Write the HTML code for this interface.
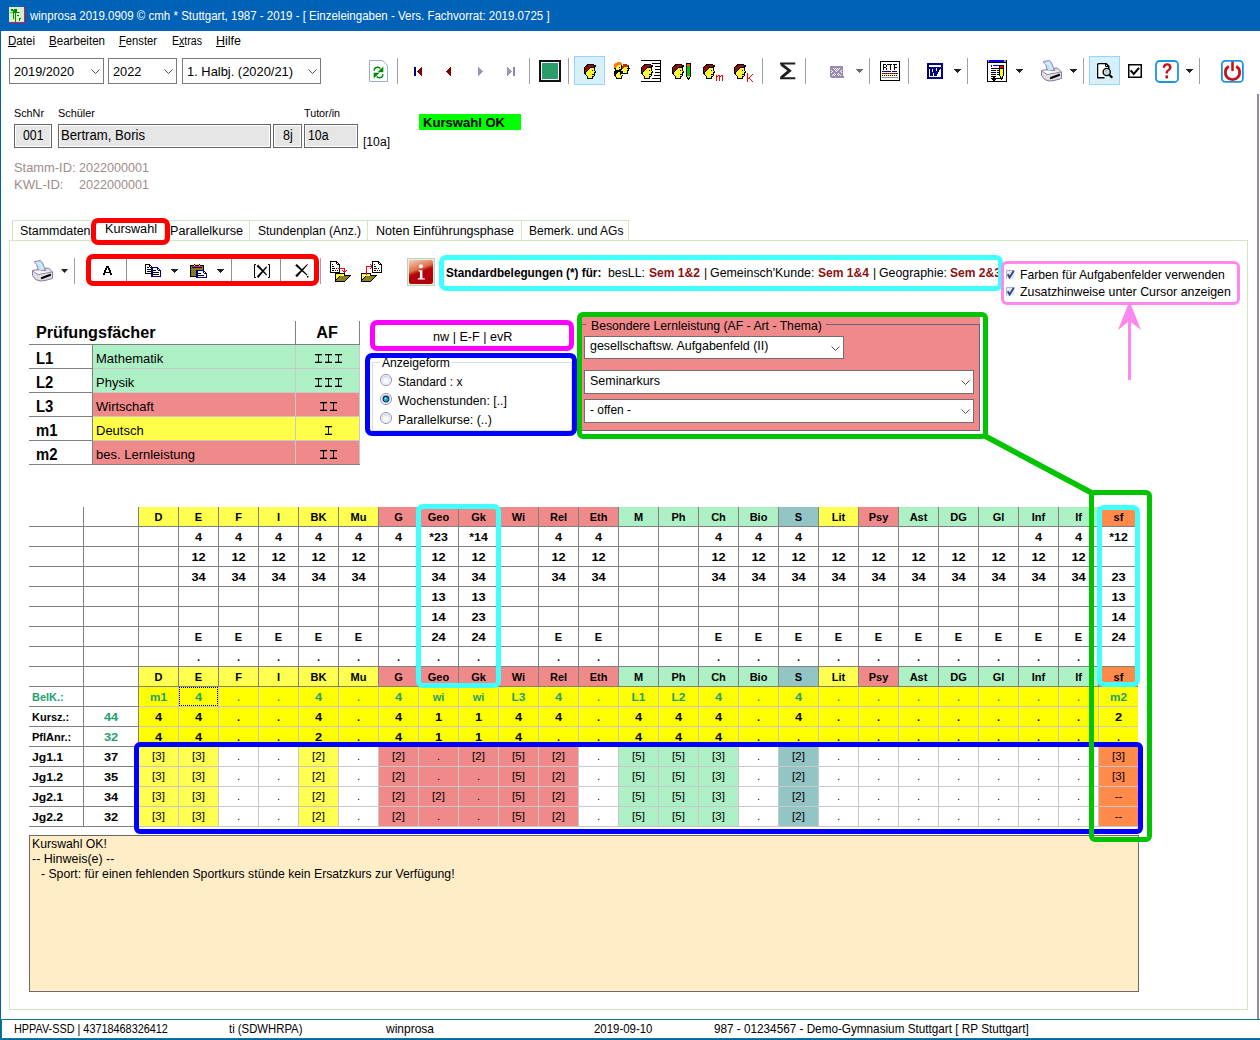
<!DOCTYPE html>
<html><head><meta charset="utf-8"><title>winprosa</title>
<style>
html,body{margin:0;padding:0;}
body{width:1260px;height:1040px;position:relative;overflow:hidden;background:#fff;font-family:"Liberation Sans",sans-serif;}
.a{position:absolute;box-sizing:border-box;}
.t{position:absolute;white-space:nowrap;line-height:1;}
svg.a{overflow:visible;}
</style></head><body>

<div class="a" style="left:0px;top:0px;width:1260px;height:31px;background:#0062b7;"></div>
<svg class="a" style="left:9px;top:7px;" width="16" height="16" viewBox="0 0 16 16" shape-rendering="crispEdges"><rect x="0" y="0" width="15" height="1" fill="#d6efc6"/><rect x="15" y="0" width="1" height="1" fill="#f01050"/><rect x="0" y="1" width="15" height="1" fill="#d6efc6"/><rect x="15" y="1" width="1" height="1" fill="#f01050"/><rect x="0" y="2" width="2" height="1" fill="#d6efc6"/><rect x="2" y="2" width="2" height="1" fill="#008a00"/><rect x="4" y="2" width="1" height="1" fill="#d6efc6"/><rect x="5" y="2" width="3" height="1" fill="#008a00"/><rect x="8" y="2" width="7" height="1" fill="#d6efc6"/><rect x="15" y="2" width="1" height="1" fill="#f01050"/><rect x="0" y="3" width="2" height="1" fill="#d6efc6"/><rect x="2" y="3" width="6" height="1" fill="#008a00"/><rect x="8" y="3" width="7" height="1" fill="#d6efc6"/><rect x="15" y="3" width="1" height="1" fill="#f01050"/><rect x="0" y="4" width="4" height="1" fill="#d6efc6"/><rect x="4" y="4" width="4" height="1" fill="#008a00"/><rect x="8" y="4" width="7" height="1" fill="#d6efc6"/><rect x="15" y="4" width="1" height="1" fill="#f01050"/><rect x="0" y="5" width="1" height="1" fill="#d6efc6"/><rect x="1" y="5" width="3" height="1" fill="#60b860"/><rect x="4" y="5" width="6" height="1" fill="#008a00"/><rect x="10" y="5" width="1" height="1" fill="#60b860"/><rect x="11" y="5" width="4" height="1" fill="#d6efc6"/><rect x="15" y="5" width="1" height="1" fill="#f01050"/><rect x="0" y="6" width="4" height="1" fill="#d6efc6"/><rect x="4" y="6" width="1" height="1" fill="#008a00"/><rect x="5" y="6" width="1" height="1" fill="#d6efc6"/><rect x="6" y="6" width="1" height="1" fill="#008a00"/><rect x="7" y="6" width="8" height="1" fill="#d6efc6"/><rect x="15" y="6" width="1" height="1" fill="#f01050"/><rect x="0" y="7" width="4" height="1" fill="#d6efc6"/><rect x="4" y="7" width="1" height="1" fill="#008a00"/><rect x="5" y="7" width="1" height="1" fill="#d6efc6"/><rect x="6" y="7" width="1" height="1" fill="#008a00"/><rect x="7" y="7" width="8" height="1" fill="#d6efc6"/><rect x="15" y="7" width="1" height="1" fill="#f01050"/><rect x="0" y="8" width="4" height="1" fill="#d6efc6"/><rect x="4" y="8" width="1" height="1" fill="#008a00"/><rect x="5" y="8" width="1" height="1" fill="#d6efc6"/><rect x="6" y="8" width="1" height="1" fill="#008a00"/><rect x="7" y="8" width="1" height="1" fill="#d6efc6"/><rect x="8" y="8" width="2" height="1" fill="#008a00"/><rect x="10" y="8" width="5" height="1" fill="#d6efc6"/><rect x="15" y="8" width="1" height="1" fill="#f01050"/><rect x="0" y="9" width="4" height="1" fill="#d6efc6"/><rect x="4" y="9" width="1" height="1" fill="#008a00"/><rect x="5" y="9" width="1" height="1" fill="#d6efc6"/><rect x="6" y="9" width="1" height="1" fill="#008a00"/><rect x="7" y="9" width="8" height="1" fill="#d6efc6"/><rect x="15" y="9" width="1" height="1" fill="#f01050"/><rect x="0" y="10" width="4" height="1" fill="#d6efc6"/><rect x="4" y="10" width="1" height="1" fill="#008a00"/><rect x="5" y="10" width="1" height="1" fill="#d6efc6"/><rect x="6" y="10" width="1" height="1" fill="#008a00"/><rect x="7" y="10" width="8" height="1" fill="#d6efc6"/><rect x="15" y="10" width="1" height="1" fill="#f01050"/><rect x="0" y="11" width="4" height="1" fill="#d6efc6"/><rect x="4" y="11" width="1" height="1" fill="#008a00"/><rect x="5" y="11" width="1" height="1" fill="#d6efc6"/><rect x="6" y="11" width="1" height="1" fill="#008a00"/><rect x="7" y="11" width="3" height="1" fill="#d6efc6"/><rect x="10" y="11" width="2" height="1" fill="#008a00"/><rect x="12" y="11" width="3" height="1" fill="#d6efc6"/><rect x="15" y="11" width="1" height="1" fill="#f01050"/><rect x="0" y="12" width="6" height="1" fill="#d6efc6"/><rect x="6" y="12" width="1" height="1" fill="#008a00"/><rect x="7" y="12" width="3" height="1" fill="#d6efc6"/><rect x="10" y="12" width="1" height="1" fill="#008a00"/><rect x="11" y="12" width="4" height="1" fill="#d6efc6"/><rect x="15" y="12" width="1" height="1" fill="#f01050"/><rect x="0" y="13" width="6" height="1" fill="#d6efc6"/><rect x="6" y="13" width="1" height="1" fill="#008a00"/><rect x="7" y="13" width="3" height="1" fill="#d6efc6"/><rect x="10" y="13" width="1" height="1" fill="#008a00"/><rect x="11" y="13" width="4" height="1" fill="#d6efc6"/><rect x="15" y="13" width="1" height="1" fill="#f01050"/><rect x="0" y="14" width="6" height="1" fill="#d6efc6"/><rect x="6" y="14" width="1" height="1" fill="#008a00"/><rect x="7" y="14" width="8" height="1" fill="#d6efc6"/><rect x="15" y="14" width="1" height="1" fill="#f01050"/><rect x="0" y="15" width="16" height="1" fill="#f01050"/></svg>
<div class="t " style="left:30px;top:9.50px;font-size:12.4px;font-weight:normal;color:#fff;transform:scaleX(0.9287);transform-origin:0 0;">winprosa 2019.0909 © cmh * Stuttgart, 1987 - 2019 - [ Einzeleingaben - Vers. Fachvorrat: 2019.0725 ]</div>
<div class="a" style="left:0px;top:31px;width:1px;height:1009px;background:#0062b7;"></div>
<div class="a" style="left:0px;top:1039px;width:1260px;height:1px;background:#0062b7;"></div>
<div class="t " style="left:8px;top:34.84px;font-size:12px;font-weight:normal;color:#000;transform:scaleX(0.9638);transform-origin:0 0;text-decoration-thickness:1px;text-underline-offset:1px;"><u>D</u>atei</div>
<div class="t " style="left:49px;top:34.84px;font-size:12px;font-weight:normal;color:#000;transform:scaleX(0.9648);transform-origin:0 0;text-decoration-thickness:1px;text-underline-offset:1px;"><u>B</u>earbeiten</div>
<div class="t " style="left:119px;top:34.84px;font-size:12px;font-weight:normal;color:#000;transform:scaleX(0.9341);transform-origin:0 0;text-decoration-thickness:1px;text-underline-offset:1px;"><u>F</u>enster</div>
<div class="t " style="left:172px;top:34.84px;font-size:12px;font-weight:normal;color:#000;transform:scaleX(0.8821);transform-origin:0 0;text-decoration-thickness:1px;text-underline-offset:1px;">E<u>x</u>tras</div>
<div class="t " style="left:216px;top:34.84px;font-size:12px;font-weight:normal;color:#000;transform:scaleX(1.0414);transform-origin:0 0;text-decoration-thickness:1px;text-underline-offset:1px;"><u>H</u>ilfe</div>
<div class="a" style="left:9px;top:58px;width:95px;height:26px;background:#fff;border:1px solid #7a7a7a;"></div>
<div class="t " style="left:14px;top:65.00px;font-size:13px;font-weight:normal;color:#000;transform:scaleX(0.9763);transform-origin:0 0;">2019/2020</div>
<svg class="a" style="left:91px;top:69px;" width="9" height="6" viewBox="0 0 9 6"><path d="M0.5 0.5 L4.5 4.5 L8.5 0.5" fill="none" stroke="#505050" stroke-width="1"/></svg>
<div class="a" style="left:108px;top:58px;width:69px;height:26px;background:#fff;border:1px solid #7a7a7a;"></div>
<div class="t " style="left:113px;top:65.00px;font-size:13px;font-weight:normal;color:#000;transform:scaleX(0.9854);transform-origin:0 0;">2022</div>
<svg class="a" style="left:164px;top:69px;" width="9" height="6" viewBox="0 0 9 6"><path d="M0.5 0.5 L4.5 4.5 L8.5 0.5" fill="none" stroke="#505050" stroke-width="1"/></svg>
<div class="a" style="left:182px;top:58px;width:139px;height:26px;background:#fff;border:1px solid #7a7a7a;"></div>
<div class="t " style="left:187px;top:65.00px;font-size:13px;font-weight:normal;color:#000;transform:scaleX(0.9911);transform-origin:0 0;">1. Halbj. (2020/21)</div>
<svg class="a" style="left:308px;top:69px;" width="9" height="6" viewBox="0 0 9 6"><path d="M0.5 0.5 L4.5 4.5 L8.5 0.5" fill="none" stroke="#505050" stroke-width="1"/></svg>
<svg class="a" style="left:369px;top:60px;" width="20" height="22" viewBox="0 0 20 22"><path d="M0.5 0.5H13.5L18.5 5.5V21.5H0.5Z" fill="#fff" stroke="#9ab0c8"/><path d="M5.2 10.8C5.2 8.5 6.8 7.2 8.8 7.2C10 7.2 10.8 7.8 11.4 8.6" fill="none" stroke="#008a00" stroke-width="1.5"/><path d="M8.5 12.3H14.3V6.5Z" fill="#008a00"/><path d="M13.8 14.2C13.8 16.5 12.2 17.8 10.2 17.8C9 17.8 8.2 17.2 7.6 16.4" fill="none" stroke="#008a00" stroke-width="1.5"/><path d="M10.5 12.7H4.7V18.5Z" fill="#008a00"/></svg>
<div class="a" style="left:397px;top:58px;width:1px;height:26px;background:#a0a0a0;"></div>
<svg class="a" style="left:414px;top:67px;" width="8" height="9" viewBox="0 0 8 9" shape-rendering="crispEdges"><rect x="0" y="0" width="2" height="1" fill="#000080"/><rect x="7" y="0" width="1" height="1" fill="#800000"/><rect x="0" y="1" width="2" height="1" fill="#000080"/><rect x="6" y="1" width="2" height="1" fill="#800000"/><rect x="0" y="2" width="2" height="1" fill="#000080"/><rect x="5" y="2" width="3" height="1" fill="#800000"/><rect x="0" y="3" width="2" height="1" fill="#000080"/><rect x="4" y="3" width="4" height="1" fill="#800000"/><rect x="0" y="4" width="2" height="1" fill="#000080"/><rect x="3" y="4" width="5" height="1" fill="#800000"/><rect x="0" y="5" width="2" height="1" fill="#000080"/><rect x="4" y="5" width="4" height="1" fill="#800000"/><rect x="0" y="6" width="2" height="1" fill="#000080"/><rect x="5" y="6" width="3" height="1" fill="#800000"/><rect x="0" y="7" width="2" height="1" fill="#000080"/><rect x="6" y="7" width="2" height="1" fill="#800000"/><rect x="0" y="8" width="2" height="1" fill="#000080"/><rect x="7" y="8" width="1" height="1" fill="#800000"/></svg>
<svg class="a" style="left:446px;top:67px;" width="5" height="9" viewBox="0 0 5 9" shape-rendering="crispEdges"><rect x="4" y="0" width="1" height="1" fill="#800000"/><rect x="3" y="1" width="2" height="1" fill="#800000"/><rect x="2" y="2" width="3" height="1" fill="#800000"/><rect x="1" y="3" width="4" height="1" fill="#800000"/><rect x="0" y="4" width="5" height="1" fill="#800000"/><rect x="1" y="5" width="4" height="1" fill="#800000"/><rect x="2" y="6" width="3" height="1" fill="#800000"/><rect x="3" y="7" width="2" height="1" fill="#800000"/><rect x="4" y="8" width="1" height="1" fill="#800000"/></svg>
<svg class="a" style="left:478px;top:67px;" width="5" height="9" viewBox="0 0 5 9" shape-rendering="crispEdges"><rect x="0" y="0" width="1" height="1" fill="#a292b4"/><rect x="0" y="1" width="2" height="1" fill="#a292b4"/><rect x="0" y="2" width="3" height="1" fill="#a292b4"/><rect x="0" y="3" width="4" height="1" fill="#a292b4"/><rect x="0" y="4" width="5" height="1" fill="#a292b4"/><rect x="0" y="5" width="4" height="1" fill="#a292b4"/><rect x="0" y="6" width="3" height="1" fill="#a292b4"/><rect x="0" y="7" width="2" height="1" fill="#a292b4"/><rect x="0" y="8" width="1" height="1" fill="#a292b4"/></svg>
<svg class="a" style="left:507px;top:67px;" width="8" height="9" viewBox="0 0 8 9" shape-rendering="crispEdges"><rect x="0" y="0" width="1" height="1" fill="#a292b4"/><rect x="6" y="0" width="2" height="1" fill="#9484a8"/><rect x="0" y="1" width="2" height="1" fill="#a292b4"/><rect x="6" y="1" width="2" height="1" fill="#9484a8"/><rect x="0" y="2" width="3" height="1" fill="#a292b4"/><rect x="6" y="2" width="2" height="1" fill="#9484a8"/><rect x="0" y="3" width="4" height="1" fill="#a292b4"/><rect x="6" y="3" width="2" height="1" fill="#9484a8"/><rect x="0" y="4" width="5" height="1" fill="#a292b4"/><rect x="6" y="4" width="2" height="1" fill="#9484a8"/><rect x="0" y="5" width="4" height="1" fill="#a292b4"/><rect x="6" y="5" width="2" height="1" fill="#9484a8"/><rect x="0" y="6" width="3" height="1" fill="#a292b4"/><rect x="6" y="6" width="2" height="1" fill="#9484a8"/><rect x="0" y="7" width="2" height="1" fill="#a292b4"/><rect x="6" y="7" width="2" height="1" fill="#9484a8"/><rect x="0" y="8" width="1" height="1" fill="#a292b4"/><rect x="6" y="8" width="2" height="1" fill="#9484a8"/></svg>
<div class="a" style="left:529px;top:58px;width:1px;height:26px;background:#a0a0a0;"></div>
<div class="a" style="left:539px;top:60px;width:22px;height:22px;border:2px solid #111;background:#fff;"></div>
<div class="a" style="left:542px;top:63px;width:16px;height:16px;background:#2a9d6a;"></div>
<div class="a" style="left:568px;top:58px;width:1px;height:26px;background:#a0a0a0;"></div>
<div class="a" style="left:574px;top:56px;width:31px;height:29px;background:#d5f1fd;border:1px solid #99d1ff;"></div>
<svg class="a" style="left:584px;top:64px;" width="12" height="15" viewBox="0 0 12 15" shape-rendering="crispEdges"><rect x="3" y="0" width="7" height="1" fill="#000"/><rect x="2" y="1" width="2" height="1" fill="#000"/><rect x="4" y="1" width="6" height="1" fill="#8e0c0c"/><rect x="10" y="1" width="2" height="1" fill="#000"/><rect x="1" y="2" width="1" height="1" fill="#000"/><rect x="2" y="2" width="8" height="1" fill="#8e0c0c"/><rect x="10" y="2" width="2" height="1" fill="#000"/><rect x="0" y="3" width="1" height="1" fill="#000"/><rect x="1" y="3" width="5" height="1" fill="#8e0c0c"/><rect x="6" y="3" width="5" height="1" fill="#000"/><rect x="0" y="4" width="1" height="1" fill="#000"/><rect x="1" y="4" width="4" height="1" fill="#8e0c0c"/><rect x="5" y="4" width="1" height="1" fill="#000"/><rect x="6" y="4" width="1" height="1" fill="#ffff00"/><rect x="7" y="4" width="1" height="1" fill="#e6ecd8"/><rect x="8" y="4" width="1" height="1" fill="#ffff00"/><rect x="9" y="4" width="1" height="1" fill="#e6ecd8"/><rect x="10" y="4" width="1" height="1" fill="#000"/><rect x="0" y="5" width="1" height="1" fill="#000"/><rect x="1" y="5" width="3" height="1" fill="#8e0c0c"/><rect x="4" y="5" width="1" height="1" fill="#000"/><rect x="5" y="5" width="1" height="1" fill="#ffff00"/><rect x="6" y="5" width="1" height="1" fill="#ffff00"/><rect x="7" y="5" width="1" height="1" fill="#ffff00"/><rect x="8" y="5" width="1" height="1" fill="#ffff00"/><rect x="9" y="5" width="1" height="1" fill="#ffff00"/><rect x="10" y="5" width="1" height="1" fill="#000"/><rect x="0" y="6" width="1" height="1" fill="#000"/><rect x="1" y="6" width="2" height="1" fill="#8e0c0c"/><rect x="3" y="6" width="1" height="1" fill="#000"/><rect x="4" y="6" width="1" height="1" fill="#ffff00"/><rect x="5" y="6" width="1" height="1" fill="#e6ecd8"/><rect x="6" y="6" width="1" height="1" fill="#ffff00"/><rect x="7" y="6" width="1" height="1" fill="#e6ecd8"/><rect x="8" y="6" width="1" height="1" fill="#000"/><rect x="9" y="6" width="1" height="1" fill="#e6ecd8"/><rect x="10" y="6" width="1" height="1" fill="#000"/><rect x="0" y="7" width="1" height="1" fill="#000"/><rect x="1" y="7" width="1" height="1" fill="#8e0c0c"/><rect x="2" y="7" width="1" height="1" fill="#000"/><rect x="3" y="7" width="1" height="1" fill="#ffff00"/><rect x="4" y="7" width="1" height="1" fill="#ffff00"/><rect x="5" y="7" width="1" height="1" fill="#ffff00"/><rect x="6" y="7" width="1" height="1" fill="#ffff00"/><rect x="7" y="7" width="1" height="1" fill="#ffff00"/><rect x="8" y="7" width="1" height="1" fill="#ffff00"/><rect x="9" y="7" width="1" height="1" fill="#ffff00"/><rect x="10" y="7" width="1" height="1" fill="#ffff00"/><rect x="11" y="7" width="1" height="1" fill="#000"/><rect x="0" y="8" width="2" height="1" fill="#000"/><rect x="2" y="8" width="1" height="1" fill="#ffff00"/><rect x="3" y="8" width="1" height="1" fill="#e6ecd8"/><rect x="4" y="8" width="1" height="1" fill="#ffff00"/><rect x="5" y="8" width="1" height="1" fill="#e6ecd8"/><rect x="6" y="8" width="1" height="1" fill="#ffff00"/><rect x="7" y="8" width="1" height="1" fill="#e6ecd8"/><rect x="8" y="8" width="1" height="1" fill="#ffff00"/><rect x="9" y="8" width="1" height="1" fill="#e6ecd8"/><rect x="10" y="8" width="2" height="1" fill="#000"/><rect x="0" y="9" width="2" height="1" fill="#000"/><rect x="2" y="9" width="1" height="1" fill="#ffff00"/><rect x="3" y="9" width="1" height="1" fill="#ffff00"/><rect x="4" y="9" width="1" height="1" fill="#ffff00"/><rect x="5" y="9" width="1" height="1" fill="#ffff00"/><rect x="6" y="9" width="1" height="1" fill="#ffff00"/><rect x="7" y="9" width="1" height="1" fill="#ffff00"/><rect x="8" y="9" width="1" height="1" fill="#ffff00"/><rect x="9" y="9" width="1" height="1" fill="#ffff00"/><rect x="10" y="9" width="1" height="1" fill="#000"/><rect x="1" y="10" width="1" height="1" fill="#000"/><rect x="2" y="10" width="1" height="1" fill="#ffff00"/><rect x="3" y="10" width="1" height="1" fill="#e6ecd8"/><rect x="4" y="10" width="1" height="1" fill="#ffff00"/><rect x="5" y="10" width="1" height="1" fill="#e6ecd8"/><rect x="6" y="10" width="1" height="1" fill="#ffff00"/><rect x="7" y="10" width="1" height="1" fill="#e6ecd8"/><rect x="8" y="10" width="3" height="1" fill="#000"/><rect x="2" y="11" width="1" height="1" fill="#000"/><rect x="3" y="11" width="1" height="1" fill="#ffff00"/><rect x="4" y="11" width="1" height="1" fill="#ffff00"/><rect x="5" y="11" width="1" height="1" fill="#ffff00"/><rect x="6" y="11" width="1" height="1" fill="#ffff00"/><rect x="7" y="11" width="1" height="1" fill="#ffff00"/><rect x="8" y="11" width="1" height="1" fill="#ffff00"/><rect x="9" y="11" width="1" height="1" fill="#ffff00"/><rect x="10" y="11" width="1" height="1" fill="#000"/><rect x="3" y="12" width="1" height="1" fill="#000"/><rect x="4" y="12" width="1" height="1" fill="#ffff00"/><rect x="5" y="12" width="1" height="1" fill="#e6ecd8"/><rect x="6" y="12" width="1" height="1" fill="#ffff00"/><rect x="7" y="12" width="1" height="1" fill="#e6ecd8"/><rect x="8" y="12" width="2" height="1" fill="#000"/><rect x="3" y="13" width="1" height="1" fill="#000"/><rect x="4" y="13" width="1" height="1" fill="#ffff00"/><rect x="5" y="13" width="1" height="1" fill="#ffff00"/><rect x="6" y="13" width="1" height="1" fill="#ffff00"/><rect x="7" y="13" width="1" height="1" fill="#ffff00"/><rect x="8" y="13" width="1" height="1" fill="#000"/><rect x="3" y="14" width="6" height="1" fill="#000"/></svg>
<svg class="a" style="left:614px;top:62px;" width="16" height="17" viewBox="0 0 16 17" shape-rendering="crispEdges"><rect x="3" y="0" width="4" height="1" fill="#ff7a10"/><rect x="1" y="1" width="7" height="1" fill="#ff7a10"/><rect x="0" y="2" width="8" height="1" fill="#ff7a10"/><rect x="9" y="2" width="4" height="1" fill="#b83000"/><rect x="0" y="3" width="4" height="1" fill="#ff7a10"/><rect x="4" y="3" width="1" height="1" fill="#ffff00"/><rect x="5" y="3" width="1" height="1" fill="#ffff00"/><rect x="6" y="3" width="1" height="1" fill="#ffff00"/><rect x="7" y="3" width="1" height="1" fill="#000"/><rect x="9" y="3" width="6" height="1" fill="#b83000"/><rect x="0" y="4" width="3" height="1" fill="#ff7a10"/><rect x="3" y="4" width="1" height="1" fill="#e6ecd8"/><rect x="4" y="4" width="1" height="1" fill="#ffff00"/><rect x="5" y="4" width="1" height="1" fill="#e6ecd8"/><rect x="6" y="4" width="1" height="1" fill="#ffff00"/><rect x="7" y="4" width="1" height="1" fill="#000"/><rect x="8" y="4" width="6" height="1" fill="#b83000"/><rect x="14" y="4" width="1" height="1" fill="#000"/><rect x="0" y="5" width="2" height="1" fill="#ff7a10"/><rect x="2" y="5" width="1" height="1" fill="#ffff00"/><rect x="3" y="5" width="1" height="1" fill="#ffff00"/><rect x="4" y="5" width="1" height="1" fill="#ffff00"/><rect x="5" y="5" width="1" height="1" fill="#000"/><rect x="6" y="5" width="1" height="1" fill="#ffff00"/><rect x="7" y="5" width="1" height="1" fill="#000"/><rect x="8" y="5" width="2" height="1" fill="#b83000"/><rect x="10" y="5" width="1" height="1" fill="#ffff00"/><rect x="11" y="5" width="1" height="1" fill="#ffff00"/><rect x="12" y="5" width="1" height="1" fill="#ffff00"/><rect x="13" y="5" width="1" height="1" fill="#ffff00"/><rect x="14" y="5" width="1" height="1" fill="#000"/><rect x="0" y="6" width="2" height="1" fill="#000"/><rect x="2" y="6" width="1" height="1" fill="#ffff00"/><rect x="3" y="6" width="1" height="1" fill="#e6ecd8"/><rect x="4" y="6" width="1" height="1" fill="#ffff00"/><rect x="5" y="6" width="1" height="1" fill="#e6ecd8"/><rect x="6" y="6" width="1" height="1" fill="#ffff00"/><rect x="7" y="6" width="1" height="1" fill="#000"/><rect x="8" y="6" width="1" height="1" fill="#b83000"/><rect x="9" y="6" width="1" height="1" fill="#e6ecd8"/><rect x="10" y="6" width="1" height="1" fill="#ffff00"/><rect x="11" y="6" width="1" height="1" fill="#e6ecd8"/><rect x="12" y="6" width="1" height="1" fill="#ffff00"/><rect x="13" y="6" width="3" height="1" fill="#000"/><rect x="1" y="7" width="1" height="1" fill="#000"/><rect x="2" y="7" width="1" height="1" fill="#ffff00"/><rect x="3" y="7" width="1" height="1" fill="#ffff00"/><rect x="4" y="7" width="1" height="1" fill="#ffff00"/><rect x="5" y="7" width="3" height="1" fill="#000"/><rect x="8" y="7" width="1" height="1" fill="#ffff00"/><rect x="9" y="7" width="1" height="1" fill="#ffff00"/><rect x="10" y="7" width="1" height="1" fill="#ffff00"/><rect x="11" y="7" width="1" height="1" fill="#ffff00"/><rect x="12" y="7" width="1" height="1" fill="#ffff00"/><rect x="13" y="7" width="1" height="1" fill="#ffff00"/><rect x="14" y="7" width="1" height="1" fill="#000"/><rect x="1" y="8" width="6" height="1" fill="#000"/><rect x="7" y="8" width="1" height="1" fill="#e6ecd8"/><rect x="8" y="8" width="1" height="1" fill="#ffff00"/><rect x="9" y="8" width="1" height="1" fill="#e6ecd8"/><rect x="10" y="8" width="1" height="1" fill="#ffff00"/><rect x="11" y="8" width="1" height="1" fill="#e6ecd8"/><rect x="12" y="8" width="1" height="1" fill="#ffff00"/><rect x="13" y="8" width="2" height="1" fill="#000"/><rect x="0" y="9" width="9" height="1" fill="#000"/><rect x="9" y="9" width="1" height="1" fill="#ffff00"/><rect x="10" y="9" width="1" height="1" fill="#ffff00"/><rect x="11" y="9" width="1" height="1" fill="#ffff00"/><rect x="12" y="9" width="1" height="1" fill="#ffff00"/><rect x="13" y="9" width="1" height="1" fill="#000"/><rect x="0" y="10" width="4" height="1" fill="#000"/><rect x="4" y="10" width="1" height="1" fill="#ffff00"/><rect x="5" y="10" width="1" height="1" fill="#e6ecd8"/><rect x="6" y="10" width="3" height="1" fill="#000"/><rect x="9" y="10" width="1" height="1" fill="#e6ecd8"/><rect x="10" y="10" width="1" height="1" fill="#ffff00"/><rect x="11" y="10" width="1" height="1" fill="#e6ecd8"/><rect x="12" y="10" width="1" height="1" fill="#ffff00"/><rect x="13" y="10" width="1" height="1" fill="#000"/><rect x="0" y="11" width="3" height="1" fill="#000"/><rect x="3" y="11" width="1" height="1" fill="#ffff00"/><rect x="4" y="11" width="1" height="1" fill="#ffff00"/><rect x="5" y="11" width="1" height="1" fill="#ffff00"/><rect x="6" y="11" width="8" height="1" fill="#000"/><rect x="0" y="12" width="2" height="1" fill="#000"/><rect x="2" y="12" width="1" height="1" fill="#ffff00"/><rect x="3" y="12" width="1" height="1" fill="#e6ecd8"/><rect x="4" y="12" width="1" height="1" fill="#ffff00"/><rect x="5" y="12" width="1" height="1" fill="#e6ecd8"/><rect x="6" y="12" width="1" height="1" fill="#000"/><rect x="7" y="12" width="1" height="1" fill="#e6ecd8"/><rect x="0" y="13" width="2" height="1" fill="#000"/><rect x="2" y="13" width="1" height="1" fill="#ffff00"/><rect x="3" y="13" width="1" height="1" fill="#ffff00"/><rect x="4" y="13" width="1" height="1" fill="#ffff00"/><rect x="5" y="13" width="1" height="1" fill="#ffff00"/><rect x="6" y="13" width="1" height="1" fill="#ffff00"/><rect x="7" y="13" width="1" height="1" fill="#ffff00"/><rect x="8" y="13" width="1" height="1" fill="#000"/><rect x="1" y="14" width="1" height="1" fill="#000"/><rect x="2" y="14" width="1" height="1" fill="#ffff00"/><rect x="3" y="14" width="1" height="1" fill="#e6ecd8"/><rect x="4" y="14" width="1" height="1" fill="#ffff00"/><rect x="5" y="14" width="1" height="1" fill="#e6ecd8"/><rect x="6" y="14" width="1" height="1" fill="#ffff00"/><rect x="7" y="14" width="1" height="1" fill="#000"/><rect x="2" y="15" width="1" height="1" fill="#000"/><rect x="3" y="15" width="1" height="1" fill="#ffff00"/><rect x="4" y="15" width="1" height="1" fill="#ffff00"/><rect x="5" y="15" width="1" height="1" fill="#ffff00"/><rect x="6" y="15" width="1" height="1" fill="#ffff00"/><rect x="7" y="15" width="1" height="1" fill="#000"/><rect x="2" y="16" width="6" height="1" fill="#000"/></svg>
<div class="a" style="left:641px;top:60px;width:20px;height:1px;background:#000;"></div>
<div class="a" style="left:641px;top:81px;width:20px;height:1px;background:#000;"></div>
<div class="a" style="left:660px;top:60px;width:1px;height:22px;background:#000;"></div>
<div class="a" style="left:652px;top:63px;width:8px;height:1px;background:#000;"></div>
<div class="a" style="left:655px;top:66px;width:5px;height:1px;background:#000;"></div>
<div class="a" style="left:655px;top:69px;width:5px;height:1px;background:#000;"></div>
<div class="a" style="left:655px;top:72px;width:5px;height:1px;background:#000;"></div>
<div class="a" style="left:654px;top:75px;width:6px;height:1px;background:#000;"></div>
<div class="a" style="left:652px;top:78px;width:8px;height:1px;background:#000;"></div>
<svg class="a" style="left:641px;top:64px;" width="12" height="15" viewBox="0 0 12 15" shape-rendering="crispEdges"><rect x="3" y="0" width="7" height="1" fill="#000"/><rect x="2" y="1" width="2" height="1" fill="#000"/><rect x="4" y="1" width="6" height="1" fill="#8e0c0c"/><rect x="10" y="1" width="2" height="1" fill="#000"/><rect x="1" y="2" width="1" height="1" fill="#000"/><rect x="2" y="2" width="8" height="1" fill="#8e0c0c"/><rect x="10" y="2" width="2" height="1" fill="#000"/><rect x="0" y="3" width="1" height="1" fill="#000"/><rect x="1" y="3" width="5" height="1" fill="#8e0c0c"/><rect x="6" y="3" width="5" height="1" fill="#000"/><rect x="0" y="4" width="1" height="1" fill="#000"/><rect x="1" y="4" width="4" height="1" fill="#8e0c0c"/><rect x="5" y="4" width="1" height="1" fill="#000"/><rect x="6" y="4" width="1" height="1" fill="#ffff00"/><rect x="7" y="4" width="1" height="1" fill="#e6ecd8"/><rect x="8" y="4" width="1" height="1" fill="#ffff00"/><rect x="9" y="4" width="1" height="1" fill="#e6ecd8"/><rect x="10" y="4" width="1" height="1" fill="#000"/><rect x="0" y="5" width="1" height="1" fill="#000"/><rect x="1" y="5" width="3" height="1" fill="#8e0c0c"/><rect x="4" y="5" width="1" height="1" fill="#000"/><rect x="5" y="5" width="1" height="1" fill="#ffff00"/><rect x="6" y="5" width="1" height="1" fill="#ffff00"/><rect x="7" y="5" width="1" height="1" fill="#ffff00"/><rect x="8" y="5" width="1" height="1" fill="#ffff00"/><rect x="9" y="5" width="1" height="1" fill="#ffff00"/><rect x="10" y="5" width="1" height="1" fill="#000"/><rect x="0" y="6" width="1" height="1" fill="#000"/><rect x="1" y="6" width="2" height="1" fill="#8e0c0c"/><rect x="3" y="6" width="1" height="1" fill="#000"/><rect x="4" y="6" width="1" height="1" fill="#ffff00"/><rect x="5" y="6" width="1" height="1" fill="#e6ecd8"/><rect x="6" y="6" width="1" height="1" fill="#ffff00"/><rect x="7" y="6" width="1" height="1" fill="#e6ecd8"/><rect x="8" y="6" width="1" height="1" fill="#000"/><rect x="9" y="6" width="1" height="1" fill="#e6ecd8"/><rect x="10" y="6" width="1" height="1" fill="#000"/><rect x="0" y="7" width="1" height="1" fill="#000"/><rect x="1" y="7" width="1" height="1" fill="#8e0c0c"/><rect x="2" y="7" width="1" height="1" fill="#000"/><rect x="3" y="7" width="1" height="1" fill="#ffff00"/><rect x="4" y="7" width="1" height="1" fill="#ffff00"/><rect x="5" y="7" width="1" height="1" fill="#ffff00"/><rect x="6" y="7" width="1" height="1" fill="#ffff00"/><rect x="7" y="7" width="1" height="1" fill="#ffff00"/><rect x="8" y="7" width="1" height="1" fill="#ffff00"/><rect x="9" y="7" width="1" height="1" fill="#ffff00"/><rect x="10" y="7" width="1" height="1" fill="#ffff00"/><rect x="11" y="7" width="1" height="1" fill="#000"/><rect x="0" y="8" width="2" height="1" fill="#000"/><rect x="2" y="8" width="1" height="1" fill="#ffff00"/><rect x="3" y="8" width="1" height="1" fill="#e6ecd8"/><rect x="4" y="8" width="1" height="1" fill="#ffff00"/><rect x="5" y="8" width="1" height="1" fill="#e6ecd8"/><rect x="6" y="8" width="1" height="1" fill="#ffff00"/><rect x="7" y="8" width="1" height="1" fill="#e6ecd8"/><rect x="8" y="8" width="1" height="1" fill="#ffff00"/><rect x="9" y="8" width="1" height="1" fill="#e6ecd8"/><rect x="10" y="8" width="2" height="1" fill="#000"/><rect x="0" y="9" width="2" height="1" fill="#000"/><rect x="2" y="9" width="1" height="1" fill="#ffff00"/><rect x="3" y="9" width="1" height="1" fill="#ffff00"/><rect x="4" y="9" width="1" height="1" fill="#ffff00"/><rect x="5" y="9" width="1" height="1" fill="#ffff00"/><rect x="6" y="9" width="1" height="1" fill="#ffff00"/><rect x="7" y="9" width="1" height="1" fill="#ffff00"/><rect x="8" y="9" width="1" height="1" fill="#ffff00"/><rect x="9" y="9" width="1" height="1" fill="#ffff00"/><rect x="10" y="9" width="1" height="1" fill="#000"/><rect x="1" y="10" width="1" height="1" fill="#000"/><rect x="2" y="10" width="1" height="1" fill="#ffff00"/><rect x="3" y="10" width="1" height="1" fill="#e6ecd8"/><rect x="4" y="10" width="1" height="1" fill="#ffff00"/><rect x="5" y="10" width="1" height="1" fill="#e6ecd8"/><rect x="6" y="10" width="1" height="1" fill="#ffff00"/><rect x="7" y="10" width="1" height="1" fill="#e6ecd8"/><rect x="8" y="10" width="3" height="1" fill="#000"/><rect x="2" y="11" width="1" height="1" fill="#000"/><rect x="3" y="11" width="1" height="1" fill="#ffff00"/><rect x="4" y="11" width="1" height="1" fill="#ffff00"/><rect x="5" y="11" width="1" height="1" fill="#ffff00"/><rect x="6" y="11" width="1" height="1" fill="#ffff00"/><rect x="7" y="11" width="1" height="1" fill="#ffff00"/><rect x="8" y="11" width="1" height="1" fill="#ffff00"/><rect x="9" y="11" width="1" height="1" fill="#ffff00"/><rect x="10" y="11" width="1" height="1" fill="#000"/><rect x="3" y="12" width="1" height="1" fill="#000"/><rect x="4" y="12" width="1" height="1" fill="#ffff00"/><rect x="5" y="12" width="1" height="1" fill="#e6ecd8"/><rect x="6" y="12" width="1" height="1" fill="#ffff00"/><rect x="7" y="12" width="1" height="1" fill="#e6ecd8"/><rect x="8" y="12" width="2" height="1" fill="#000"/><rect x="3" y="13" width="1" height="1" fill="#000"/><rect x="4" y="13" width="1" height="1" fill="#ffff00"/><rect x="5" y="13" width="1" height="1" fill="#ffff00"/><rect x="6" y="13" width="1" height="1" fill="#ffff00"/><rect x="7" y="13" width="1" height="1" fill="#ffff00"/><rect x="8" y="13" width="1" height="1" fill="#000"/><rect x="3" y="14" width="6" height="1" fill="#000"/></svg>
<svg class="a" style="left:672px;top:64px;" width="12" height="15" viewBox="0 0 12 15" shape-rendering="crispEdges"><rect x="3" y="0" width="7" height="1" fill="#000"/><rect x="2" y="1" width="2" height="1" fill="#000"/><rect x="4" y="1" width="6" height="1" fill="#8e0c0c"/><rect x="10" y="1" width="2" height="1" fill="#000"/><rect x="1" y="2" width="1" height="1" fill="#000"/><rect x="2" y="2" width="8" height="1" fill="#8e0c0c"/><rect x="10" y="2" width="2" height="1" fill="#000"/><rect x="0" y="3" width="1" height="1" fill="#000"/><rect x="1" y="3" width="5" height="1" fill="#8e0c0c"/><rect x="6" y="3" width="5" height="1" fill="#000"/><rect x="0" y="4" width="1" height="1" fill="#000"/><rect x="1" y="4" width="4" height="1" fill="#8e0c0c"/><rect x="5" y="4" width="1" height="1" fill="#000"/><rect x="6" y="4" width="1" height="1" fill="#ffff00"/><rect x="7" y="4" width="1" height="1" fill="#e6ecd8"/><rect x="8" y="4" width="1" height="1" fill="#ffff00"/><rect x="9" y="4" width="1" height="1" fill="#e6ecd8"/><rect x="10" y="4" width="1" height="1" fill="#000"/><rect x="0" y="5" width="1" height="1" fill="#000"/><rect x="1" y="5" width="3" height="1" fill="#8e0c0c"/><rect x="4" y="5" width="1" height="1" fill="#000"/><rect x="5" y="5" width="1" height="1" fill="#ffff00"/><rect x="6" y="5" width="1" height="1" fill="#ffff00"/><rect x="7" y="5" width="1" height="1" fill="#ffff00"/><rect x="8" y="5" width="1" height="1" fill="#ffff00"/><rect x="9" y="5" width="1" height="1" fill="#ffff00"/><rect x="10" y="5" width="1" height="1" fill="#000"/><rect x="0" y="6" width="1" height="1" fill="#000"/><rect x="1" y="6" width="2" height="1" fill="#8e0c0c"/><rect x="3" y="6" width="1" height="1" fill="#000"/><rect x="4" y="6" width="1" height="1" fill="#ffff00"/><rect x="5" y="6" width="1" height="1" fill="#e6ecd8"/><rect x="6" y="6" width="1" height="1" fill="#ffff00"/><rect x="7" y="6" width="1" height="1" fill="#e6ecd8"/><rect x="8" y="6" width="1" height="1" fill="#000"/><rect x="9" y="6" width="1" height="1" fill="#e6ecd8"/><rect x="10" y="6" width="1" height="1" fill="#000"/><rect x="0" y="7" width="1" height="1" fill="#000"/><rect x="1" y="7" width="1" height="1" fill="#8e0c0c"/><rect x="2" y="7" width="1" height="1" fill="#000"/><rect x="3" y="7" width="1" height="1" fill="#ffff00"/><rect x="4" y="7" width="1" height="1" fill="#ffff00"/><rect x="5" y="7" width="1" height="1" fill="#ffff00"/><rect x="6" y="7" width="1" height="1" fill="#ffff00"/><rect x="7" y="7" width="1" height="1" fill="#ffff00"/><rect x="8" y="7" width="1" height="1" fill="#ffff00"/><rect x="9" y="7" width="1" height="1" fill="#ffff00"/><rect x="10" y="7" width="1" height="1" fill="#ffff00"/><rect x="11" y="7" width="1" height="1" fill="#000"/><rect x="0" y="8" width="2" height="1" fill="#000"/><rect x="2" y="8" width="1" height="1" fill="#ffff00"/><rect x="3" y="8" width="1" height="1" fill="#e6ecd8"/><rect x="4" y="8" width="1" height="1" fill="#ffff00"/><rect x="5" y="8" width="1" height="1" fill="#e6ecd8"/><rect x="6" y="8" width="1" height="1" fill="#ffff00"/><rect x="7" y="8" width="1" height="1" fill="#e6ecd8"/><rect x="8" y="8" width="1" height="1" fill="#ffff00"/><rect x="9" y="8" width="1" height="1" fill="#e6ecd8"/><rect x="10" y="8" width="2" height="1" fill="#000"/><rect x="0" y="9" width="2" height="1" fill="#000"/><rect x="2" y="9" width="1" height="1" fill="#ffff00"/><rect x="3" y="9" width="1" height="1" fill="#ffff00"/><rect x="4" y="9" width="1" height="1" fill="#ffff00"/><rect x="5" y="9" width="1" height="1" fill="#ffff00"/><rect x="6" y="9" width="1" height="1" fill="#ffff00"/><rect x="7" y="9" width="1" height="1" fill="#ffff00"/><rect x="8" y="9" width="1" height="1" fill="#ffff00"/><rect x="9" y="9" width="1" height="1" fill="#ffff00"/><rect x="10" y="9" width="1" height="1" fill="#000"/><rect x="1" y="10" width="1" height="1" fill="#000"/><rect x="2" y="10" width="1" height="1" fill="#ffff00"/><rect x="3" y="10" width="1" height="1" fill="#e6ecd8"/><rect x="4" y="10" width="1" height="1" fill="#ffff00"/><rect x="5" y="10" width="1" height="1" fill="#e6ecd8"/><rect x="6" y="10" width="1" height="1" fill="#ffff00"/><rect x="7" y="10" width="1" height="1" fill="#e6ecd8"/><rect x="8" y="10" width="3" height="1" fill="#000"/><rect x="2" y="11" width="1" height="1" fill="#000"/><rect x="3" y="11" width="1" height="1" fill="#ffff00"/><rect x="4" y="11" width="1" height="1" fill="#ffff00"/><rect x="5" y="11" width="1" height="1" fill="#ffff00"/><rect x="6" y="11" width="1" height="1" fill="#ffff00"/><rect x="7" y="11" width="1" height="1" fill="#ffff00"/><rect x="8" y="11" width="1" height="1" fill="#ffff00"/><rect x="9" y="11" width="1" height="1" fill="#ffff00"/><rect x="10" y="11" width="1" height="1" fill="#000"/><rect x="3" y="12" width="1" height="1" fill="#000"/><rect x="4" y="12" width="1" height="1" fill="#ffff00"/><rect x="5" y="12" width="1" height="1" fill="#e6ecd8"/><rect x="6" y="12" width="1" height="1" fill="#ffff00"/><rect x="7" y="12" width="1" height="1" fill="#e6ecd8"/><rect x="8" y="12" width="2" height="1" fill="#000"/><rect x="3" y="13" width="1" height="1" fill="#000"/><rect x="4" y="13" width="1" height="1" fill="#ffff00"/><rect x="5" y="13" width="1" height="1" fill="#ffff00"/><rect x="6" y="13" width="1" height="1" fill="#ffff00"/><rect x="7" y="13" width="1" height="1" fill="#ffff00"/><rect x="8" y="13" width="1" height="1" fill="#000"/><rect x="3" y="14" width="6" height="1" fill="#000"/></svg>
<svg class="a" style="left:686px;top:63px;" width="5" height="17" viewBox="0 0 5 17" shape-rendering="crispEdges"><rect x="0" y="0" width="5" height="1" fill="#000"/><rect x="0" y="1" width="1" height="1" fill="#000"/><rect x="1" y="1" width="3" height="1" fill="#ff5a00"/><rect x="4" y="1" width="1" height="1" fill="#000"/><rect x="0" y="2" width="1" height="1" fill="#000"/><rect x="1" y="2" width="3" height="1" fill="#ff5a00"/><rect x="4" y="2" width="1" height="1" fill="#000"/><rect x="0" y="3" width="1" height="1" fill="#000"/><rect x="1" y="3" width="3" height="1" fill="#00c800"/><rect x="4" y="3" width="1" height="1" fill="#000"/><rect x="0" y="4" width="1" height="1" fill="#000"/><rect x="1" y="4" width="3" height="1" fill="#00c800"/><rect x="4" y="4" width="1" height="1" fill="#000"/><rect x="0" y="5" width="1" height="1" fill="#000"/><rect x="1" y="5" width="3" height="1" fill="#00c800"/><rect x="4" y="5" width="1" height="1" fill="#000"/><rect x="0" y="6" width="1" height="1" fill="#000"/><rect x="1" y="6" width="3" height="1" fill="#00c800"/><rect x="4" y="6" width="1" height="1" fill="#000"/><rect x="0" y="7" width="1" height="1" fill="#000"/><rect x="1" y="7" width="3" height="1" fill="#00c800"/><rect x="4" y="7" width="1" height="1" fill="#000"/><rect x="0" y="8" width="1" height="1" fill="#000"/><rect x="1" y="8" width="3" height="1" fill="#00c800"/><rect x="4" y="8" width="1" height="1" fill="#000"/><rect x="0" y="9" width="1" height="1" fill="#000"/><rect x="1" y="9" width="3" height="1" fill="#00c800"/><rect x="4" y="9" width="1" height="1" fill="#000"/><rect x="0" y="10" width="1" height="1" fill="#000"/><rect x="1" y="10" width="3" height="1" fill="#00c800"/><rect x="4" y="10" width="1" height="1" fill="#000"/><rect x="0" y="11" width="1" height="1" fill="#000"/><rect x="1" y="11" width="3" height="1" fill="#00c800"/><rect x="4" y="11" width="1" height="1" fill="#000"/><rect x="0" y="12" width="1" height="1" fill="#000"/><rect x="1" y="12" width="3" height="1" fill="#00c800"/><rect x="4" y="12" width="1" height="1" fill="#000"/><rect x="0" y="13" width="1" height="1" fill="#000"/><rect x="1" y="13" width="3" height="1" fill="#f0e000"/><rect x="4" y="13" width="1" height="1" fill="#000"/><rect x="1" y="14" width="1" height="1" fill="#000"/><rect x="2" y="14" width="1" height="1" fill="#f0e000"/><rect x="3" y="14" width="1" height="1" fill="#000"/><rect x="1" y="15" width="3" height="1" fill="#000"/><rect x="2" y="16" width="1" height="1" fill="#000"/></svg>
<svg class="a" style="left:703px;top:64px;" width="12" height="15" viewBox="0 0 12 15" shape-rendering="crispEdges"><rect x="3" y="0" width="7" height="1" fill="#000"/><rect x="2" y="1" width="2" height="1" fill="#000"/><rect x="4" y="1" width="6" height="1" fill="#8e0c0c"/><rect x="10" y="1" width="2" height="1" fill="#000"/><rect x="1" y="2" width="1" height="1" fill="#000"/><rect x="2" y="2" width="8" height="1" fill="#8e0c0c"/><rect x="10" y="2" width="2" height="1" fill="#000"/><rect x="0" y="3" width="1" height="1" fill="#000"/><rect x="1" y="3" width="5" height="1" fill="#8e0c0c"/><rect x="6" y="3" width="5" height="1" fill="#000"/><rect x="0" y="4" width="1" height="1" fill="#000"/><rect x="1" y="4" width="4" height="1" fill="#8e0c0c"/><rect x="5" y="4" width="1" height="1" fill="#000"/><rect x="6" y="4" width="1" height="1" fill="#ffff00"/><rect x="7" y="4" width="1" height="1" fill="#e6ecd8"/><rect x="8" y="4" width="1" height="1" fill="#ffff00"/><rect x="9" y="4" width="1" height="1" fill="#e6ecd8"/><rect x="10" y="4" width="1" height="1" fill="#000"/><rect x="0" y="5" width="1" height="1" fill="#000"/><rect x="1" y="5" width="3" height="1" fill="#8e0c0c"/><rect x="4" y="5" width="1" height="1" fill="#000"/><rect x="5" y="5" width="1" height="1" fill="#ffff00"/><rect x="6" y="5" width="1" height="1" fill="#ffff00"/><rect x="7" y="5" width="1" height="1" fill="#ffff00"/><rect x="8" y="5" width="1" height="1" fill="#ffff00"/><rect x="9" y="5" width="1" height="1" fill="#ffff00"/><rect x="10" y="5" width="1" height="1" fill="#000"/><rect x="0" y="6" width="1" height="1" fill="#000"/><rect x="1" y="6" width="2" height="1" fill="#8e0c0c"/><rect x="3" y="6" width="1" height="1" fill="#000"/><rect x="4" y="6" width="1" height="1" fill="#ffff00"/><rect x="5" y="6" width="1" height="1" fill="#e6ecd8"/><rect x="6" y="6" width="1" height="1" fill="#ffff00"/><rect x="7" y="6" width="1" height="1" fill="#e6ecd8"/><rect x="8" y="6" width="1" height="1" fill="#000"/><rect x="9" y="6" width="1" height="1" fill="#e6ecd8"/><rect x="10" y="6" width="1" height="1" fill="#000"/><rect x="0" y="7" width="1" height="1" fill="#000"/><rect x="1" y="7" width="1" height="1" fill="#8e0c0c"/><rect x="2" y="7" width="1" height="1" fill="#000"/><rect x="3" y="7" width="1" height="1" fill="#ffff00"/><rect x="4" y="7" width="1" height="1" fill="#ffff00"/><rect x="5" y="7" width="1" height="1" fill="#ffff00"/><rect x="6" y="7" width="1" height="1" fill="#ffff00"/><rect x="7" y="7" width="1" height="1" fill="#ffff00"/><rect x="8" y="7" width="1" height="1" fill="#ffff00"/><rect x="9" y="7" width="1" height="1" fill="#ffff00"/><rect x="10" y="7" width="1" height="1" fill="#ffff00"/><rect x="11" y="7" width="1" height="1" fill="#000"/><rect x="0" y="8" width="2" height="1" fill="#000"/><rect x="2" y="8" width="1" height="1" fill="#ffff00"/><rect x="3" y="8" width="1" height="1" fill="#e6ecd8"/><rect x="4" y="8" width="1" height="1" fill="#ffff00"/><rect x="5" y="8" width="1" height="1" fill="#e6ecd8"/><rect x="6" y="8" width="1" height="1" fill="#ffff00"/><rect x="7" y="8" width="1" height="1" fill="#e6ecd8"/><rect x="8" y="8" width="1" height="1" fill="#ffff00"/><rect x="9" y="8" width="1" height="1" fill="#e6ecd8"/><rect x="10" y="8" width="2" height="1" fill="#000"/><rect x="0" y="9" width="2" height="1" fill="#000"/><rect x="2" y="9" width="1" height="1" fill="#ffff00"/><rect x="3" y="9" width="1" height="1" fill="#ffff00"/><rect x="4" y="9" width="1" height="1" fill="#ffff00"/><rect x="5" y="9" width="1" height="1" fill="#ffff00"/><rect x="6" y="9" width="1" height="1" fill="#ffff00"/><rect x="7" y="9" width="1" height="1" fill="#ffff00"/><rect x="8" y="9" width="1" height="1" fill="#ffff00"/><rect x="9" y="9" width="1" height="1" fill="#ffff00"/><rect x="10" y="9" width="1" height="1" fill="#000"/><rect x="1" y="10" width="1" height="1" fill="#000"/><rect x="2" y="10" width="1" height="1" fill="#ffff00"/><rect x="3" y="10" width="1" height="1" fill="#e6ecd8"/><rect x="4" y="10" width="1" height="1" fill="#ffff00"/><rect x="5" y="10" width="1" height="1" fill="#e6ecd8"/><rect x="6" y="10" width="1" height="1" fill="#ffff00"/><rect x="7" y="10" width="1" height="1" fill="#e6ecd8"/><rect x="8" y="10" width="3" height="1" fill="#000"/><rect x="2" y="11" width="1" height="1" fill="#000"/><rect x="3" y="11" width="1" height="1" fill="#ffff00"/><rect x="4" y="11" width="1" height="1" fill="#ffff00"/><rect x="5" y="11" width="1" height="1" fill="#ffff00"/><rect x="6" y="11" width="1" height="1" fill="#ffff00"/><rect x="7" y="11" width="1" height="1" fill="#ffff00"/><rect x="8" y="11" width="1" height="1" fill="#ffff00"/><rect x="9" y="11" width="1" height="1" fill="#ffff00"/><rect x="10" y="11" width="1" height="1" fill="#000"/><rect x="3" y="12" width="1" height="1" fill="#000"/><rect x="4" y="12" width="1" height="1" fill="#ffff00"/><rect x="5" y="12" width="1" height="1" fill="#e6ecd8"/><rect x="6" y="12" width="1" height="1" fill="#ffff00"/><rect x="7" y="12" width="1" height="1" fill="#e6ecd8"/><rect x="8" y="12" width="2" height="1" fill="#000"/><rect x="3" y="13" width="1" height="1" fill="#000"/><rect x="4" y="13" width="1" height="1" fill="#ffff00"/><rect x="5" y="13" width="1" height="1" fill="#ffff00"/><rect x="6" y="13" width="1" height="1" fill="#ffff00"/><rect x="7" y="13" width="1" height="1" fill="#ffff00"/><rect x="8" y="13" width="1" height="1" fill="#000"/><rect x="3" y="14" width="6" height="1" fill="#000"/></svg>
<svg class="a" style="left:716px;top:75px;" width="8" height="6" viewBox="0 0 8 6" shape-rendering="crispEdges"><rect x="0" y="0" width="1" height="1" fill="#ff0000"/><rect x="2" y="0" width="2" height="1" fill="#ff0000"/><rect x="5" y="0" width="2" height="1" fill="#ff0000"/><rect x="0" y="1" width="2" height="1" fill="#ff0000"/><rect x="3" y="1" width="2" height="1" fill="#ff0000"/><rect x="6" y="1" width="1" height="1" fill="#ff0000"/><rect x="0" y="2" width="1" height="1" fill="#ff0000"/><rect x="3" y="2" width="1" height="1" fill="#ff0000"/><rect x="6" y="2" width="1" height="1" fill="#ff0000"/><rect x="0" y="3" width="1" height="1" fill="#ff0000"/><rect x="3" y="3" width="1" height="1" fill="#ff0000"/><rect x="6" y="3" width="1" height="1" fill="#ff0000"/><rect x="0" y="4" width="1" height="1" fill="#ff0000"/><rect x="3" y="4" width="1" height="1" fill="#ff0000"/><rect x="6" y="4" width="1" height="1" fill="#ff0000"/><rect x="0" y="5" width="1" height="1" fill="#ff0000"/><rect x="3" y="5" width="1" height="1" fill="#ff0000"/><rect x="6" y="5" width="1" height="1" fill="#ff0000"/></svg>
<svg class="a" style="left:734px;top:64px;" width="12" height="15" viewBox="0 0 12 15" shape-rendering="crispEdges"><rect x="3" y="0" width="7" height="1" fill="#000"/><rect x="2" y="1" width="2" height="1" fill="#000"/><rect x="4" y="1" width="6" height="1" fill="#8e0c0c"/><rect x="10" y="1" width="2" height="1" fill="#000"/><rect x="1" y="2" width="1" height="1" fill="#000"/><rect x="2" y="2" width="8" height="1" fill="#8e0c0c"/><rect x="10" y="2" width="2" height="1" fill="#000"/><rect x="0" y="3" width="1" height="1" fill="#000"/><rect x="1" y="3" width="5" height="1" fill="#8e0c0c"/><rect x="6" y="3" width="5" height="1" fill="#000"/><rect x="0" y="4" width="1" height="1" fill="#000"/><rect x="1" y="4" width="4" height="1" fill="#8e0c0c"/><rect x="5" y="4" width="1" height="1" fill="#000"/><rect x="6" y="4" width="1" height="1" fill="#ffff00"/><rect x="7" y="4" width="1" height="1" fill="#e6ecd8"/><rect x="8" y="4" width="1" height="1" fill="#ffff00"/><rect x="9" y="4" width="1" height="1" fill="#e6ecd8"/><rect x="10" y="4" width="1" height="1" fill="#000"/><rect x="0" y="5" width="1" height="1" fill="#000"/><rect x="1" y="5" width="3" height="1" fill="#8e0c0c"/><rect x="4" y="5" width="1" height="1" fill="#000"/><rect x="5" y="5" width="1" height="1" fill="#ffff00"/><rect x="6" y="5" width="1" height="1" fill="#ffff00"/><rect x="7" y="5" width="1" height="1" fill="#ffff00"/><rect x="8" y="5" width="1" height="1" fill="#ffff00"/><rect x="9" y="5" width="1" height="1" fill="#ffff00"/><rect x="10" y="5" width="1" height="1" fill="#000"/><rect x="0" y="6" width="1" height="1" fill="#000"/><rect x="1" y="6" width="2" height="1" fill="#8e0c0c"/><rect x="3" y="6" width="1" height="1" fill="#000"/><rect x="4" y="6" width="1" height="1" fill="#ffff00"/><rect x="5" y="6" width="1" height="1" fill="#e6ecd8"/><rect x="6" y="6" width="1" height="1" fill="#ffff00"/><rect x="7" y="6" width="1" height="1" fill="#e6ecd8"/><rect x="8" y="6" width="1" height="1" fill="#000"/><rect x="9" y="6" width="1" height="1" fill="#e6ecd8"/><rect x="10" y="6" width="1" height="1" fill="#000"/><rect x="0" y="7" width="1" height="1" fill="#000"/><rect x="1" y="7" width="1" height="1" fill="#8e0c0c"/><rect x="2" y="7" width="1" height="1" fill="#000"/><rect x="3" y="7" width="1" height="1" fill="#ffff00"/><rect x="4" y="7" width="1" height="1" fill="#ffff00"/><rect x="5" y="7" width="1" height="1" fill="#ffff00"/><rect x="6" y="7" width="1" height="1" fill="#ffff00"/><rect x="7" y="7" width="1" height="1" fill="#ffff00"/><rect x="8" y="7" width="1" height="1" fill="#ffff00"/><rect x="9" y="7" width="1" height="1" fill="#ffff00"/><rect x="10" y="7" width="1" height="1" fill="#ffff00"/><rect x="11" y="7" width="1" height="1" fill="#000"/><rect x="0" y="8" width="2" height="1" fill="#000"/><rect x="2" y="8" width="1" height="1" fill="#ffff00"/><rect x="3" y="8" width="1" height="1" fill="#e6ecd8"/><rect x="4" y="8" width="1" height="1" fill="#ffff00"/><rect x="5" y="8" width="1" height="1" fill="#e6ecd8"/><rect x="6" y="8" width="1" height="1" fill="#ffff00"/><rect x="7" y="8" width="1" height="1" fill="#e6ecd8"/><rect x="8" y="8" width="1" height="1" fill="#ffff00"/><rect x="9" y="8" width="1" height="1" fill="#e6ecd8"/><rect x="10" y="8" width="2" height="1" fill="#000"/><rect x="0" y="9" width="2" height="1" fill="#000"/><rect x="2" y="9" width="1" height="1" fill="#ffff00"/><rect x="3" y="9" width="1" height="1" fill="#ffff00"/><rect x="4" y="9" width="1" height="1" fill="#ffff00"/><rect x="5" y="9" width="1" height="1" fill="#ffff00"/><rect x="6" y="9" width="1" height="1" fill="#ffff00"/><rect x="7" y="9" width="1" height="1" fill="#ffff00"/><rect x="8" y="9" width="1" height="1" fill="#ffff00"/><rect x="9" y="9" width="1" height="1" fill="#ffff00"/><rect x="10" y="9" width="1" height="1" fill="#000"/><rect x="1" y="10" width="1" height="1" fill="#000"/><rect x="2" y="10" width="1" height="1" fill="#ffff00"/><rect x="3" y="10" width="1" height="1" fill="#e6ecd8"/><rect x="4" y="10" width="1" height="1" fill="#ffff00"/><rect x="5" y="10" width="1" height="1" fill="#e6ecd8"/><rect x="6" y="10" width="1" height="1" fill="#ffff00"/><rect x="7" y="10" width="1" height="1" fill="#e6ecd8"/><rect x="8" y="10" width="3" height="1" fill="#000"/><rect x="2" y="11" width="1" height="1" fill="#000"/><rect x="3" y="11" width="1" height="1" fill="#ffff00"/><rect x="4" y="11" width="1" height="1" fill="#ffff00"/><rect x="5" y="11" width="1" height="1" fill="#ffff00"/><rect x="6" y="11" width="1" height="1" fill="#ffff00"/><rect x="7" y="11" width="1" height="1" fill="#ffff00"/><rect x="8" y="11" width="1" height="1" fill="#ffff00"/><rect x="9" y="11" width="1" height="1" fill="#ffff00"/><rect x="10" y="11" width="1" height="1" fill="#000"/><rect x="3" y="12" width="1" height="1" fill="#000"/><rect x="4" y="12" width="1" height="1" fill="#ffff00"/><rect x="5" y="12" width="1" height="1" fill="#e6ecd8"/><rect x="6" y="12" width="1" height="1" fill="#ffff00"/><rect x="7" y="12" width="1" height="1" fill="#e6ecd8"/><rect x="8" y="12" width="2" height="1" fill="#000"/><rect x="3" y="13" width="1" height="1" fill="#000"/><rect x="4" y="13" width="1" height="1" fill="#ffff00"/><rect x="5" y="13" width="1" height="1" fill="#ffff00"/><rect x="6" y="13" width="1" height="1" fill="#ffff00"/><rect x="7" y="13" width="1" height="1" fill="#ffff00"/><rect x="8" y="13" width="1" height="1" fill="#000"/><rect x="3" y="14" width="6" height="1" fill="#000"/></svg>
<svg class="a" style="left:747px;top:73px;" width="6" height="9" viewBox="0 0 6 9" shape-rendering="crispEdges"><rect x="0" y="0" width="1" height="1" fill="#ff0000"/><rect x="0" y="1" width="1" height="1" fill="#ff0000"/><rect x="5" y="1" width="1" height="1" fill="#ff0000"/><rect x="0" y="2" width="1" height="1" fill="#ff0000"/><rect x="4" y="2" width="1" height="1" fill="#ff0000"/><rect x="0" y="3" width="1" height="1" fill="#ff0000"/><rect x="3" y="3" width="1" height="1" fill="#ff0000"/><rect x="0" y="4" width="1" height="1" fill="#ff0000"/><rect x="2" y="4" width="1" height="1" fill="#ff0000"/><rect x="0" y="5" width="3" height="1" fill="#ff0000"/><rect x="0" y="6" width="1" height="1" fill="#ff0000"/><rect x="3" y="6" width="1" height="1" fill="#ff0000"/><rect x="0" y="7" width="1" height="1" fill="#ff0000"/><rect x="4" y="7" width="1" height="1" fill="#ff0000"/><rect x="0" y="8" width="1" height="1" fill="#ff0000"/><rect x="5" y="8" width="1" height="1" fill="#ff0000"/></svg>
<div class="a" style="left:762px;top:58px;width:1px;height:26px;background:#a0a0a0;"></div>
<svg class="a" style="left:778px;top:61px;" width="20" height="20" viewBox="0 0 20 20"><path d="M2 2.6H17.3M2 17.2H17.3" fill="none" stroke="#1e1e1e" stroke-width="2"/><path d="M3.2 3.2L11.6 9.7L3.2 16.6" fill="none" stroke="#1e1e1e" stroke-width="2.8" stroke-linejoin="miter"/></svg>
<div class="a" style="left:805px;top:58px;width:1px;height:26px;background:#a0a0a0;"></div>
<svg class="a" style="left:830px;top:66px;" width="14" height="12" viewBox="0 0 14 12" shape-rendering="crispEdges"><rect x="0" y="0" width="13" height="1" fill="#9c8ab2"/><rect x="0" y="1" width="13" height="1" fill="#9c8ab2"/><rect x="0" y="2" width="3" height="1" fill="#9c8ab2"/><rect x="3" y="2" width="1" height="1" fill="#ffffff"/><rect x="4" y="2" width="1" height="1" fill="#9c8ab2"/><rect x="5" y="2" width="1" height="1" fill="#ffffff"/><rect x="6" y="2" width="1" height="1" fill="#9c8ab2"/><rect x="7" y="2" width="1" height="1" fill="#ffffff"/><rect x="8" y="2" width="1" height="1" fill="#9c8ab2"/><rect x="9" y="2" width="1" height="1" fill="#ffffff"/><rect x="10" y="2" width="3" height="1" fill="#9c8ab2"/><rect x="0" y="3" width="4" height="1" fill="#9c8ab2"/><rect x="4" y="3" width="1" height="1" fill="#ffffff"/><rect x="5" y="3" width="1" height="1" fill="#9c8ab2"/><rect x="6" y="3" width="1" height="1" fill="#ffffff"/><rect x="7" y="3" width="1" height="1" fill="#9c8ab2"/><rect x="8" y="3" width="1" height="1" fill="#ffffff"/><rect x="9" y="3" width="4" height="1" fill="#9c8ab2"/><rect x="0" y="4" width="1" height="1" fill="#9c8ab2"/><rect x="1" y="4" width="1" height="1" fill="#ffffff"/><rect x="2" y="4" width="3" height="1" fill="#9c8ab2"/><rect x="5" y="4" width="1" height="1" fill="#ffffff"/><rect x="6" y="4" width="1" height="1" fill="#9c8ab2"/><rect x="7" y="4" width="1" height="1" fill="#ffffff"/><rect x="8" y="4" width="3" height="1" fill="#9c8ab2"/><rect x="11" y="4" width="1" height="1" fill="#ffffff"/><rect x="12" y="4" width="1" height="1" fill="#9c8ab2"/><rect x="0" y="5" width="2" height="1" fill="#9c8ab2"/><rect x="2" y="5" width="1" height="1" fill="#ffffff"/><rect x="3" y="5" width="3" height="1" fill="#9c8ab2"/><rect x="6" y="5" width="1" height="1" fill="#ffffff"/><rect x="7" y="5" width="3" height="1" fill="#9c8ab2"/><rect x="10" y="5" width="1" height="1" fill="#ffffff"/><rect x="11" y="5" width="2" height="1" fill="#9c8ab2"/><rect x="0" y="6" width="1" height="1" fill="#9c8ab2"/><rect x="1" y="6" width="1" height="1" fill="#ffffff"/><rect x="2" y="6" width="9" height="1" fill="#9c8ab2"/><rect x="11" y="6" width="1" height="1" fill="#ffffff"/><rect x="12" y="6" width="1" height="1" fill="#9c8ab2"/><rect x="0" y="7" width="4" height="1" fill="#9c8ab2"/><rect x="4" y="7" width="1" height="1" fill="#ffffff"/><rect x="5" y="7" width="3" height="1" fill="#9c8ab2"/><rect x="8" y="7" width="1" height="1" fill="#ffffff"/><rect x="9" y="7" width="4" height="1" fill="#9c8ab2"/><rect x="0" y="8" width="3" height="1" fill="#9c8ab2"/><rect x="3" y="8" width="1" height="1" fill="#ffffff"/><rect x="4" y="8" width="1" height="1" fill="#9c8ab2"/><rect x="5" y="8" width="1" height="1" fill="#ffffff"/><rect x="6" y="8" width="1" height="1" fill="#9c8ab2"/><rect x="7" y="8" width="1" height="1" fill="#ffffff"/><rect x="8" y="8" width="1" height="1" fill="#9c8ab2"/><rect x="9" y="8" width="1" height="1" fill="#ffffff"/><rect x="10" y="8" width="3" height="1" fill="#9c8ab2"/><rect x="0" y="9" width="2" height="1" fill="#9c8ab2"/><rect x="2" y="9" width="1" height="1" fill="#ffffff"/><rect x="3" y="9" width="1" height="1" fill="#9c8ab2"/><rect x="4" y="9" width="1" height="1" fill="#ffffff"/><rect x="5" y="9" width="3" height="1" fill="#9c8ab2"/><rect x="8" y="9" width="1" height="1" fill="#ffffff"/><rect x="9" y="9" width="1" height="1" fill="#9c8ab2"/><rect x="10" y="9" width="1" height="1" fill="#ffffff"/><rect x="11" y="9" width="2" height="1" fill="#9c8ab2"/><rect x="0" y="10" width="14" height="1" fill="#9c8ab2"/><rect x="1" y="11" width="13" height="1" fill="#9c8ab2"/></svg>
<svg class="a" style="left:856px;top:69px;" width="7" height="4" viewBox="0 0 7 4" shape-rendering="crispEdges"><rect x="0" y="0" width="7" height="1" fill="#6a6a6a"/><rect x="1" y="1" width="5" height="1" fill="#6a6a6a"/><rect x="2" y="2" width="3" height="1" fill="#6a6a6a"/><rect x="3" y="3" width="1" height="1" fill="#6a6a6a"/></svg>
<div class="a" style="left:869px;top:58px;width:1px;height:26px;background:#a0a0a0;"></div>
<svg class="a" style="left:880px;top:61px;" width="20" height="20" viewBox="0 0 20 20" shape-rendering="crispEdges"><rect x="0" y="0" width="20" height="1" fill="#000"/><rect x="0" y="1" width="1" height="1" fill="#000"/><rect x="1" y="1" width="18" height="1" fill="#fff"/><rect x="19" y="1" width="1" height="1" fill="#000"/><rect x="0" y="2" width="1" height="1" fill="#000"/><rect x="1" y="2" width="18" height="1" fill="#fff"/><rect x="19" y="2" width="1" height="1" fill="#000"/><rect x="0" y="3" width="1" height="1" fill="#000"/><rect x="1" y="3" width="2" height="1" fill="#fff"/><rect x="3" y="3" width="3" height="1" fill="#000"/><rect x="6" y="3" width="1" height="1" fill="#fff"/><rect x="7" y="3" width="5" height="1" fill="#000"/><rect x="12" y="3" width="1" height="1" fill="#fff"/><rect x="13" y="3" width="4" height="1" fill="#000"/><rect x="17" y="3" width="2" height="1" fill="#fff"/><rect x="19" y="3" width="1" height="1" fill="#000"/><rect x="0" y="4" width="1" height="1" fill="#000"/><rect x="1" y="4" width="2" height="1" fill="#fff"/><rect x="3" y="4" width="1" height="1" fill="#000"/><rect x="4" y="4" width="2" height="1" fill="#fff"/><rect x="6" y="4" width="1" height="1" fill="#000"/><rect x="7" y="4" width="3" height="1" fill="#fff"/><rect x="10" y="4" width="1" height="1" fill="#000"/><rect x="11" y="4" width="3" height="1" fill="#fff"/><rect x="14" y="4" width="1" height="1" fill="#000"/><rect x="15" y="4" width="4" height="1" fill="#fff"/><rect x="19" y="4" width="1" height="1" fill="#000"/><rect x="0" y="5" width="1" height="1" fill="#000"/><rect x="1" y="5" width="2" height="1" fill="#fff"/><rect x="3" y="5" width="1" height="1" fill="#000"/><rect x="4" y="5" width="2" height="1" fill="#fff"/><rect x="6" y="5" width="1" height="1" fill="#000"/><rect x="7" y="5" width="3" height="1" fill="#fff"/><rect x="10" y="5" width="1" height="1" fill="#000"/><rect x="11" y="5" width="3" height="1" fill="#fff"/><rect x="14" y="5" width="1" height="1" fill="#000"/><rect x="15" y="5" width="4" height="1" fill="#fff"/><rect x="19" y="5" width="1" height="1" fill="#000"/><rect x="0" y="6" width="1" height="1" fill="#000"/><rect x="1" y="6" width="2" height="1" fill="#fff"/><rect x="3" y="6" width="3" height="1" fill="#000"/><rect x="6" y="6" width="4" height="1" fill="#fff"/><rect x="10" y="6" width="1" height="1" fill="#000"/><rect x="11" y="6" width="3" height="1" fill="#fff"/><rect x="14" y="6" width="3" height="1" fill="#000"/><rect x="17" y="6" width="2" height="1" fill="#fff"/><rect x="19" y="6" width="1" height="1" fill="#000"/><rect x="0" y="7" width="1" height="1" fill="#000"/><rect x="1" y="7" width="2" height="1" fill="#fff"/><rect x="3" y="7" width="1" height="1" fill="#000"/><rect x="4" y="7" width="2" height="1" fill="#fff"/><rect x="6" y="7" width="1" height="1" fill="#000"/><rect x="7" y="7" width="3" height="1" fill="#fff"/><rect x="10" y="7" width="1" height="1" fill="#000"/><rect x="11" y="7" width="3" height="1" fill="#fff"/><rect x="14" y="7" width="1" height="1" fill="#000"/><rect x="15" y="7" width="4" height="1" fill="#fff"/><rect x="19" y="7" width="1" height="1" fill="#000"/><rect x="0" y="8" width="1" height="1" fill="#000"/><rect x="1" y="8" width="2" height="1" fill="#fff"/><rect x="3" y="8" width="1" height="1" fill="#000"/><rect x="4" y="8" width="2" height="1" fill="#fff"/><rect x="6" y="8" width="1" height="1" fill="#000"/><rect x="7" y="8" width="3" height="1" fill="#fff"/><rect x="10" y="8" width="1" height="1" fill="#000"/><rect x="11" y="8" width="3" height="1" fill="#fff"/><rect x="14" y="8" width="1" height="1" fill="#000"/><rect x="15" y="8" width="4" height="1" fill="#fff"/><rect x="19" y="8" width="1" height="1" fill="#000"/><rect x="0" y="9" width="1" height="1" fill="#000"/><rect x="1" y="9" width="18" height="1" fill="#fff"/><rect x="19" y="9" width="1" height="1" fill="#000"/><rect x="0" y="10" width="1" height="1" fill="#000"/><rect x="1" y="10" width="1" height="1" fill="#fff"/><rect x="2" y="10" width="1" height="1" fill="#000"/><rect x="3" y="10" width="1" height="1" fill="#0000ff"/><rect x="4" y="10" width="1" height="1" fill="#000"/><rect x="5" y="10" width="1" height="1" fill="#0000ff"/><rect x="6" y="10" width="1" height="1" fill="#000"/><rect x="7" y="10" width="1" height="1" fill="#0000ff"/><rect x="8" y="10" width="1" height="1" fill="#000"/><rect x="9" y="10" width="1" height="1" fill="#0000ff"/><rect x="10" y="10" width="1" height="1" fill="#000"/><rect x="11" y="10" width="1" height="1" fill="#fff"/><rect x="12" y="10" width="1" height="1" fill="#000"/><rect x="13" y="10" width="1" height="1" fill="#0000ff"/><rect x="14" y="10" width="1" height="1" fill="#000"/><rect x="15" y="10" width="1" height="1" fill="#0000ff"/><rect x="16" y="10" width="1" height="1" fill="#000"/><rect x="17" y="10" width="2" height="1" fill="#fff"/><rect x="19" y="10" width="1" height="1" fill="#000"/><rect x="0" y="11" width="1" height="1" fill="#000"/><rect x="1" y="11" width="18" height="1" fill="#fff"/><rect x="19" y="11" width="1" height="1" fill="#000"/><rect x="0" y="12" width="1" height="1" fill="#000"/><rect x="1" y="12" width="1" height="1" fill="#fff"/><rect x="2" y="12" width="1" height="1" fill="#000"/><rect x="3" y="12" width="1" height="1" fill="#ff0000"/><rect x="4" y="12" width="1" height="1" fill="#000"/><rect x="5" y="12" width="1" height="1" fill="#ff0000"/><rect x="6" y="12" width="1" height="1" fill="#000"/><rect x="7" y="12" width="1" height="1" fill="#ff0000"/><rect x="8" y="12" width="1" height="1" fill="#000"/><rect x="9" y="12" width="1" height="1" fill="#ff0000"/><rect x="10" y="12" width="1" height="1" fill="#000"/><rect x="11" y="12" width="1" height="1" fill="#ff0000"/><rect x="12" y="12" width="1" height="1" fill="#000"/><rect x="13" y="12" width="1" height="1" fill="#ff0000"/><rect x="14" y="12" width="1" height="1" fill="#000"/><rect x="15" y="12" width="1" height="1" fill="#ff0000"/><rect x="16" y="12" width="1" height="1" fill="#000"/><rect x="17" y="12" width="1" height="1" fill="#ff0000"/><rect x="18" y="12" width="1" height="1" fill="#fff"/><rect x="19" y="12" width="1" height="1" fill="#000"/><rect x="0" y="13" width="1" height="1" fill="#000"/><rect x="1" y="13" width="18" height="1" fill="#fff"/><rect x="19" y="13" width="1" height="1" fill="#000"/><rect x="0" y="14" width="1" height="1" fill="#000"/><rect x="1" y="14" width="1" height="1" fill="#fff"/><rect x="2" y="14" width="1" height="1" fill="#000"/><rect x="3" y="14" width="1" height="1" fill="#ffff00"/><rect x="4" y="14" width="1" height="1" fill="#000"/><rect x="5" y="14" width="1" height="1" fill="#ffff00"/><rect x="6" y="14" width="1" height="1" fill="#000"/><rect x="7" y="14" width="1" height="1" fill="#ffff00"/><rect x="8" y="14" width="1" height="1" fill="#000"/><rect x="9" y="14" width="1" height="1" fill="#ffff00"/><rect x="10" y="14" width="1" height="1" fill="#000"/><rect x="11" y="14" width="1" height="1" fill="#ffff00"/><rect x="12" y="14" width="1" height="1" fill="#000"/><rect x="13" y="14" width="1" height="1" fill="#ffff00"/><rect x="14" y="14" width="1" height="1" fill="#000"/><rect x="15" y="14" width="1" height="1" fill="#ffff00"/><rect x="16" y="14" width="1" height="1" fill="#000"/><rect x="17" y="14" width="2" height="1" fill="#fff"/><rect x="19" y="14" width="1" height="1" fill="#000"/><rect x="0" y="15" width="1" height="1" fill="#000"/><rect x="1" y="15" width="18" height="1" fill="#fff"/><rect x="19" y="15" width="1" height="1" fill="#000"/><rect x="0" y="16" width="1" height="1" fill="#000"/><rect x="1" y="16" width="1" height="1" fill="#fff"/><rect x="2" y="16" width="16" height="1" fill="#8a8a8a"/><rect x="18" y="16" width="1" height="1" fill="#fff"/><rect x="19" y="16" width="1" height="1" fill="#000"/><rect x="0" y="17" width="1" height="1" fill="#000"/><rect x="1" y="17" width="18" height="1" fill="#fff"/><rect x="19" y="17" width="1" height="1" fill="#000"/><rect x="0" y="18" width="1" height="1" fill="#000"/><rect x="1" y="18" width="18" height="1" fill="#fff"/><rect x="19" y="18" width="1" height="1" fill="#000"/><rect x="0" y="19" width="20" height="1" fill="#000"/></svg>
<div class="a" style="left:908px;top:58px;width:1px;height:26px;background:#a0a0a0;"></div>
<svg class="a" style="left:927px;top:63px;" width="16" height="16" viewBox="0 0 16 16" shape-rendering="crispEdges"><rect x="0" y="0" width="1" height="1" fill="#0000ff"/><rect x="1" y="0" width="1" height="1" fill="#000000"/><rect x="2" y="0" width="1" height="1" fill="#0000ff"/><rect x="3" y="0" width="1" height="1" fill="#000000"/><rect x="4" y="0" width="1" height="1" fill="#0000ff"/><rect x="5" y="0" width="1" height="1" fill="#000000"/><rect x="6" y="0" width="1" height="1" fill="#0000ff"/><rect x="7" y="0" width="1" height="1" fill="#000000"/><rect x="8" y="0" width="1" height="1" fill="#0000ff"/><rect x="9" y="0" width="1" height="1" fill="#000000"/><rect x="10" y="0" width="1" height="1" fill="#0000ff"/><rect x="11" y="0" width="1" height="1" fill="#000000"/><rect x="12" y="0" width="1" height="1" fill="#0000ff"/><rect x="13" y="0" width="1" height="1" fill="#000000"/><rect x="14" y="0" width="1" height="1" fill="#0000ff"/><rect x="15" y="0" width="1" height="1" fill="#000000"/><rect x="0" y="1" width="1" height="1" fill="#000000"/><rect x="1" y="1" width="1" height="1" fill="#0000ff"/><rect x="2" y="1" width="1" height="1" fill="#000000"/><rect x="3" y="1" width="1" height="1" fill="#0000ff"/><rect x="4" y="1" width="1" height="1" fill="#000000"/><rect x="5" y="1" width="1" height="1" fill="#0000ff"/><rect x="6" y="1" width="1" height="1" fill="#000000"/><rect x="7" y="1" width="1" height="1" fill="#0000ff"/><rect x="8" y="1" width="1" height="1" fill="#000000"/><rect x="9" y="1" width="1" height="1" fill="#0000ff"/><rect x="10" y="1" width="1" height="1" fill="#000000"/><rect x="11" y="1" width="1" height="1" fill="#0000ff"/><rect x="12" y="1" width="1" height="1" fill="#000000"/><rect x="13" y="1" width="1" height="1" fill="#0000ff"/><rect x="14" y="1" width="1" height="1" fill="#000000"/><rect x="15" y="1" width="1" height="1" fill="#0000ff"/><rect x="0" y="2" width="1" height="1" fill="#0000ff"/><rect x="1" y="2" width="1" height="1" fill="#000000"/><rect x="2" y="2" width="12" height="1" fill="#ffffff"/><rect x="14" y="2" width="1" height="1" fill="#0000ff"/><rect x="15" y="2" width="1" height="1" fill="#000000"/><rect x="0" y="3" width="1" height="1" fill="#000000"/><rect x="1" y="3" width="1" height="1" fill="#0000ff"/><rect x="2" y="3" width="12" height="1" fill="#ffffff"/><rect x="14" y="3" width="1" height="1" fill="#000000"/><rect x="15" y="3" width="1" height="1" fill="#0000ff"/><rect x="0" y="4" width="1" height="1" fill="#0000ff"/><rect x="1" y="4" width="1" height="1" fill="#000000"/><rect x="2" y="4" width="1" height="1" fill="#0000ff"/><rect x="3" y="4" width="1" height="1" fill="#000000"/><rect x="4" y="4" width="1" height="1" fill="#0000ff"/><rect x="5" y="4" width="1" height="1" fill="#000000"/><rect x="6" y="4" width="1" height="1" fill="#0000ff"/><rect x="7" y="4" width="1" height="1" fill="#000000"/><rect x="8" y="4" width="1" height="1" fill="#0000ff"/><rect x="9" y="4" width="1" height="1" fill="#000000"/><rect x="10" y="4" width="1" height="1" fill="#0000ff"/><rect x="11" y="4" width="1" height="1" fill="#000000"/><rect x="12" y="4" width="1" height="1" fill="#0000ff"/><rect x="13" y="4" width="1" height="1" fill="#000000"/><rect x="14" y="4" width="1" height="1" fill="#0000ff"/><rect x="15" y="4" width="1" height="1" fill="#000000"/><rect x="0" y="5" width="1" height="1" fill="#000000"/><rect x="1" y="5" width="1" height="1" fill="#0000ff"/><rect x="2" y="5" width="1" height="1" fill="#000000"/><rect x="3" y="5" width="1" height="1" fill="#0000ff"/><rect x="4" y="5" width="1" height="1" fill="#000000"/><rect x="5" y="5" width="1" height="1" fill="#0000ff"/><rect x="6" y="5" width="1" height="1" fill="#000000"/><rect x="7" y="5" width="1" height="1" fill="#0000ff"/><rect x="8" y="5" width="1" height="1" fill="#000000"/><rect x="9" y="5" width="1" height="1" fill="#ffffff"/><rect x="10" y="5" width="1" height="1" fill="#000000"/><rect x="11" y="5" width="1" height="1" fill="#0000ff"/><rect x="12" y="5" width="1" height="1" fill="#000000"/><rect x="13" y="5" width="1" height="1" fill="#0000ff"/><rect x="14" y="5" width="1" height="1" fill="#000000"/><rect x="15" y="5" width="1" height="1" fill="#0000ff"/><rect x="0" y="6" width="1" height="1" fill="#0000ff"/><rect x="1" y="6" width="1" height="1" fill="#000000"/><rect x="2" y="6" width="1" height="1" fill="#ffffff"/><rect x="3" y="6" width="1" height="1" fill="#000000"/><rect x="4" y="6" width="1" height="1" fill="#0000ff"/><rect x="5" y="6" width="1" height="1" fill="#ffffff"/><rect x="6" y="6" width="1" height="1" fill="#0000ff"/><rect x="7" y="6" width="1" height="1" fill="#000000"/><rect x="8" y="6" width="1" height="1" fill="#0000ff"/><rect x="9" y="6" width="1" height="1" fill="#ffffff"/><rect x="10" y="6" width="1" height="1" fill="#0000ff"/><rect x="11" y="6" width="1" height="1" fill="#000000"/><rect x="12" y="6" width="1" height="1" fill="#0000ff"/><rect x="13" y="6" width="1" height="1" fill="#ffffff"/><rect x="14" y="6" width="1" height="1" fill="#0000ff"/><rect x="15" y="6" width="1" height="1" fill="#000000"/><rect x="0" y="7" width="1" height="1" fill="#000000"/><rect x="1" y="7" width="1" height="1" fill="#0000ff"/><rect x="2" y="7" width="1" height="1" fill="#ffffff"/><rect x="3" y="7" width="1" height="1" fill="#0000ff"/><rect x="4" y="7" width="1" height="1" fill="#000000"/><rect x="5" y="7" width="1" height="1" fill="#ffffff"/><rect x="6" y="7" width="1" height="1" fill="#000000"/><rect x="7" y="7" width="1" height="1" fill="#0000ff"/><rect x="8" y="7" width="1" height="1" fill="#000000"/><rect x="9" y="7" width="1" height="1" fill="#ffffff"/><rect x="10" y="7" width="1" height="1" fill="#000000"/><rect x="11" y="7" width="1" height="1" fill="#0000ff"/><rect x="12" y="7" width="2" height="1" fill="#ffffff"/><rect x="14" y="7" width="1" height="1" fill="#000000"/><rect x="15" y="7" width="1" height="1" fill="#0000ff"/><rect x="0" y="8" width="1" height="1" fill="#0000ff"/><rect x="1" y="8" width="1" height="1" fill="#000000"/><rect x="2" y="8" width="1" height="1" fill="#ffffff"/><rect x="3" y="8" width="1" height="1" fill="#000000"/><rect x="4" y="8" width="1" height="1" fill="#0000ff"/><rect x="5" y="8" width="1" height="1" fill="#ffffff"/><rect x="6" y="8" width="1" height="1" fill="#0000ff"/><rect x="7" y="8" width="1" height="1" fill="#000000"/><rect x="8" y="8" width="1" height="1" fill="#0000ff"/><rect x="9" y="8" width="1" height="1" fill="#000000"/><rect x="10" y="8" width="1" height="1" fill="#0000ff"/><rect x="11" y="8" width="1" height="1" fill="#000000"/><rect x="12" y="8" width="2" height="1" fill="#ffffff"/><rect x="14" y="8" width="1" height="1" fill="#0000ff"/><rect x="15" y="8" width="1" height="1" fill="#000000"/><rect x="0" y="9" width="1" height="1" fill="#000000"/><rect x="1" y="9" width="1" height="1" fill="#0000ff"/><rect x="2" y="9" width="1" height="1" fill="#ffffff"/><rect x="3" y="9" width="1" height="1" fill="#0000ff"/><rect x="4" y="9" width="1" height="1" fill="#000000"/><rect x="5" y="9" width="1" height="1" fill="#0000ff"/><rect x="6" y="9" width="1" height="1" fill="#000000"/><rect x="7" y="9" width="1" height="1" fill="#0000ff"/><rect x="8" y="9" width="1" height="1" fill="#000000"/><rect x="9" y="9" width="1" height="1" fill="#0000ff"/><rect x="10" y="9" width="1" height="1" fill="#000000"/><rect x="11" y="9" width="3" height="1" fill="#ffffff"/><rect x="14" y="9" width="1" height="1" fill="#000000"/><rect x="15" y="9" width="1" height="1" fill="#0000ff"/><rect x="0" y="10" width="1" height="1" fill="#0000ff"/><rect x="1" y="10" width="1" height="1" fill="#000000"/><rect x="2" y="10" width="1" height="1" fill="#ffffff"/><rect x="3" y="10" width="1" height="1" fill="#000000"/><rect x="4" y="10" width="1" height="1" fill="#0000ff"/><rect x="5" y="10" width="1" height="1" fill="#000000"/><rect x="6" y="10" width="1" height="1" fill="#ffffff"/><rect x="7" y="10" width="1" height="1" fill="#000000"/><rect x="8" y="10" width="1" height="1" fill="#0000ff"/><rect x="9" y="10" width="1" height="1" fill="#000000"/><rect x="10" y="10" width="1" height="1" fill="#0000ff"/><rect x="11" y="10" width="3" height="1" fill="#ffffff"/><rect x="14" y="10" width="1" height="1" fill="#0000ff"/><rect x="15" y="10" width="1" height="1" fill="#000000"/><rect x="0" y="11" width="1" height="1" fill="#000000"/><rect x="1" y="11" width="1" height="1" fill="#0000ff"/><rect x="2" y="11" width="1" height="1" fill="#ffffff"/><rect x="3" y="11" width="1" height="1" fill="#0000ff"/><rect x="4" y="11" width="1" height="1" fill="#000000"/><rect x="5" y="11" width="1" height="1" fill="#0000ff"/><rect x="6" y="11" width="1" height="1" fill="#ffffff"/><rect x="7" y="11" width="1" height="1" fill="#0000ff"/><rect x="8" y="11" width="1" height="1" fill="#000000"/><rect x="9" y="11" width="1" height="1" fill="#0000ff"/><rect x="10" y="11" width="4" height="1" fill="#ffffff"/><rect x="14" y="11" width="1" height="1" fill="#000000"/><rect x="15" y="11" width="1" height="1" fill="#0000ff"/><rect x="0" y="12" width="1" height="1" fill="#0000ff"/><rect x="1" y="12" width="1" height="1" fill="#000000"/><rect x="2" y="12" width="1" height="1" fill="#ffffff"/><rect x="3" y="12" width="1" height="1" fill="#000000"/><rect x="4" y="12" width="1" height="1" fill="#0000ff"/><rect x="5" y="12" width="1" height="1" fill="#000000"/><rect x="6" y="12" width="1" height="1" fill="#ffffff"/><rect x="7" y="12" width="1" height="1" fill="#000000"/><rect x="8" y="12" width="1" height="1" fill="#0000ff"/><rect x="9" y="12" width="1" height="1" fill="#000000"/><rect x="10" y="12" width="4" height="1" fill="#ffffff"/><rect x="14" y="12" width="1" height="1" fill="#0000ff"/><rect x="15" y="12" width="1" height="1" fill="#000000"/><rect x="0" y="13" width="1" height="1" fill="#000000"/><rect x="1" y="13" width="1" height="1" fill="#0000ff"/><rect x="2" y="13" width="12" height="1" fill="#ffffff"/><rect x="14" y="13" width="1" height="1" fill="#000000"/><rect x="15" y="13" width="1" height="1" fill="#0000ff"/><rect x="0" y="14" width="1" height="1" fill="#0000ff"/><rect x="1" y="14" width="1" height="1" fill="#000000"/><rect x="2" y="14" width="1" height="1" fill="#0000ff"/><rect x="3" y="14" width="1" height="1" fill="#000000"/><rect x="4" y="14" width="1" height="1" fill="#0000ff"/><rect x="5" y="14" width="1" height="1" fill="#000000"/><rect x="6" y="14" width="1" height="1" fill="#0000ff"/><rect x="7" y="14" width="1" height="1" fill="#000000"/><rect x="8" y="14" width="1" height="1" fill="#0000ff"/><rect x="9" y="14" width="1" height="1" fill="#000000"/><rect x="10" y="14" width="1" height="1" fill="#0000ff"/><rect x="11" y="14" width="1" height="1" fill="#000000"/><rect x="12" y="14" width="1" height="1" fill="#0000ff"/><rect x="13" y="14" width="1" height="1" fill="#000000"/><rect x="14" y="14" width="1" height="1" fill="#0000ff"/><rect x="15" y="14" width="1" height="1" fill="#000000"/><rect x="0" y="15" width="1" height="1" fill="#000000"/><rect x="1" y="15" width="1" height="1" fill="#0000ff"/><rect x="2" y="15" width="1" height="1" fill="#000000"/><rect x="3" y="15" width="1" height="1" fill="#0000ff"/><rect x="4" y="15" width="1" height="1" fill="#000000"/><rect x="5" y="15" width="1" height="1" fill="#0000ff"/><rect x="6" y="15" width="1" height="1" fill="#000000"/><rect x="7" y="15" width="1" height="1" fill="#0000ff"/><rect x="8" y="15" width="1" height="1" fill="#000000"/><rect x="9" y="15" width="1" height="1" fill="#0000ff"/><rect x="10" y="15" width="1" height="1" fill="#000000"/><rect x="11" y="15" width="1" height="1" fill="#0000ff"/><rect x="12" y="15" width="1" height="1" fill="#000000"/><rect x="13" y="15" width="1" height="1" fill="#0000ff"/><rect x="14" y="15" width="1" height="1" fill="#000000"/><rect x="15" y="15" width="1" height="1" fill="#0000ff"/></svg>
<svg class="a" style="left:954px;top:69px;" width="7" height="4" viewBox="0 0 7 4" shape-rendering="crispEdges"><rect x="0" y="0" width="7" height="1" fill="#222"/><rect x="1" y="1" width="5" height="1" fill="#222"/><rect x="2" y="2" width="3" height="1" fill="#222"/><rect x="3" y="3" width="1" height="1" fill="#222"/></svg>
<div class="a" style="left:967px;top:58px;width:1px;height:26px;background:#a0a0a0;"></div>
<svg class="a" style="left:987px;top:60px;" width="20" height="22" viewBox="0 0 20 22" shape-rendering="crispEdges"><rect x="0" y="0" width="1" height="1" fill="#000"/><rect x="1" y="0" width="1" height="1" fill="#a0a090"/><rect x="2" y="0" width="15" height="1" fill="#0000ff"/><rect x="17" y="0" width="2" height="1" fill="#a0a090"/><rect x="19" y="0" width="1" height="1" fill="#000"/><rect x="0" y="1" width="1" height="1" fill="#000"/><rect x="1" y="1" width="1" height="1" fill="#a0a090"/><rect x="2" y="1" width="15" height="1" fill="#0000ff"/><rect x="17" y="1" width="2" height="1" fill="#a0a090"/><rect x="19" y="1" width="1" height="1" fill="#000"/><rect x="0" y="2" width="20" height="1" fill="#000"/><rect x="0" y="3" width="1" height="1" fill="#000"/><rect x="1" y="3" width="18" height="1" fill="#fff"/><rect x="19" y="3" width="1" height="1" fill="#000"/><rect x="0" y="4" width="1" height="1" fill="#000"/><rect x="1" y="4" width="18" height="1" fill="#fff"/><rect x="19" y="4" width="1" height="1" fill="#000"/><rect x="0" y="5" width="1" height="1" fill="#000"/><rect x="1" y="5" width="3" height="1" fill="#fff"/><rect x="4" y="5" width="1" height="1" fill="#0000ff"/><rect x="5" y="5" width="1" height="1" fill="#fff"/><rect x="6" y="5" width="6" height="1" fill="#0000ff"/><rect x="12" y="5" width="5" height="1" fill="#000"/><rect x="17" y="5" width="2" height="1" fill="#fff"/><rect x="19" y="5" width="1" height="1" fill="#000"/><rect x="0" y="6" width="1" height="1" fill="#000"/><rect x="1" y="6" width="3" height="1" fill="#fff"/><rect x="4" y="6" width="1" height="1" fill="#0000ff"/><rect x="5" y="6" width="7" height="1" fill="#fff"/><rect x="12" y="6" width="1" height="1" fill="#000"/><rect x="13" y="6" width="3" height="1" fill="#ff0000"/><rect x="16" y="6" width="1" height="1" fill="#000"/><rect x="17" y="6" width="2" height="1" fill="#fff"/><rect x="19" y="6" width="1" height="1" fill="#000"/><rect x="0" y="7" width="1" height="1" fill="#000"/><rect x="1" y="7" width="11" height="1" fill="#fff"/><rect x="12" y="7" width="1" height="1" fill="#000"/><rect x="13" y="7" width="3" height="1" fill="#ff0000"/><rect x="16" y="7" width="1" height="1" fill="#000"/><rect x="17" y="7" width="2" height="1" fill="#fff"/><rect x="19" y="7" width="1" height="1" fill="#000"/><rect x="0" y="8" width="1" height="1" fill="#000"/><rect x="1" y="8" width="3" height="1" fill="#fff"/><rect x="4" y="8" width="13" height="1" fill="#000"/><rect x="17" y="8" width="2" height="1" fill="#fff"/><rect x="19" y="8" width="1" height="1" fill="#000"/><rect x="0" y="9" width="1" height="1" fill="#000"/><rect x="1" y="9" width="11" height="1" fill="#fff"/><rect x="12" y="9" width="1" height="1" fill="#000"/><rect x="13" y="9" width="3" height="1" fill="#ffff00"/><rect x="16" y="9" width="1" height="1" fill="#000"/><rect x="17" y="9" width="2" height="1" fill="#fff"/><rect x="19" y="9" width="1" height="1" fill="#000"/><rect x="0" y="10" width="1" height="1" fill="#000"/><rect x="1" y="10" width="3" height="1" fill="#fff"/><rect x="4" y="10" width="5" height="1" fill="#000"/><rect x="9" y="10" width="1" height="1" fill="#fff"/><rect x="10" y="10" width="3" height="1" fill="#000"/><rect x="13" y="10" width="3" height="1" fill="#ffff00"/><rect x="16" y="10" width="1" height="1" fill="#000"/><rect x="17" y="10" width="2" height="1" fill="#fff"/><rect x="19" y="10" width="1" height="1" fill="#000"/><rect x="0" y="11" width="1" height="1" fill="#000"/><rect x="1" y="11" width="11" height="1" fill="#fff"/><rect x="12" y="11" width="1" height="1" fill="#000"/><rect x="13" y="11" width="3" height="1" fill="#ffff00"/><rect x="16" y="11" width="1" height="1" fill="#000"/><rect x="17" y="11" width="2" height="1" fill="#fff"/><rect x="19" y="11" width="1" height="1" fill="#000"/><rect x="0" y="12" width="1" height="1" fill="#000"/><rect x="1" y="12" width="3" height="1" fill="#fff"/><rect x="4" y="12" width="5" height="1" fill="#000"/><rect x="9" y="12" width="1" height="1" fill="#fff"/><rect x="10" y="12" width="3" height="1" fill="#000"/><rect x="13" y="12" width="3" height="1" fill="#ffff00"/><rect x="16" y="12" width="1" height="1" fill="#000"/><rect x="17" y="12" width="2" height="1" fill="#fff"/><rect x="19" y="12" width="1" height="1" fill="#000"/><rect x="0" y="13" width="1" height="1" fill="#000"/><rect x="1" y="13" width="11" height="1" fill="#fff"/><rect x="12" y="13" width="1" height="1" fill="#000"/><rect x="13" y="13" width="3" height="1" fill="#ffff00"/><rect x="16" y="13" width="1" height="1" fill="#000"/><rect x="17" y="13" width="2" height="1" fill="#fff"/><rect x="19" y="13" width="1" height="1" fill="#000"/><rect x="0" y="14" width="1" height="1" fill="#000"/><rect x="1" y="14" width="3" height="1" fill="#fff"/><rect x="4" y="14" width="5" height="1" fill="#000"/><rect x="9" y="14" width="1" height="1" fill="#fff"/><rect x="10" y="14" width="3" height="1" fill="#000"/><rect x="13" y="14" width="3" height="1" fill="#ffff00"/><rect x="16" y="14" width="1" height="1" fill="#000"/><rect x="17" y="14" width="2" height="1" fill="#fff"/><rect x="19" y="14" width="1" height="1" fill="#000"/><rect x="0" y="15" width="1" height="1" fill="#000"/><rect x="1" y="15" width="11" height="1" fill="#fff"/><rect x="12" y="15" width="1" height="1" fill="#000"/><rect x="13" y="15" width="3" height="1" fill="#ffff00"/><rect x="16" y="15" width="1" height="1" fill="#000"/><rect x="17" y="15" width="2" height="1" fill="#fff"/><rect x="19" y="15" width="1" height="1" fill="#000"/><rect x="0" y="16" width="1" height="1" fill="#000"/><rect x="1" y="16" width="3" height="1" fill="#fff"/><rect x="4" y="16" width="5" height="1" fill="#000"/><rect x="9" y="16" width="4" height="1" fill="#fff"/><rect x="13" y="16" width="1" height="1" fill="#000"/><rect x="14" y="16" width="1" height="1" fill="#ffff00"/><rect x="15" y="16" width="1" height="1" fill="#000"/><rect x="16" y="16" width="3" height="1" fill="#fff"/><rect x="19" y="16" width="1" height="1" fill="#000"/><rect x="0" y="17" width="1" height="1" fill="#000"/><rect x="1" y="17" width="5" height="1" fill="#fff"/><rect x="6" y="17" width="2" height="1" fill="#000"/><rect x="8" y="17" width="5" height="1" fill="#fff"/><rect x="13" y="17" width="1" height="1" fill="#000"/><rect x="14" y="17" width="1" height="1" fill="#a09820"/><rect x="15" y="17" width="1" height="1" fill="#000"/><rect x="16" y="17" width="3" height="1" fill="#fff"/><rect x="19" y="17" width="1" height="1" fill="#000"/><rect x="0" y="18" width="1" height="1" fill="#000"/><rect x="1" y="18" width="3" height="1" fill="#fff"/><rect x="4" y="18" width="12" height="1" fill="#000"/><rect x="16" y="18" width="3" height="1" fill="#fff"/><rect x="19" y="18" width="1" height="1" fill="#000"/><rect x="0" y="19" width="1" height="1" fill="#000"/><rect x="1" y="19" width="4" height="1" fill="#fff"/><rect x="5" y="19" width="4" height="1" fill="#000"/><rect x="9" y="19" width="5" height="1" fill="#fff"/><rect x="14" y="19" width="1" height="1" fill="#000"/><rect x="15" y="19" width="4" height="1" fill="#fff"/><rect x="19" y="19" width="1" height="1" fill="#000"/><rect x="0" y="20" width="1" height="1" fill="#000"/><rect x="1" y="20" width="5" height="1" fill="#fff"/><rect x="6" y="20" width="2" height="1" fill="#000"/><rect x="8" y="20" width="11" height="1" fill="#fff"/><rect x="19" y="20" width="1" height="1" fill="#000"/><rect x="0" y="21" width="20" height="1" fill="#000"/></svg>
<svg class="a" style="left:1016px;top:69px;" width="7" height="4" viewBox="0 0 7 4" shape-rendering="crispEdges"><rect x="0" y="0" width="7" height="1" fill="#222"/><rect x="1" y="1" width="5" height="1" fill="#222"/><rect x="2" y="2" width="3" height="1" fill="#222"/><rect x="3" y="3" width="1" height="1" fill="#222"/></svg>
<div class="a" style="left:1083px;top:58px;width:1px;height:26px;background:#a0a0a0;"></div>
<svg class="a" style="left:1041px;top:60px;" width="22" height="21" viewBox="0 0 22 21"><path d="M2.5 1.5L8.5 0.5L10.5 3L13.5 10.5L6.5 11.5L4.5 4L2.5 2.5z" fill="#bde3f8" stroke="#8a78a8" stroke-width="0.9"/><path d="M4.5 4L8 3.5L12 10" fill="none" stroke="#e8f6ff" stroke-width="1"/><path d="M0.5 10.5L6.5 9.5L7 11.5L13.5 10.5L12.5 8.5L16.5 8L20.5 12V18.5L13 20.5L8 21L3.5 19.5L0.5 15.5z" fill="#dedede" stroke="#8a78a8" stroke-width="1"/><path d="M1 11L6 14.5L20 12" fill="none" stroke="#8a78a8" stroke-width="0.9"/><path d="M1.5 11.2L6 10.5L14 11.5L19 11.5L6.5 13.8z" fill="#fafafa"/><path d="M10 18L18 15" stroke="#000" stroke-width="2.2" stroke-linecap="round"/></svg>
<svg class="a" style="left:1070px;top:69px;" width="7" height="4" viewBox="0 0 7 4" shape-rendering="crispEdges"><rect x="0" y="0" width="7" height="1" fill="#222"/><rect x="1" y="1" width="5" height="1" fill="#222"/><rect x="2" y="2" width="3" height="1" fill="#222"/><rect x="3" y="3" width="1" height="1" fill="#222"/></svg>
<div class="a" style="left:1089px;top:56px;width:31px;height:29px;background:#d5f1fd;border:1px solid #99d1ff;"></div>
<svg class="a" style="left:1097px;top:63px;" width="17" height="16" viewBox="0 0 17 16"><path d="M0.75 0.75h8.5l2.5 2.5v3M7.5 14.75h-6.75v-14" fill="#fff" stroke="#000" stroke-width="1.5"/><rect x="1.5" y="1.5" width="7" height="12.5" fill="#fff"/><path d="M8.5 0.5v3h3" fill="none" stroke="#000"/><circle cx="9.7" cy="9" r="3.6" fill="#d8d8d8" stroke="#000" stroke-width="1.4"/><rect x="8" y="7" width="1.5" height="1.5" fill="#20e0ff"/><rect x="9.5" y="10" width="1.2" height="1.2" fill="#20e0ff"/><path d="M12.5 12l2.8 2.8" stroke="#000" stroke-width="2.2"/></svg>
<svg class="a" style="left:1128px;top:64px;" width="14" height="14" viewBox="0 0 14 14"><rect x="0.75" y="0.75" width="12.5" height="12.5" fill="#fff" stroke="#000" stroke-width="1.5"/><path d="M2.6 6.3l3.2 3.6l5.2-6" fill="none" stroke="#000" stroke-width="2"/></svg>
<svg class="a" style="left:1155px;top:60px;" width="24" height="23" viewBox="0 0 24 23"><rect x="1" y="1" width="22" height="21" rx="3.5" fill="#fff" stroke="#1a96e0" stroke-width="1.8"/><path d="M7.8 7.8C7.8 4.6 10 3.2 12.2 3.2C14.8 3.2 16.6 4.8 16.6 7.2C16.6 9.2 15.2 10.2 14 11C13.1 11.6 12.9 12.2 12.9 13.6H10.5C10.5 11.6 10.9 10.6 12.3 9.7C13.4 9 14 8.5 14 7.3C14 6.2 13.2 5.6 12.2 5.6C11 5.6 10.3 6.4 10.3 7.8z" fill="#c8101a"/><rect x="10.4" y="15.4" width="2.7" height="3" fill="#c8101a"/></svg>
<svg class="a" style="left:1186px;top:69px;" width="7" height="4" viewBox="0 0 7 4" shape-rendering="crispEdges"><rect x="0" y="0" width="7" height="1" fill="#222"/><rect x="1" y="1" width="5" height="1" fill="#222"/><rect x="2" y="2" width="3" height="1" fill="#222"/><rect x="3" y="3" width="1" height="1" fill="#222"/></svg>
<div class="a" style="left:1199px;top:58px;width:1px;height:26px;background:#a0a0a0;"></div>
<svg class="a" style="left:1221px;top:60px;" width="23" height="23" viewBox="0 0 23 23"><rect x="0.9" y="0.9" width="21" height="21" rx="3.5" fill="#fff" stroke="#1a96e0" stroke-width="1.8"/><path d="M7.8 6.2A7.2 7.2 0 1 0 15.2 6.2" fill="none" stroke="#c8101a" stroke-width="2.8"/><path d="M11.5 2.5v7.5" stroke="#c8101a" stroke-width="2.6" stroke-linecap="round"/></svg>
<div class="a" style="left:1257px;top:94px;width:2px;height:925px;background:#9b88aa;"></div>
<div class="t " style="left:14px;top:107.69px;font-size:11px;font-weight:normal;color:#000;transform:scaleX(0.9816);transform-origin:0 0;">SchNr</div>
<div class="t " style="left:58px;top:107.69px;font-size:11px;font-weight:normal;color:#000;transform:scaleX(0.9920);transform-origin:0 0;">Schüler</div>
<div class="t " style="left:304px;top:107.69px;font-size:11px;font-weight:normal;color:#000;transform:scaleX(0.9760);transform-origin:0 0;">Tutor/in</div>
<div class="a" style="left:14px;top:124px;width:38px;height:24px;background:#e6e6e6;border:1px solid #646464;box-shadow:inset 1px 1px 0 #fff, inset -1px -1px 0 #fff;"></div>
<div class="t " style="left:22.5px;top:128.15px;font-size:14px;font-weight:normal;color:#000;transform:scaleX(0.8776);transform-origin:0 0;">001</div>
<div class="a" style="left:58px;top:124px;width:213px;height:24px;background:#e6e6e6;border:1px solid #646464;box-shadow:inset 1px 1px 0 #fff, inset -1px -1px 0 #fff;"></div>
<div class="t " style="left:61px;top:128.15px;font-size:14px;font-weight:normal;color:#000;transform:scaleX(0.9389);transform-origin:0 0;">Bertram, Boris</div>
<div class="a" style="left:273px;top:124px;width:29px;height:24px;background:#e6e6e6;border:1px solid #646464;box-shadow:inset 1px 1px 0 #fff, inset -1px -1px 0 #fff;"></div>
<div class="t " style="left:282.5px;top:128.15px;font-size:14px;font-weight:normal;color:#000;transform:scaleX(0.8993);transform-origin:0 0;">8j</div>
<div class="a" style="left:304px;top:124px;width:54px;height:24px;background:#e6e6e6;border:1px solid #646464;box-shadow:inset 1px 1px 0 #fff, inset -1px -1px 0 #fff;"></div>
<div class="t " style="left:307.5px;top:128.15px;font-size:14px;font-weight:normal;color:#000;transform:scaleX(0.8776);transform-origin:0 0;">10a</div>
<div class="t " style="left:363px;top:136.42px;font-size:12.5px;font-weight:normal;color:#000;transform:scaleX(0.9712);transform-origin:0 0;">[10a]</div>
<div class="a" style="left:419px;top:114px;width:102px;height:16px;background:#00ff00;"></div>
<div class="t " style="left:423px;top:115.57px;font-size:13.5px;font-weight:bold;color:#000;transform:scaleX(0.9674);transform-origin:0 0;">Kurswahl OK</div>
<div class="t " style="left:14px;top:161.00px;font-size:13px;font-weight:normal;color:#a08c88;transform:scaleX(0.9901);transform-origin:0 0;">Stamm-ID:</div>
<div class="t " style="left:79px;top:161.00px;font-size:13px;font-weight:normal;color:#a08c88;transform:scaleX(0.9682);transform-origin:0 0;">2022000001</div>
<div class="t " style="left:14px;top:178.00px;font-size:13px;font-weight:normal;color:#a08c88;transform:scaleX(1.0079);transform-origin:0 0;">KWL-ID:</div>
<div class="t " style="left:79px;top:178.00px;font-size:13px;font-weight:normal;color:#a08c88;transform:scaleX(0.9682);transform-origin:0 0;">2022000001</div>
<div class="a" style="left:9px;top:240px;width:1239px;height:770px;border:1px solid #cfe8c0;"></div>
<div class="a" style="left:12px;top:220px;width:617px;height:20px;border:1px solid #cfe8c0;border-bottom:none;background:#fff;"></div>
<div class="a" style="left:249px;top:220px;width:1px;height:20px;background:#cfe8c0;"></div>
<div class="a" style="left:367px;top:220px;width:1px;height:20px;background:#cfe8c0;"></div>
<div class="a" style="left:521px;top:220px;width:1px;height:20px;background:#cfe8c0;"></div>
<div class="a" style="left:164px;top:222px;width:1px;height:18px;background:#cfe8c0;"></div>
<div class="a" style="left:96px;top:222px;width:68px;height:1px;background:#cfe8c0;"></div>
<div class="t " style="left:20px;top:225.42px;font-size:12.5px;font-weight:normal;color:#000;transform:scaleX(0.9948);transform-origin:0 0;">Stammdaten</div>
<div class="t " style="left:105px;top:223.02px;font-size:12.5px;font-weight:normal;color:#000;transform:scaleX(1.0114);transform-origin:0 0;">Kurswahl</div>
<div class="t " style="left:170px;top:225.42px;font-size:12.5px;font-weight:normal;color:#000;transform:scaleX(1.0103);transform-origin:0 0;">Parallelkurse</div>
<div class="t " style="left:258px;top:225.42px;font-size:12.5px;font-weight:normal;color:#000;transform:scaleX(0.9625);transform-origin:0 0;">Stundenplan (Anz.)</div>
<div class="t " style="left:375.5px;top:225.42px;font-size:12.5px;font-weight:normal;color:#000;transform:scaleX(1.0029);transform-origin:0 0;">Noten Einführungsphase</div>
<div class="t " style="left:528.5px;top:225.42px;font-size:12.5px;font-weight:normal;color:#000;transform:scaleX(0.9646);transform-origin:0 0;">Bemerk. und AGs</div>
<svg class="a" style="left:32px;top:260px;" width="22" height="21" viewBox="0 0 22 21"><path d="M2.5 1.5L8.5 0.5L10.5 3L13.5 10.5L6.5 11.5L4.5 4L2.5 2.5z" fill="#bde3f8" stroke="#8a78a8" stroke-width="0.9"/><path d="M4.5 4L8 3.5L12 10" fill="none" stroke="#e8f6ff" stroke-width="1"/><path d="M0.5 10.5L6.5 9.5L7 11.5L13.5 10.5L12.5 8.5L16.5 8L20.5 12V18.5L13 20.5L8 21L3.5 19.5L0.5 15.5z" fill="#dedede" stroke="#8a78a8" stroke-width="1"/><path d="M1 11L6 14.5L20 12" fill="none" stroke="#8a78a8" stroke-width="0.9"/><path d="M1.5 11.2L6 10.5L14 11.5L19 11.5L6.5 13.8z" fill="#fafafa"/><path d="M10 18L18 15" stroke="#000" stroke-width="2.2" stroke-linecap="round"/></svg>
<svg class="a" style="left:61px;top:269px;" width="8" height="4" viewBox="0 0 8 4"><path d="M0 0h7l-3.5 4z" fill="#222"/></svg>
<div class="a" style="left:74px;top:258px;width:1px;height:26px;background:#a0a0a0;"></div>
<svg class="a" style="left:103px;top:266px;" width="9" height="9" viewBox="0 0 9 9" shape-rendering="crispEdges"><rect x="3" y="0" width="3" height="1" fill="#000"/><rect x="3" y="1" width="3" height="1" fill="#000"/><rect x="2" y="2" width="2" height="1" fill="#000"/><rect x="5" y="2" width="2" height="1" fill="#000"/><rect x="2" y="3" width="2" height="1" fill="#000"/><rect x="5" y="3" width="2" height="1" fill="#000"/><rect x="1" y="4" width="2" height="1" fill="#000"/><rect x="6" y="4" width="2" height="1" fill="#000"/><rect x="1" y="5" width="2" height="1" fill="#000"/><rect x="6" y="5" width="2" height="1" fill="#000"/><rect x="1" y="6" width="7" height="1" fill="#000"/><rect x="0" y="7" width="2" height="1" fill="#000"/><rect x="7" y="7" width="2" height="1" fill="#000"/><rect x="0" y="8" width="2" height="1" fill="#000"/><rect x="7" y="8" width="2" height="1" fill="#000"/></svg>
<div class="a" style="left:126px;top:259px;width:1px;height:22px;background:#909090;"></div>
<svg class="a" style="left:145px;top:264px;" width="16" height="13" viewBox="0 0 16 13" shape-rendering="crispEdges"><rect x="0" y="0" width="5" height="1" fill="#000"/><rect x="0" y="1" width="1" height="1" fill="#000"/><rect x="1" y="1" width="3" height="1" fill="#fff"/><rect x="4" y="1" width="2" height="1" fill="#000"/><rect x="0" y="2" width="1" height="1" fill="#000"/><rect x="1" y="2" width="3" height="1" fill="#fff"/><rect x="4" y="2" width="1" height="1" fill="#000"/><rect x="5" y="2" width="1" height="1" fill="#fff"/><rect x="6" y="2" width="1" height="1" fill="#000"/><rect x="0" y="3" width="1" height="1" fill="#000"/><rect x="1" y="3" width="1" height="1" fill="#fff"/><rect x="2" y="3" width="2" height="1" fill="#000"/><rect x="4" y="3" width="1" height="1" fill="#fff"/><rect x="5" y="3" width="1" height="1" fill="#000"/><rect x="6" y="3" width="7" height="1" fill="#000080"/><rect x="0" y="4" width="1" height="1" fill="#000"/><rect x="1" y="4" width="5" height="1" fill="#fff"/><rect x="6" y="4" width="2" height="1" fill="#000080"/><rect x="8" y="4" width="4" height="1" fill="#fff"/><rect x="12" y="4" width="2" height="1" fill="#000080"/><rect x="0" y="5" width="1" height="1" fill="#000"/><rect x="1" y="5" width="1" height="1" fill="#fff"/><rect x="2" y="5" width="4" height="1" fill="#000"/><rect x="6" y="5" width="2" height="1" fill="#000080"/><rect x="8" y="5" width="4" height="1" fill="#fff"/><rect x="12" y="5" width="1" height="1" fill="#000080"/><rect x="13" y="5" width="1" height="1" fill="#fff"/><rect x="14" y="5" width="1" height="1" fill="#000080"/><rect x="0" y="6" width="1" height="1" fill="#000"/><rect x="1" y="6" width="5" height="1" fill="#fff"/><rect x="6" y="6" width="2" height="1" fill="#000080"/><rect x="8" y="6" width="3" height="1" fill="#000"/><rect x="11" y="6" width="2" height="1" fill="#fff"/><rect x="13" y="6" width="3" height="1" fill="#000080"/><rect x="0" y="7" width="1" height="1" fill="#000"/><rect x="1" y="7" width="1" height="1" fill="#fff"/><rect x="2" y="7" width="4" height="1" fill="#000"/><rect x="6" y="7" width="2" height="1" fill="#000080"/><rect x="8" y="7" width="7" height="1" fill="#fff"/><rect x="15" y="7" width="1" height="1" fill="#000080"/><rect x="0" y="8" width="1" height="1" fill="#000"/><rect x="1" y="8" width="5" height="1" fill="#fff"/><rect x="6" y="8" width="2" height="1" fill="#000080"/><rect x="8" y="8" width="6" height="1" fill="#000"/><rect x="14" y="8" width="1" height="1" fill="#fff"/><rect x="15" y="8" width="1" height="1" fill="#000080"/><rect x="0" y="9" width="6" height="1" fill="#000"/><rect x="6" y="9" width="2" height="1" fill="#000080"/><rect x="8" y="9" width="7" height="1" fill="#fff"/><rect x="15" y="9" width="1" height="1" fill="#000080"/><rect x="6" y="10" width="2" height="1" fill="#000080"/><rect x="8" y="10" width="6" height="1" fill="#000"/><rect x="14" y="10" width="1" height="1" fill="#fff"/><rect x="15" y="10" width="1" height="1" fill="#000080"/><rect x="6" y="11" width="2" height="1" fill="#000080"/><rect x="8" y="11" width="7" height="1" fill="#fff"/><rect x="15" y="11" width="1" height="1" fill="#000080"/><rect x="6" y="12" width="10" height="1" fill="#000080"/></svg>
<svg class="a" style="left:171px;top:269px;" width="7" height="4" viewBox="0 0 7 4" shape-rendering="crispEdges"><rect x="0" y="0" width="7" height="1" fill="#222"/><rect x="1" y="1" width="5" height="1" fill="#222"/><rect x="2" y="2" width="3" height="1" fill="#222"/><rect x="3" y="3" width="1" height="1" fill="#222"/></svg>
<svg class="a" style="left:190px;top:264px;" width="17" height="14" viewBox="0 0 17 14" shape-rendering="crispEdges"><rect x="4" y="0" width="1" height="1" fill="#000"/><rect x="5" y="0" width="4" height="1" fill="#f8f000"/><rect x="9" y="0" width="1" height="1" fill="#000"/><rect x="0" y="1" width="4" height="1" fill="#000"/><rect x="4" y="1" width="1" height="1" fill="#f8f000"/><rect x="5" y="1" width="4" height="1" fill="#000"/><rect x="9" y="1" width="1" height="1" fill="#f8f000"/><rect x="10" y="1" width="4" height="1" fill="#000"/><rect x="0" y="2" width="1" height="1" fill="#000"/><rect x="1" y="2" width="1" height="1" fill="#6e6428"/><rect x="2" y="2" width="1" height="1" fill="#8a8020"/><rect x="3" y="2" width="8" height="1" fill="#ff00ff"/><rect x="11" y="2" width="1" height="1" fill="#6e6428"/><rect x="12" y="2" width="1" height="1" fill="#8a8020"/><rect x="13" y="2" width="1" height="1" fill="#000"/><rect x="0" y="3" width="1" height="1" fill="#000"/><rect x="1" y="3" width="1" height="1" fill="#8a8020"/><rect x="2" y="3" width="10" height="1" fill="#000"/><rect x="12" y="3" width="1" height="1" fill="#8a8020"/><rect x="13" y="3" width="1" height="1" fill="#000"/><rect x="0" y="4" width="1" height="1" fill="#000"/><rect x="1" y="4" width="1" height="1" fill="#6e6428"/><rect x="2" y="4" width="1" height="1" fill="#8a8020"/><rect x="3" y="4" width="1" height="1" fill="#6e6428"/><rect x="4" y="4" width="1" height="1" fill="#8a8020"/><rect x="5" y="4" width="1" height="1" fill="#6e6428"/><rect x="6" y="4" width="1" height="1" fill="#8a8020"/><rect x="7" y="4" width="1" height="1" fill="#6e6428"/><rect x="8" y="4" width="1" height="1" fill="#8a8020"/><rect x="9" y="4" width="1" height="1" fill="#6e6428"/><rect x="10" y="4" width="1" height="1" fill="#8a8020"/><rect x="11" y="4" width="1" height="1" fill="#6e6428"/><rect x="12" y="4" width="1" height="1" fill="#8a8020"/><rect x="13" y="4" width="1" height="1" fill="#000"/><rect x="0" y="5" width="1" height="1" fill="#000"/><rect x="1" y="5" width="1" height="1" fill="#8a8020"/><rect x="2" y="5" width="1" height="1" fill="#8a8020"/><rect x="3" y="5" width="1" height="1" fill="#8a8020"/><rect x="4" y="5" width="1" height="1" fill="#8a8020"/><rect x="5" y="5" width="1" height="1" fill="#8a8020"/><rect x="6" y="5" width="1" height="1" fill="#8a8020"/><rect x="7" y="5" width="1" height="1" fill="#8a8020"/><rect x="8" y="5" width="1" height="1" fill="#8a8020"/><rect x="9" y="5" width="1" height="1" fill="#8a8020"/><rect x="10" y="5" width="1" height="1" fill="#8a8020"/><rect x="11" y="5" width="1" height="1" fill="#8a8020"/><rect x="12" y="5" width="1" height="1" fill="#8a8020"/><rect x="13" y="5" width="1" height="1" fill="#000"/><rect x="0" y="6" width="1" height="1" fill="#000"/><rect x="1" y="6" width="1" height="1" fill="#6e6428"/><rect x="2" y="6" width="1" height="1" fill="#8a8020"/><rect x="3" y="6" width="1" height="1" fill="#6e6428"/><rect x="4" y="6" width="1" height="1" fill="#8a8020"/><rect x="5" y="6" width="1" height="1" fill="#6e6428"/><rect x="6" y="6" width="8" height="1" fill="#000080"/><rect x="0" y="7" width="1" height="1" fill="#000"/><rect x="1" y="7" width="1" height="1" fill="#8a8020"/><rect x="2" y="7" width="1" height="1" fill="#8a8020"/><rect x="3" y="7" width="1" height="1" fill="#8a8020"/><rect x="4" y="7" width="1" height="1" fill="#8a8020"/><rect x="5" y="7" width="1" height="1" fill="#8a8020"/><rect x="6" y="7" width="2" height="1" fill="#000080"/><rect x="8" y="7" width="5" height="1" fill="#fff"/><rect x="13" y="7" width="2" height="1" fill="#000080"/><rect x="0" y="8" width="1" height="1" fill="#000"/><rect x="1" y="8" width="1" height="1" fill="#6e6428"/><rect x="2" y="8" width="1" height="1" fill="#8a8020"/><rect x="3" y="8" width="1" height="1" fill="#6e6428"/><rect x="4" y="8" width="1" height="1" fill="#8a8020"/><rect x="5" y="8" width="1" height="1" fill="#6e6428"/><rect x="6" y="8" width="2" height="1" fill="#000080"/><rect x="8" y="8" width="5" height="1" fill="#fff"/><rect x="13" y="8" width="1" height="1" fill="#000080"/><rect x="14" y="8" width="1" height="1" fill="#fff"/><rect x="15" y="8" width="1" height="1" fill="#000080"/><rect x="0" y="9" width="1" height="1" fill="#000"/><rect x="1" y="9" width="1" height="1" fill="#8a8020"/><rect x="2" y="9" width="1" height="1" fill="#8a8020"/><rect x="3" y="9" width="1" height="1" fill="#8a8020"/><rect x="4" y="9" width="1" height="1" fill="#8a8020"/><rect x="5" y="9" width="1" height="1" fill="#8a8020"/><rect x="6" y="9" width="2" height="1" fill="#000080"/><rect x="8" y="9" width="3" height="1" fill="#000"/><rect x="11" y="9" width="3" height="1" fill="#fff"/><rect x="14" y="9" width="3" height="1" fill="#000080"/><rect x="0" y="10" width="1" height="1" fill="#000"/><rect x="1" y="10" width="1" height="1" fill="#6e6428"/><rect x="2" y="10" width="1" height="1" fill="#8a8020"/><rect x="3" y="10" width="1" height="1" fill="#6e6428"/><rect x="4" y="10" width="1" height="1" fill="#8a8020"/><rect x="5" y="10" width="1" height="1" fill="#6e6428"/><rect x="6" y="10" width="2" height="1" fill="#000080"/><rect x="8" y="10" width="8" height="1" fill="#fff"/><rect x="16" y="10" width="1" height="1" fill="#000080"/><rect x="0" y="11" width="1" height="1" fill="#000"/><rect x="1" y="11" width="1" height="1" fill="#8a8020"/><rect x="2" y="11" width="1" height="1" fill="#8a8020"/><rect x="3" y="11" width="1" height="1" fill="#8a8020"/><rect x="4" y="11" width="1" height="1" fill="#8a8020"/><rect x="5" y="11" width="1" height="1" fill="#8a8020"/><rect x="6" y="11" width="2" height="1" fill="#000080"/><rect x="8" y="11" width="6" height="1" fill="#000"/><rect x="14" y="11" width="2" height="1" fill="#fff"/><rect x="16" y="11" width="1" height="1" fill="#000080"/><rect x="0" y="12" width="6" height="1" fill="#000"/><rect x="6" y="12" width="2" height="1" fill="#000080"/><rect x="8" y="12" width="8" height="1" fill="#fff"/><rect x="16" y="12" width="1" height="1" fill="#000080"/><rect x="6" y="13" width="11" height="1" fill="#000080"/></svg>
<svg class="a" style="left:217px;top:269px;" width="7" height="4" viewBox="0 0 7 4" shape-rendering="crispEdges"><rect x="0" y="0" width="7" height="1" fill="#222"/><rect x="1" y="1" width="5" height="1" fill="#222"/><rect x="2" y="2" width="3" height="1" fill="#222"/><rect x="3" y="3" width="1" height="1" fill="#222"/></svg>
<div class="a" style="left:231px;top:259px;width:1px;height:22px;background:#909090;"></div>
<svg class="a" style="left:254px;top:264px;" width="17" height="14" viewBox="0 0 17 14"><path d="M2 0.5h-1.5v13h1.5M14 0.5h1.5v13h-1.5" stroke="#000" fill="none"/><path d="M2.6 2.2L4.2 0.6L13.2 10.8L12.5 11.5z" fill="#000"/><path d="M2.8 12.4L4.3 14L13.1 3.2L12.3 2.3z" fill="#000"/></svg>
<div class="a" style="left:280px;top:259px;width:1px;height:22px;background:#909090;"></div>
<svg class="a" style="left:295px;top:264px;" width="14" height="14" viewBox="0 0 14 14"><path d="M0.2 1.4L1.8 -0.1L12.5 10.7L11.8 11.4z" fill="#000"/><path d="M0.3 11.6L1.9 13.2L13 0.6L12.3 -0.1z" fill="#000"/><rect x="12" y="12" width="1.5" height="1.5" fill="#000"/></svg>
<div class="a" style="left:320px;top:258px;width:1px;height:26px;background:#a0a0a0;"></div>
<svg class="a" style="left:330px;top:261px;" width="22" height="21" viewBox="0 0 22 21" shape-rendering="crispEdges"><rect x="0" y="0" width="7" height="1" fill="#000"/><rect x="0" y="1" width="1" height="1" fill="#000"/><rect x="1" y="1" width="5" height="1" fill="#fff"/><rect x="6" y="1" width="2" height="1" fill="#000"/><rect x="0" y="2" width="1" height="1" fill="#000"/><rect x="1" y="2" width="5" height="1" fill="#fff"/><rect x="6" y="2" width="1" height="1" fill="#000"/><rect x="7" y="2" width="1" height="1" fill="#fff"/><rect x="8" y="2" width="1" height="1" fill="#000"/><rect x="0" y="3" width="1" height="1" fill="#000"/><rect x="1" y="3" width="1" height="1" fill="#fff"/><rect x="2" y="3" width="1" height="1" fill="#000"/><rect x="3" y="3" width="4" height="1" fill="#fff"/><rect x="7" y="3" width="3" height="1" fill="#000"/><rect x="0" y="4" width="1" height="1" fill="#000"/><rect x="1" y="4" width="8" height="1" fill="#fff"/><rect x="9" y="4" width="1" height="1" fill="#000"/><rect x="0" y="5" width="1" height="1" fill="#000"/><rect x="1" y="5" width="1" height="1" fill="#fff"/><rect x="2" y="5" width="2" height="1" fill="#000"/><rect x="4" y="5" width="5" height="1" fill="#fff"/><rect x="9" y="5" width="1" height="1" fill="#000"/><rect x="0" y="6" width="1" height="1" fill="#000"/><rect x="1" y="6" width="8" height="1" fill="#fff"/><rect x="9" y="6" width="1" height="1" fill="#000"/><rect x="0" y="7" width="1" height="1" fill="#000"/><rect x="1" y="7" width="1" height="1" fill="#fff"/><rect x="2" y="7" width="3" height="1" fill="#000"/><rect x="5" y="7" width="1" height="1" fill="#fff"/><rect x="6" y="7" width="1" height="1" fill="#000"/><rect x="7" y="7" width="1" height="1" fill="#fff"/><rect x="8" y="7" width="7" height="1" fill="#ff0000"/><rect x="0" y="8" width="1" height="1" fill="#000"/><rect x="1" y="8" width="8" height="1" fill="#fff"/><rect x="9" y="8" width="1" height="1" fill="#000"/><rect x="14" y="8" width="1" height="1" fill="#ff0000"/><rect x="0" y="9" width="1" height="1" fill="#000"/><rect x="1" y="9" width="1" height="1" fill="#fff"/><rect x="2" y="9" width="2" height="1" fill="#000"/><rect x="4" y="9" width="1" height="1" fill="#fff"/><rect x="5" y="9" width="1" height="1" fill="#000"/><rect x="6" y="9" width="1" height="1" fill="#fff"/><rect x="7" y="9" width="1" height="1" fill="#000"/><rect x="8" y="9" width="1" height="1" fill="#fff"/><rect x="9" y="9" width="1" height="1" fill="#000"/><rect x="12" y="9" width="1" height="1" fill="#ff0000"/><rect x="14" y="9" width="1" height="1" fill="#ff0000"/><rect x="16" y="9" width="1" height="1" fill="#ff0000"/><rect x="0" y="10" width="1" height="1" fill="#000"/><rect x="1" y="10" width="8" height="1" fill="#fff"/><rect x="9" y="10" width="1" height="1" fill="#000"/><rect x="13" y="10" width="3" height="1" fill="#ff0000"/><rect x="0" y="11" width="10" height="1" fill="#000"/><rect x="14" y="11" width="1" height="1" fill="#ff0000"/><rect x="5" y="12" width="10" height="1" fill="#000"/><rect x="5" y="13" width="1" height="1" fill="#000"/><rect x="6" y="13" width="1" height="1" fill="#ffff00"/><rect x="7" y="13" width="1" height="1" fill="#ffff00"/><rect x="8" y="13" width="1" height="1" fill="#ffff00"/><rect x="9" y="13" width="1" height="1" fill="#ffff00"/><rect x="10" y="13" width="1" height="1" fill="#ffff00"/><rect x="11" y="13" width="1" height="1" fill="#ffff00"/><rect x="12" y="13" width="1" height="1" fill="#ffff00"/><rect x="13" y="13" width="1" height="1" fill="#ffff00"/><rect x="14" y="13" width="1" height="1" fill="#000"/><rect x="5" y="14" width="1" height="1" fill="#000"/><rect x="6" y="14" width="1" height="1" fill="#ffff00"/><rect x="7" y="14" width="1" height="1" fill="#ffffff"/><rect x="8" y="14" width="1" height="1" fill="#ffff00"/><rect x="9" y="14" width="1" height="1" fill="#ffffff"/><rect x="10" y="14" width="1" height="1" fill="#ffff00"/><rect x="11" y="14" width="1" height="1" fill="#ffffff"/><rect x="12" y="14" width="1" height="1" fill="#ffff00"/><rect x="13" y="14" width="1" height="1" fill="#ffffff"/><rect x="14" y="14" width="7" height="1" fill="#000"/><rect x="5" y="15" width="1" height="1" fill="#000"/><rect x="6" y="15" width="1" height="1" fill="#ffff00"/><rect x="7" y="15" width="1" height="1" fill="#ffff00"/><rect x="8" y="15" width="1" height="1" fill="#ffff00"/><rect x="9" y="15" width="1" height="1" fill="#000"/><rect x="10" y="15" width="9" height="1" fill="#8a8020"/><rect x="19" y="15" width="1" height="1" fill="#000"/><rect x="5" y="16" width="1" height="1" fill="#000"/><rect x="6" y="16" width="1" height="1" fill="#ffff00"/><rect x="7" y="16" width="1" height="1" fill="#ffffff"/><rect x="8" y="16" width="1" height="1" fill="#000"/><rect x="9" y="16" width="9" height="1" fill="#8a8020"/><rect x="18" y="16" width="1" height="1" fill="#000"/><rect x="5" y="17" width="1" height="1" fill="#000"/><rect x="6" y="17" width="1" height="1" fill="#ffff00"/><rect x="7" y="17" width="1" height="1" fill="#000"/><rect x="8" y="17" width="9" height="1" fill="#8a8020"/><rect x="17" y="17" width="1" height="1" fill="#000"/><rect x="5" y="18" width="2" height="1" fill="#000"/><rect x="7" y="18" width="9" height="1" fill="#8a8020"/><rect x="16" y="18" width="1" height="1" fill="#000"/><rect x="5" y="19" width="1" height="1" fill="#000"/><rect x="6" y="19" width="9" height="1" fill="#8a8020"/><rect x="15" y="19" width="1" height="1" fill="#000"/><rect x="5" y="20" width="10" height="1" fill="#000"/></svg>
<svg class="a" style="left:361px;top:261px;" width="22" height="21" viewBox="0 0 22 21" shape-rendering="crispEdges"><rect x="11" y="0" width="7" height="1" fill="#000"/><rect x="11" y="1" width="1" height="1" fill="#000"/><rect x="12" y="1" width="5" height="1" fill="#fff"/><rect x="17" y="1" width="2" height="1" fill="#000"/><rect x="11" y="2" width="1" height="1" fill="#000"/><rect x="12" y="2" width="5" height="1" fill="#fff"/><rect x="17" y="2" width="1" height="1" fill="#000"/><rect x="18" y="2" width="1" height="1" fill="#fff"/><rect x="19" y="2" width="1" height="1" fill="#000"/><rect x="9" y="3" width="1" height="1" fill="#ff0000"/><rect x="11" y="3" width="1" height="1" fill="#000"/><rect x="12" y="3" width="1" height="1" fill="#fff"/><rect x="13" y="3" width="1" height="1" fill="#000"/><rect x="14" y="3" width="4" height="1" fill="#fff"/><rect x="18" y="3" width="3" height="1" fill="#000"/><rect x="10" y="4" width="1" height="1" fill="#ff0000"/><rect x="11" y="4" width="1" height="1" fill="#000"/><rect x="12" y="4" width="8" height="1" fill="#fff"/><rect x="20" y="4" width="1" height="1" fill="#000"/><rect x="5" y="5" width="6" height="1" fill="#ff0000"/><rect x="11" y="5" width="1" height="1" fill="#000"/><rect x="12" y="5" width="1" height="1" fill="#fff"/><rect x="13" y="5" width="2" height="1" fill="#000"/><rect x="15" y="5" width="5" height="1" fill="#fff"/><rect x="20" y="5" width="1" height="1" fill="#000"/><rect x="5" y="6" width="1" height="1" fill="#ff0000"/><rect x="10" y="6" width="1" height="1" fill="#ff0000"/><rect x="11" y="6" width="1" height="1" fill="#000"/><rect x="12" y="6" width="8" height="1" fill="#fff"/><rect x="20" y="6" width="1" height="1" fill="#000"/><rect x="5" y="7" width="1" height="1" fill="#ff0000"/><rect x="9" y="7" width="1" height="1" fill="#ff0000"/><rect x="11" y="7" width="1" height="1" fill="#000"/><rect x="12" y="7" width="1" height="1" fill="#fff"/><rect x="13" y="7" width="3" height="1" fill="#000"/><rect x="16" y="7" width="1" height="1" fill="#fff"/><rect x="17" y="7" width="1" height="1" fill="#000"/><rect x="18" y="7" width="2" height="1" fill="#fff"/><rect x="20" y="7" width="1" height="1" fill="#000"/><rect x="5" y="8" width="1" height="1" fill="#ff0000"/><rect x="11" y="8" width="1" height="1" fill="#000"/><rect x="12" y="8" width="8" height="1" fill="#fff"/><rect x="20" y="8" width="1" height="1" fill="#000"/><rect x="5" y="9" width="1" height="1" fill="#ff0000"/><rect x="11" y="9" width="1" height="1" fill="#000"/><rect x="12" y="9" width="1" height="1" fill="#fff"/><rect x="13" y="9" width="2" height="1" fill="#000"/><rect x="15" y="9" width="1" height="1" fill="#fff"/><rect x="16" y="9" width="1" height="1" fill="#000"/><rect x="17" y="9" width="1" height="1" fill="#fff"/><rect x="18" y="9" width="1" height="1" fill="#000"/><rect x="19" y="9" width="1" height="1" fill="#fff"/><rect x="20" y="9" width="1" height="1" fill="#000"/><rect x="5" y="10" width="1" height="1" fill="#ff0000"/><rect x="11" y="10" width="1" height="1" fill="#000"/><rect x="12" y="10" width="8" height="1" fill="#fff"/><rect x="20" y="10" width="1" height="1" fill="#000"/><rect x="5" y="11" width="1" height="1" fill="#ff0000"/><rect x="11" y="11" width="10" height="1" fill="#000"/><rect x="0" y="12" width="5" height="1" fill="#000"/><rect x="5" y="12" width="1" height="1" fill="#ff0000"/><rect x="6" y="12" width="4" height="1" fill="#000"/><rect x="0" y="13" width="1" height="1" fill="#000"/><rect x="1" y="13" width="1" height="1" fill="#ffff00"/><rect x="2" y="13" width="1" height="1" fill="#ffff00"/><rect x="3" y="13" width="1" height="1" fill="#ffff00"/><rect x="4" y="13" width="1" height="1" fill="#ffff00"/><rect x="5" y="13" width="1" height="1" fill="#ff0000"/><rect x="6" y="13" width="1" height="1" fill="#ffff00"/><rect x="7" y="13" width="1" height="1" fill="#ffff00"/><rect x="8" y="13" width="1" height="1" fill="#ffff00"/><rect x="9" y="13" width="1" height="1" fill="#000"/><rect x="0" y="14" width="1" height="1" fill="#000"/><rect x="1" y="14" width="1" height="1" fill="#ffffff"/><rect x="2" y="14" width="1" height="1" fill="#ffff00"/><rect x="3" y="14" width="1" height="1" fill="#ffffff"/><rect x="4" y="14" width="1" height="1" fill="#ffff00"/><rect x="5" y="14" width="1" height="1" fill="#ffffff"/><rect x="6" y="14" width="1" height="1" fill="#ffff00"/><rect x="7" y="14" width="1" height="1" fill="#ffffff"/><rect x="8" y="14" width="1" height="1" fill="#ffff00"/><rect x="9" y="14" width="7" height="1" fill="#000"/><rect x="0" y="15" width="1" height="1" fill="#000"/><rect x="1" y="15" width="1" height="1" fill="#ffff00"/><rect x="2" y="15" width="1" height="1" fill="#ffff00"/><rect x="3" y="15" width="1" height="1" fill="#ffff00"/><rect x="4" y="15" width="1" height="1" fill="#000"/><rect x="5" y="15" width="9" height="1" fill="#8a8020"/><rect x="14" y="15" width="1" height="1" fill="#000"/><rect x="0" y="16" width="1" height="1" fill="#000"/><rect x="1" y="16" width="1" height="1" fill="#ffffff"/><rect x="2" y="16" width="1" height="1" fill="#ffff00"/><rect x="3" y="16" width="1" height="1" fill="#000"/><rect x="4" y="16" width="9" height="1" fill="#8a8020"/><rect x="13" y="16" width="1" height="1" fill="#000"/><rect x="0" y="17" width="1" height="1" fill="#000"/><rect x="1" y="17" width="1" height="1" fill="#ffff00"/><rect x="2" y="17" width="1" height="1" fill="#000"/><rect x="3" y="17" width="9" height="1" fill="#8a8020"/><rect x="12" y="17" width="1" height="1" fill="#000"/><rect x="0" y="18" width="2" height="1" fill="#000"/><rect x="2" y="18" width="9" height="1" fill="#8a8020"/><rect x="11" y="18" width="1" height="1" fill="#000"/><rect x="0" y="19" width="1" height="1" fill="#000"/><rect x="1" y="19" width="9" height="1" fill="#8a8020"/><rect x="10" y="19" width="1" height="1" fill="#000"/><rect x="0" y="20" width="10" height="1" fill="#000"/></svg>
<div class="a" style="left:407px;top:258px;width:28px;height:28px;background:#d8f8d0;border:1px solid #c8c8c8;"></div>
<div class="a" style="left:409px;top:260px;width:24px;height:24px;background:linear-gradient(160deg,#f8d0c0 0%,#e89878 22%,#dc7050 38%,#c02010 46%,#b4000e 52%,#b0000c 100%);border-radius:2px;"></div>
<svg class="a" style="left:409px;top:260px;" width="24" height="24" viewBox="0 0 24 24"><circle cx="12" cy="6.3" r="2" fill="#fff"/><path d="M9.6 10.2h3.8v8h2.4v1.3h-7v-1.3h2.1v-6.7h-1.3z" fill="#fff"/></svg>
<div class="t " style="left:446px;top:266.67px;font-size:12.2px;font-weight:bold;color:#000;transform:scaleX(0.9639);transform-origin:0 0;">Standardbelegungen (*) für:</div>
<div class="t " style="left:607.5px;top:266.67px;font-size:12.2px;font-weight:normal;color:#000;transform:scaleX(1.0101);transform-origin:0 0;">besLL:</div>
<div class="t " style="left:649px;top:266.67px;font-size:12.2px;font-weight:bold;color:#8b1010;transform:scaleX(0.9895);transform-origin:0 0;">Sem 1&amp;2</div>
<div class="t " style="left:704px;top:266.67px;font-size:12.2px;font-weight:normal;color:#000;">|</div>
<div class="t " style="left:710px;top:266.67px;font-size:12.2px;font-weight:normal;color:#000;transform:scaleX(1.0175);transform-origin:0 0;">Gemeinsch&#x27;Kunde:</div>
<div class="t " style="left:818px;top:266.67px;font-size:12.2px;font-weight:bold;color:#8b1010;transform:scaleX(0.9895);transform-origin:0 0;">Sem 1&amp;4</div>
<div class="t " style="left:873px;top:266.67px;font-size:12.2px;font-weight:normal;color:#000;">|</div>
<div class="t " style="left:878.5px;top:266.67px;font-size:12.2px;font-weight:normal;color:#000;transform:scaleX(1.0127);transform-origin:0 0;">Geographie:</div>
<div class="a" style="left:950px;top:262px;width:48px;height:22px;overflow:hidden;">
<div class="t " style="left:0px;top:4.67px;font-size:12.2px;font-weight:bold;color:#8b1010;transform:scaleX(0.9895);transform-origin:0 0;">Sem 2&amp;3</div>
</div>
<div class="t " style="left:1000.5px;top:266.67px;font-size:12.2px;font-weight:normal;color:#666;">|</div>
<svg class="a" style="left:1006px;top:270px;" width="9" height="9" viewBox="0 0 9 9"><path d="M0.5 8.5V0.5H8.5" fill="none" stroke="#a8b0cc"/><rect x="1" y="1" width="7.5" height="7.5" fill="#e4e8f0"/><path d="M1.8 4.3L3.6 7.6L7.8 0.8" fill="none" stroke="#34488e" stroke-width="1.9"/></svg>
<svg class="a" style="left:1006px;top:287px;" width="9" height="9" viewBox="0 0 9 9"><path d="M0.5 8.5V0.5H8.5" fill="none" stroke="#a8b0cc"/><rect x="1" y="1" width="7.5" height="7.5" fill="#e4e8f0"/><path d="M1.8 4.3L3.6 7.6L7.8 0.8" fill="none" stroke="#34488e" stroke-width="1.9"/></svg>
<div class="t " style="left:1020px;top:268.67px;font-size:12.2px;font-weight:normal;color:#000;transform:scaleX(1.0008);transform-origin:0 0;">Farben für Aufgabenfelder verwenden</div>
<div class="t " style="left:1020px;top:285.67px;font-size:12.2px;font-weight:normal;color:#000;transform:scaleX(1.0135);transform-origin:0 0;">Zusatzhinweise unter Cursor anzeigen</div>
<div class="t " style="left:36px;top:325.46px;font-size:16px;font-weight:bold;color:#000;transform:scaleX(1.0106);transform-origin:0 0;">Prüfungsfächer</div>
<div class="t" style="left:295px;width:64px;text-align:center;top:325.46px;font-size:16px;font-weight:bold;color:#000;transform:scaleX(1.0080);transform-origin:50% 0;">AF</div>
<div class="a" style="left:29px;top:344px;width:331px;height:1px;background:#808080;"></div>
<div class="a" style="left:295px;top:321px;width:1px;height:24px;background:#808080;"></div>
<div class="a" style="left:359px;top:321px;width:1px;height:24px;background:#808080;"></div>
<div class="a" style="left:93px;top:345px;width:267px;height:23px;background:#adf0c6;"></div>
<div class="a" style="left:295px;top:345px;width:1px;height:24px;background:#c8c8c8;"></div>
<div class="a" style="left:359px;top:345px;width:1px;height:24px;background:#c8c8c8;"></div>
<div class="a" style="left:29px;top:368px;width:64px;height:1px;background:#808080;"></div>
<div class="a" style="left:93px;top:368px;width:267px;height:1px;background:#c8c8c8;"></div>
<div class="t " style="left:36px;top:349.53px;font-size:16.5px;font-weight:bold;color:#000;transform:scaleX(0.9000);transform-origin:0 0;">L1</div>
<div class="t " style="left:96px;top:352.00px;font-size:13px;font-weight:normal;color:#000;">Mathematik</div>
<svg class="a" style="left:315px;top:354px;" width="40" height="10" viewBox="0 0 40 10"><rect x="0.0" y="0" width="7" height="1.3" fill="#000"/><rect x="3.0" y="1" width="1" height="7.5" fill="#000"/><rect x="0.0" y="7.7" width="7" height="1.3" fill="#000"/><rect x="10.0" y="0" width="7" height="1.3" fill="#000"/><rect x="13.0" y="1" width="1" height="7.5" fill="#000"/><rect x="10.0" y="7.7" width="7" height="1.3" fill="#000"/><rect x="20.0" y="0" width="7" height="1.3" fill="#000"/><rect x="23.0" y="1" width="1" height="7.5" fill="#000"/><rect x="20.0" y="7.7" width="7" height="1.3" fill="#000"/></svg>
<div class="a" style="left:93px;top:369px;width:267px;height:23px;background:#adf0c6;"></div>
<div class="a" style="left:295px;top:369px;width:1px;height:24px;background:#c8c8c8;"></div>
<div class="a" style="left:359px;top:369px;width:1px;height:24px;background:#c8c8c8;"></div>
<div class="a" style="left:29px;top:392px;width:64px;height:1px;background:#808080;"></div>
<div class="a" style="left:93px;top:392px;width:267px;height:1px;background:#c8c8c8;"></div>
<div class="t " style="left:36px;top:373.53px;font-size:16.5px;font-weight:bold;color:#000;transform:scaleX(0.9000);transform-origin:0 0;">L2</div>
<div class="t " style="left:96px;top:376.00px;font-size:13px;font-weight:normal;color:#000;">Physik</div>
<svg class="a" style="left:315px;top:378px;" width="40" height="10" viewBox="0 0 40 10"><rect x="0.0" y="0" width="7" height="1.3" fill="#000"/><rect x="3.0" y="1" width="1" height="7.5" fill="#000"/><rect x="0.0" y="7.7" width="7" height="1.3" fill="#000"/><rect x="10.0" y="0" width="7" height="1.3" fill="#000"/><rect x="13.0" y="1" width="1" height="7.5" fill="#000"/><rect x="10.0" y="7.7" width="7" height="1.3" fill="#000"/><rect x="20.0" y="0" width="7" height="1.3" fill="#000"/><rect x="23.0" y="1" width="1" height="7.5" fill="#000"/><rect x="20.0" y="7.7" width="7" height="1.3" fill="#000"/></svg>
<div class="a" style="left:93px;top:393px;width:267px;height:23px;background:#f08a8a;"></div>
<div class="a" style="left:295px;top:393px;width:1px;height:24px;background:#c8c8c8;"></div>
<div class="a" style="left:359px;top:393px;width:1px;height:24px;background:#c8c8c8;"></div>
<div class="a" style="left:29px;top:416px;width:64px;height:1px;background:#808080;"></div>
<div class="a" style="left:93px;top:416px;width:267px;height:1px;background:#c8c8c8;"></div>
<div class="t " style="left:36px;top:397.53px;font-size:16.5px;font-weight:bold;color:#000;transform:scaleX(0.9000);transform-origin:0 0;">L3</div>
<div class="t " style="left:96px;top:400.00px;font-size:13px;font-weight:normal;color:#000;">Wirtschaft</div>
<svg class="a" style="left:320px;top:402px;" width="40" height="10" viewBox="0 0 40 10"><rect x="0.0" y="0" width="7" height="1.3" fill="#000"/><rect x="3.0" y="1" width="1" height="7.5" fill="#000"/><rect x="0.0" y="7.7" width="7" height="1.3" fill="#000"/><rect x="10.0" y="0" width="7" height="1.3" fill="#000"/><rect x="13.0" y="1" width="1" height="7.5" fill="#000"/><rect x="10.0" y="7.7" width="7" height="1.3" fill="#000"/></svg>
<div class="a" style="left:93px;top:417px;width:267px;height:23px;background:#ffff4a;"></div>
<div class="a" style="left:295px;top:417px;width:1px;height:24px;background:#c8c8c8;"></div>
<div class="a" style="left:359px;top:417px;width:1px;height:24px;background:#c8c8c8;"></div>
<div class="a" style="left:29px;top:440px;width:64px;height:1px;background:#808080;"></div>
<div class="a" style="left:93px;top:440px;width:267px;height:1px;background:#c8c8c8;"></div>
<div class="t " style="left:36px;top:421.53px;font-size:16.5px;font-weight:bold;color:#000;transform:scaleX(0.9000);transform-origin:0 0;">m1</div>
<div class="t " style="left:96px;top:424.00px;font-size:13px;font-weight:normal;color:#000;">Deutsch</div>
<svg class="a" style="left:325px;top:426px;" width="40" height="10" viewBox="0 0 40 10"><rect x="0.0" y="0" width="7" height="1.3" fill="#000"/><rect x="3.0" y="1" width="1" height="7.5" fill="#000"/><rect x="0.0" y="7.7" width="7" height="1.3" fill="#000"/></svg>
<div class="a" style="left:93px;top:441px;width:267px;height:23px;background:#f08a8a;"></div>
<div class="a" style="left:295px;top:441px;width:1px;height:24px;background:#c8c8c8;"></div>
<div class="a" style="left:359px;top:441px;width:1px;height:24px;background:#c8c8c8;"></div>
<div class="a" style="left:29px;top:464px;width:64px;height:1px;background:#808080;"></div>
<div class="a" style="left:93px;top:464px;width:267px;height:1px;background:#c8c8c8;"></div>
<div class="t " style="left:36px;top:445.53px;font-size:16.5px;font-weight:bold;color:#000;transform:scaleX(0.9000);transform-origin:0 0;">m2</div>
<div class="t " style="left:96px;top:448.00px;font-size:13px;font-weight:normal;color:#000;">bes. Lernleistung</div>
<svg class="a" style="left:320px;top:450px;" width="40" height="10" viewBox="0 0 40 10"><rect x="0.0" y="0" width="7" height="1.3" fill="#000"/><rect x="3.0" y="1" width="1" height="7.5" fill="#000"/><rect x="0.0" y="7.7" width="7" height="1.3" fill="#000"/><rect x="10.0" y="0" width="7" height="1.3" fill="#000"/><rect x="13.0" y="1" width="1" height="7.5" fill="#000"/><rect x="10.0" y="7.7" width="7" height="1.3" fill="#000"/></svg>
<div class="a" style="left:92px;top:345px;width:1px;height:120px;background:#808080;"></div>
<div class="a" style="left:29px;top:464px;width:331px;height:1px;background:#808080;"></div>
<div class="t " style="left:432.5px;top:331.33px;font-size:12.6px;font-weight:normal;color:#000;transform:scaleX(1.0018);transform-origin:0 0;">nw | E-F | evR</div>
<div class="a" style="left:372px;top:362px;width:200px;height:69px;border:1px solid #dcdcdc;"></div>
<div class="a" style="left:380px;top:358px;width:72px;height:8px;background:#fff;"></div>
<div class="t " style="left:382px;top:356.67px;font-size:12.2px;font-weight:normal;color:#000;transform:scaleX(0.9928);transform-origin:0 0;">Anzeigeform</div>
<svg class="a" style="left:380px;top:374px;" width="12" height="12" viewBox="0 0 12 12"><defs><radialGradient id="rg374" cx="0.5" cy="0.6" r="0.6"><stop offset="0" stop-color="#ffffff"/><stop offset="0.6" stop-color="#e8f4fa"/><stop offset="1" stop-color="#c8d0d8"/></radialGradient></defs><circle cx="6" cy="6" r="5.5" fill="#fff" stroke="#8a80a0" stroke-width="0.9"/><circle cx="6" cy="6" r="4.2" fill="url(#rg374)"/></svg>
<svg class="a" style="left:380px;top:393px;" width="12" height="12" viewBox="0 0 12 12"><defs><radialGradient id="rg393" cx="0.5" cy="0.6" r="0.6"><stop offset="0" stop-color="#ffffff"/><stop offset="0.6" stop-color="#e8f4fa"/><stop offset="1" stop-color="#c8d0d8"/></radialGradient></defs><circle cx="6" cy="6" r="5.5" fill="#fff" stroke="#8a80a0" stroke-width="0.9"/><circle cx="6" cy="6" r="4.2" fill="url(#rg393)"/><circle cx="6" cy="6" r="3.4" fill="#0a2e4e"/><circle cx="6" cy="6.2" r="2.2" fill="#18a8f0"/><circle cx="5.4" cy="5.3" r="0.9" fill="#a8e8ff"/></svg>
<svg class="a" style="left:380px;top:412px;" width="12" height="12" viewBox="0 0 12 12"><defs><radialGradient id="rg412" cx="0.5" cy="0.6" r="0.6"><stop offset="0" stop-color="#ffffff"/><stop offset="0.6" stop-color="#e8f4fa"/><stop offset="1" stop-color="#c8d0d8"/></radialGradient></defs><circle cx="6" cy="6" r="5.5" fill="#fff" stroke="#8a80a0" stroke-width="0.9"/><circle cx="6" cy="6" r="4.2" fill="url(#rg412)"/></svg>
<div class="t " style="left:398px;top:375.67px;font-size:12.2px;font-weight:normal;color:#000;transform:scaleX(0.9805);transform-origin:0 0;">Standard : x</div>
<div class="t " style="left:398px;top:394.67px;font-size:12.2px;font-weight:normal;color:#000;transform:scaleX(1.0066);transform-origin:0 0;">Wochenstunden: [..]</div>
<div class="t " style="left:398px;top:413.67px;font-size:12.2px;font-weight:normal;color:#000;transform:scaleX(1.0195);transform-origin:0 0;">Parallelkurse: (..)</div>
<div class="a" style="left:582px;top:317px;width:398px;height:114px;background:#f08a8a;"></div>
<div class="a" style="left:582px;top:324px;width:398px;height:107px;border:1px solid #6a6080;border-left:none;"></div>
<div class="a" style="left:586px;top:319px;width:240px;height:10px;background:#f08a8a;"></div>
<div class="t " style="left:591px;top:319.67px;font-size:12.2px;font-weight:normal;color:#000;transform:scaleX(1.0029);transform-origin:0 0;">Besondere Lernleistung (AF - Art - Thema)</div>
<div class="a" style="left:584px;top:336px;width:260px;height:23px;background:#fff;border:1px solid #6f6f6f;"></div>
<div class="t " style="left:589.5px;top:340.33px;font-size:12.6px;font-weight:normal;color:#000;transform:scaleX(0.9878);transform-origin:0 0;">gesellschaftsw. Aufgabenfeld (II)</div>
<svg class="a" style="left:831px;top:346px;" width="9" height="6" viewBox="0 0 9 6"><path d="M0.5 0.5 L4.5 4.5 L8.5 0.5" fill="none" stroke="#505050" stroke-width="1"/></svg>
<div class="a" style="left:584px;top:370px;width:390px;height:24px;background:#fff;border:1px solid #6f6f6f;"></div>
<div class="t " style="left:589.5px;top:375.33px;font-size:12.6px;font-weight:normal;color:#000;transform:scaleX(0.9898);transform-origin:0 0;">Seminarkurs</div>
<svg class="a" style="left:961px;top:380px;" width="9" height="6" viewBox="0 0 9 6"><path d="M0.5 0.5 L4.5 4.5 L8.5 0.5" fill="none" stroke="#505050" stroke-width="1"/></svg>
<div class="a" style="left:584px;top:399px;width:390px;height:24px;background:#fff;border:1px solid #6f6f6f;"></div>
<div class="t " style="left:589.5px;top:404.13px;font-size:12.6px;font-weight:normal;color:#000;transform:scaleX(0.9493);transform-origin:0 0;">- offen -</div>
<svg class="a" style="left:961px;top:409px;" width="9" height="6" viewBox="0 0 9 6"><path d="M0.5 0.5 L4.5 4.5 L8.5 0.5" fill="none" stroke="#505050" stroke-width="1"/></svg>
<div class="a" style="left:139px;top:507px;width:39px;height:19px;background:#ffff50;"></div>
<div class="a" style="left:139px;top:667px;width:39px;height:19px;background:#ffff50;"></div>
<div class="a" style="left:179px;top:507px;width:39px;height:19px;background:#ffff50;"></div>
<div class="a" style="left:179px;top:667px;width:39px;height:19px;background:#ffff50;"></div>
<div class="a" style="left:219px;top:507px;width:39px;height:19px;background:#ffff50;"></div>
<div class="a" style="left:219px;top:667px;width:39px;height:19px;background:#ffff50;"></div>
<div class="a" style="left:259px;top:507px;width:39px;height:19px;background:#ffff50;"></div>
<div class="a" style="left:259px;top:667px;width:39px;height:19px;background:#ffff50;"></div>
<div class="a" style="left:299px;top:507px;width:39px;height:19px;background:#ffff50;"></div>
<div class="a" style="left:299px;top:667px;width:39px;height:19px;background:#ffff50;"></div>
<div class="a" style="left:339px;top:507px;width:39px;height:19px;background:#ffff50;"></div>
<div class="a" style="left:339px;top:667px;width:39px;height:19px;background:#ffff50;"></div>
<div class="a" style="left:379px;top:507px;width:39px;height:19px;background:#f08a8a;"></div>
<div class="a" style="left:379px;top:667px;width:39px;height:19px;background:#f08a8a;"></div>
<div class="a" style="left:419px;top:507px;width:39px;height:19px;background:#f08a8a;"></div>
<div class="a" style="left:419px;top:667px;width:39px;height:19px;background:#f08a8a;"></div>
<div class="a" style="left:459px;top:507px;width:39px;height:19px;background:#f08a8a;"></div>
<div class="a" style="left:459px;top:667px;width:39px;height:19px;background:#f08a8a;"></div>
<div class="a" style="left:499px;top:507px;width:39px;height:19px;background:#f08a8a;"></div>
<div class="a" style="left:499px;top:667px;width:39px;height:19px;background:#f08a8a;"></div>
<div class="a" style="left:539px;top:507px;width:39px;height:19px;background:#f08a8a;"></div>
<div class="a" style="left:539px;top:667px;width:39px;height:19px;background:#f08a8a;"></div>
<div class="a" style="left:579px;top:507px;width:39px;height:19px;background:#f08a8a;"></div>
<div class="a" style="left:579px;top:667px;width:39px;height:19px;background:#f08a8a;"></div>
<div class="a" style="left:619px;top:507px;width:39px;height:19px;background:#adf0c6;"></div>
<div class="a" style="left:619px;top:667px;width:39px;height:19px;background:#adf0c6;"></div>
<div class="a" style="left:659px;top:507px;width:39px;height:19px;background:#adf0c6;"></div>
<div class="a" style="left:659px;top:667px;width:39px;height:19px;background:#adf0c6;"></div>
<div class="a" style="left:699px;top:507px;width:39px;height:19px;background:#adf0c6;"></div>
<div class="a" style="left:699px;top:667px;width:39px;height:19px;background:#adf0c6;"></div>
<div class="a" style="left:739px;top:507px;width:39px;height:19px;background:#adf0c6;"></div>
<div class="a" style="left:739px;top:667px;width:39px;height:19px;background:#adf0c6;"></div>
<div class="a" style="left:779px;top:507px;width:39px;height:19px;background:#93c5c5;"></div>
<div class="a" style="left:779px;top:667px;width:39px;height:19px;background:#93c5c5;"></div>
<div class="a" style="left:819px;top:507px;width:39px;height:19px;background:#ffff50;"></div>
<div class="a" style="left:819px;top:667px;width:39px;height:19px;background:#ffff50;"></div>
<div class="a" style="left:859px;top:507px;width:39px;height:19px;background:#f08a8a;"></div>
<div class="a" style="left:859px;top:667px;width:39px;height:19px;background:#f08a8a;"></div>
<div class="a" style="left:899px;top:507px;width:39px;height:19px;background:#adf0c6;"></div>
<div class="a" style="left:899px;top:667px;width:39px;height:19px;background:#adf0c6;"></div>
<div class="a" style="left:939px;top:507px;width:39px;height:19px;background:#adf0c6;"></div>
<div class="a" style="left:939px;top:667px;width:39px;height:19px;background:#adf0c6;"></div>
<div class="a" style="left:979px;top:507px;width:39px;height:19px;background:#adf0c6;"></div>
<div class="a" style="left:979px;top:667px;width:39px;height:19px;background:#adf0c6;"></div>
<div class="a" style="left:1019px;top:507px;width:39px;height:19px;background:#adf0c6;"></div>
<div class="a" style="left:1019px;top:667px;width:39px;height:19px;background:#adf0c6;"></div>
<div class="a" style="left:1059px;top:507px;width:39px;height:19px;background:#adf0c6;"></div>
<div class="a" style="left:1059px;top:667px;width:39px;height:19px;background:#adf0c6;"></div>
<div class="a" style="left:1099px;top:507px;width:39px;height:19px;background:#ff8a4a;"></div>
<div class="a" style="left:1099px;top:667px;width:39px;height:19px;background:#ff8a4a;"></div>
<div class="a" style="left:138px;top:687px;width:1000px;height:20px;background:#ffff00;"></div>
<div class="a" style="left:138px;top:707px;width:1000px;height:20px;background:#ffff00;"></div>
<div class="a" style="left:138px;top:727px;width:1000px;height:20px;background:#ffff00;"></div>
<div class="a" style="left:138px;top:747px;width:40px;height:20px;background:#ffff50;"></div>
<div class="a" style="left:178px;top:747px;width:40px;height:20px;background:#ffff50;"></div>
<div class="a" style="left:298px;top:747px;width:40px;height:20px;background:#ffff50;"></div>
<div class="a" style="left:378px;top:747px;width:40px;height:20px;background:#f08a8a;"></div>
<div class="a" style="left:418px;top:747px;width:40px;height:20px;background:#f08a8a;"></div>
<div class="a" style="left:458px;top:747px;width:40px;height:20px;background:#f08a8a;"></div>
<div class="a" style="left:498px;top:747px;width:40px;height:20px;background:#f08a8a;"></div>
<div class="a" style="left:538px;top:747px;width:40px;height:20px;background:#f08a8a;"></div>
<div class="a" style="left:618px;top:747px;width:40px;height:20px;background:#adf0c6;"></div>
<div class="a" style="left:658px;top:747px;width:40px;height:20px;background:#adf0c6;"></div>
<div class="a" style="left:698px;top:747px;width:40px;height:20px;background:#adf0c6;"></div>
<div class="a" style="left:778px;top:747px;width:40px;height:20px;background:#93c5c5;"></div>
<div class="a" style="left:1098px;top:747px;width:40px;height:20px;background:#ff8a4a;"></div>
<div class="a" style="left:138px;top:767px;width:40px;height:20px;background:#ffff50;"></div>
<div class="a" style="left:178px;top:767px;width:40px;height:20px;background:#ffff50;"></div>
<div class="a" style="left:298px;top:767px;width:40px;height:20px;background:#ffff50;"></div>
<div class="a" style="left:378px;top:767px;width:40px;height:20px;background:#f08a8a;"></div>
<div class="a" style="left:418px;top:767px;width:40px;height:20px;background:#f08a8a;"></div>
<div class="a" style="left:458px;top:767px;width:40px;height:20px;background:#f08a8a;"></div>
<div class="a" style="left:498px;top:767px;width:40px;height:20px;background:#f08a8a;"></div>
<div class="a" style="left:538px;top:767px;width:40px;height:20px;background:#f08a8a;"></div>
<div class="a" style="left:618px;top:767px;width:40px;height:20px;background:#adf0c6;"></div>
<div class="a" style="left:658px;top:767px;width:40px;height:20px;background:#adf0c6;"></div>
<div class="a" style="left:698px;top:767px;width:40px;height:20px;background:#adf0c6;"></div>
<div class="a" style="left:778px;top:767px;width:40px;height:20px;background:#93c5c5;"></div>
<div class="a" style="left:1098px;top:767px;width:40px;height:20px;background:#ff8a4a;"></div>
<div class="a" style="left:138px;top:787px;width:40px;height:20px;background:#ffff50;"></div>
<div class="a" style="left:178px;top:787px;width:40px;height:20px;background:#ffff50;"></div>
<div class="a" style="left:298px;top:787px;width:40px;height:20px;background:#ffff50;"></div>
<div class="a" style="left:378px;top:787px;width:40px;height:20px;background:#f08a8a;"></div>
<div class="a" style="left:418px;top:787px;width:40px;height:20px;background:#f08a8a;"></div>
<div class="a" style="left:458px;top:787px;width:40px;height:20px;background:#f08a8a;"></div>
<div class="a" style="left:498px;top:787px;width:40px;height:20px;background:#f08a8a;"></div>
<div class="a" style="left:538px;top:787px;width:40px;height:20px;background:#f08a8a;"></div>
<div class="a" style="left:618px;top:787px;width:40px;height:20px;background:#adf0c6;"></div>
<div class="a" style="left:658px;top:787px;width:40px;height:20px;background:#adf0c6;"></div>
<div class="a" style="left:698px;top:787px;width:40px;height:20px;background:#adf0c6;"></div>
<div class="a" style="left:778px;top:787px;width:40px;height:20px;background:#93c5c5;"></div>
<div class="a" style="left:1098px;top:787px;width:40px;height:20px;background:#ff8a4a;"></div>
<div class="a" style="left:138px;top:807px;width:40px;height:20px;background:#ffff50;"></div>
<div class="a" style="left:178px;top:807px;width:40px;height:20px;background:#ffff50;"></div>
<div class="a" style="left:298px;top:807px;width:40px;height:20px;background:#ffff50;"></div>
<div class="a" style="left:378px;top:807px;width:40px;height:20px;background:#f08a8a;"></div>
<div class="a" style="left:418px;top:807px;width:40px;height:20px;background:#f08a8a;"></div>
<div class="a" style="left:458px;top:807px;width:40px;height:20px;background:#f08a8a;"></div>
<div class="a" style="left:498px;top:807px;width:40px;height:20px;background:#f08a8a;"></div>
<div class="a" style="left:538px;top:807px;width:40px;height:20px;background:#f08a8a;"></div>
<div class="a" style="left:618px;top:807px;width:40px;height:20px;background:#adf0c6;"></div>
<div class="a" style="left:658px;top:807px;width:40px;height:20px;background:#adf0c6;"></div>
<div class="a" style="left:698px;top:807px;width:40px;height:20px;background:#adf0c6;"></div>
<div class="a" style="left:778px;top:807px;width:40px;height:20px;background:#93c5c5;"></div>
<div class="a" style="left:1098px;top:807px;width:40px;height:20px;background:#ff8a4a;"></div>
<div class="a" style="left:29px;top:526px;width:1109px;height:1px;background:#808080;"></div>
<div class="a" style="left:29px;top:546px;width:1109px;height:1px;background:#808080;"></div>
<div class="a" style="left:29px;top:566px;width:1109px;height:1px;background:#808080;"></div>
<div class="a" style="left:29px;top:586px;width:1109px;height:1px;background:#808080;"></div>
<div class="a" style="left:29px;top:606px;width:1109px;height:1px;background:#808080;"></div>
<div class="a" style="left:29px;top:626px;width:1109px;height:1px;background:#808080;"></div>
<div class="a" style="left:29px;top:646px;width:1109px;height:1px;background:#808080;"></div>
<div class="a" style="left:29px;top:666px;width:1109px;height:1px;background:#808080;"></div>
<div class="a" style="left:29px;top:686px;width:1109px;height:1px;background:#808080;"></div>
<div class="a" style="left:29px;top:706px;width:109px;height:1px;background:#808080;"></div>
<div class="a" style="left:138px;top:706px;width:1000px;height:1px;background:#c8c8c8;"></div>
<div class="a" style="left:29px;top:726px;width:109px;height:1px;background:#808080;"></div>
<div class="a" style="left:138px;top:726px;width:1000px;height:1px;background:#c8c8c8;"></div>
<div class="a" style="left:29px;top:746px;width:109px;height:1px;background:#808080;"></div>
<div class="a" style="left:138px;top:746px;width:1000px;height:1px;background:#c8c8c8;"></div>
<div class="a" style="left:29px;top:766px;width:109px;height:1px;background:#808080;"></div>
<div class="a" style="left:138px;top:766px;width:1000px;height:1px;background:#c8c8c8;"></div>
<div class="a" style="left:29px;top:786px;width:109px;height:1px;background:#808080;"></div>
<div class="a" style="left:138px;top:786px;width:1000px;height:1px;background:#c8c8c8;"></div>
<div class="a" style="left:29px;top:806px;width:109px;height:1px;background:#808080;"></div>
<div class="a" style="left:138px;top:806px;width:1000px;height:1px;background:#c8c8c8;"></div>
<div class="a" style="left:29px;top:826px;width:109px;height:1px;background:#808080;"></div>
<div class="a" style="left:138px;top:826px;width:1000px;height:1px;background:#c8c8c8;"></div>
<div class="a" style="left:83px;top:507px;width:1px;height:320px;background:#808080;"></div>
<div class="a" style="left:138px;top:507px;width:1px;height:180px;background:#808080;"></div>
<div class="a" style="left:138px;top:687px;width:1px;height:140px;background:#808080;"></div>
<div class="a" style="left:178px;top:507px;width:1px;height:180px;background:#808080;"></div>
<div class="a" style="left:178px;top:687px;width:1px;height:140px;background:#c8c8c8;"></div>
<div class="a" style="left:218px;top:507px;width:1px;height:180px;background:#808080;"></div>
<div class="a" style="left:218px;top:687px;width:1px;height:140px;background:#c8c8c8;"></div>
<div class="a" style="left:258px;top:507px;width:1px;height:180px;background:#808080;"></div>
<div class="a" style="left:258px;top:687px;width:1px;height:140px;background:#c8c8c8;"></div>
<div class="a" style="left:298px;top:507px;width:1px;height:180px;background:#808080;"></div>
<div class="a" style="left:298px;top:687px;width:1px;height:140px;background:#c8c8c8;"></div>
<div class="a" style="left:338px;top:507px;width:1px;height:180px;background:#808080;"></div>
<div class="a" style="left:338px;top:687px;width:1px;height:140px;background:#c8c8c8;"></div>
<div class="a" style="left:378px;top:507px;width:1px;height:180px;background:#808080;"></div>
<div class="a" style="left:378px;top:687px;width:1px;height:140px;background:#c8c8c8;"></div>
<div class="a" style="left:418px;top:507px;width:1px;height:180px;background:#808080;"></div>
<div class="a" style="left:418px;top:687px;width:1px;height:140px;background:#c8c8c8;"></div>
<div class="a" style="left:458px;top:507px;width:1px;height:180px;background:#808080;"></div>
<div class="a" style="left:458px;top:687px;width:1px;height:140px;background:#c8c8c8;"></div>
<div class="a" style="left:498px;top:507px;width:1px;height:180px;background:#808080;"></div>
<div class="a" style="left:498px;top:687px;width:1px;height:140px;background:#c8c8c8;"></div>
<div class="a" style="left:538px;top:507px;width:1px;height:180px;background:#808080;"></div>
<div class="a" style="left:538px;top:687px;width:1px;height:140px;background:#c8c8c8;"></div>
<div class="a" style="left:578px;top:507px;width:1px;height:180px;background:#808080;"></div>
<div class="a" style="left:578px;top:687px;width:1px;height:140px;background:#c8c8c8;"></div>
<div class="a" style="left:618px;top:507px;width:1px;height:180px;background:#808080;"></div>
<div class="a" style="left:618px;top:687px;width:1px;height:140px;background:#c8c8c8;"></div>
<div class="a" style="left:658px;top:507px;width:1px;height:180px;background:#808080;"></div>
<div class="a" style="left:658px;top:687px;width:1px;height:140px;background:#c8c8c8;"></div>
<div class="a" style="left:698px;top:507px;width:1px;height:180px;background:#808080;"></div>
<div class="a" style="left:698px;top:687px;width:1px;height:140px;background:#c8c8c8;"></div>
<div class="a" style="left:738px;top:507px;width:1px;height:180px;background:#808080;"></div>
<div class="a" style="left:738px;top:687px;width:1px;height:140px;background:#c8c8c8;"></div>
<div class="a" style="left:778px;top:507px;width:1px;height:180px;background:#808080;"></div>
<div class="a" style="left:778px;top:687px;width:1px;height:140px;background:#c8c8c8;"></div>
<div class="a" style="left:818px;top:507px;width:1px;height:180px;background:#808080;"></div>
<div class="a" style="left:818px;top:687px;width:1px;height:140px;background:#c8c8c8;"></div>
<div class="a" style="left:858px;top:507px;width:1px;height:180px;background:#808080;"></div>
<div class="a" style="left:858px;top:687px;width:1px;height:140px;background:#c8c8c8;"></div>
<div class="a" style="left:898px;top:507px;width:1px;height:180px;background:#808080;"></div>
<div class="a" style="left:898px;top:687px;width:1px;height:140px;background:#c8c8c8;"></div>
<div class="a" style="left:938px;top:507px;width:1px;height:180px;background:#808080;"></div>
<div class="a" style="left:938px;top:687px;width:1px;height:140px;background:#c8c8c8;"></div>
<div class="a" style="left:978px;top:507px;width:1px;height:180px;background:#808080;"></div>
<div class="a" style="left:978px;top:687px;width:1px;height:140px;background:#c8c8c8;"></div>
<div class="a" style="left:1018px;top:507px;width:1px;height:180px;background:#808080;"></div>
<div class="a" style="left:1018px;top:687px;width:1px;height:140px;background:#c8c8c8;"></div>
<div class="a" style="left:1058px;top:507px;width:1px;height:180px;background:#808080;"></div>
<div class="a" style="left:1058px;top:687px;width:1px;height:140px;background:#c8c8c8;"></div>
<div class="a" style="left:1098px;top:507px;width:1px;height:180px;background:#808080;"></div>
<div class="a" style="left:1098px;top:687px;width:1px;height:140px;background:#c8c8c8;"></div>
<div class="t" style="left:179px;width:39px;text-align:center;top:531.69px;font-size:11px;font-weight:bold;color:#000;transform:scaleX(1.1618);transform-origin:50% 0;">4</div>
<div class="t" style="left:219px;width:39px;text-align:center;top:531.69px;font-size:11px;font-weight:bold;color:#000;transform:scaleX(1.1618);transform-origin:50% 0;">4</div>
<div class="t" style="left:259px;width:39px;text-align:center;top:531.69px;font-size:11px;font-weight:bold;color:#000;transform:scaleX(1.1618);transform-origin:50% 0;">4</div>
<div class="t" style="left:299px;width:39px;text-align:center;top:531.69px;font-size:11px;font-weight:bold;color:#000;transform:scaleX(1.1618);transform-origin:50% 0;">4</div>
<div class="t" style="left:339px;width:39px;text-align:center;top:531.69px;font-size:11px;font-weight:bold;color:#000;transform:scaleX(1.1618);transform-origin:50% 0;">4</div>
<div class="t" style="left:379px;width:39px;text-align:center;top:531.69px;font-size:11px;font-weight:bold;color:#000;transform:scaleX(1.1618);transform-origin:50% 0;">4</div>
<div class="t" style="left:419px;width:39px;text-align:center;top:531.69px;font-size:11px;font-weight:bold;color:#000;transform:scaleX(1.1199);transform-origin:50% 0;">*23</div>
<div class="t" style="left:459px;width:39px;text-align:center;top:531.69px;font-size:11px;font-weight:bold;color:#000;transform:scaleX(1.1199);transform-origin:50% 0;">*14</div>
<div class="t" style="left:539px;width:39px;text-align:center;top:531.69px;font-size:11px;font-weight:bold;color:#000;transform:scaleX(1.1618);transform-origin:50% 0;">4</div>
<div class="t" style="left:579px;width:39px;text-align:center;top:531.69px;font-size:11px;font-weight:bold;color:#000;transform:scaleX(1.1618);transform-origin:50% 0;">4</div>
<div class="t" style="left:699px;width:39px;text-align:center;top:531.69px;font-size:11px;font-weight:bold;color:#000;transform:scaleX(1.1618);transform-origin:50% 0;">4</div>
<div class="t" style="left:739px;width:39px;text-align:center;top:531.69px;font-size:11px;font-weight:bold;color:#000;transform:scaleX(1.1618);transform-origin:50% 0;">4</div>
<div class="t" style="left:779px;width:39px;text-align:center;top:531.69px;font-size:11px;font-weight:bold;color:#000;transform:scaleX(1.1618);transform-origin:50% 0;">4</div>
<div class="t" style="left:1019px;width:39px;text-align:center;top:531.69px;font-size:11px;font-weight:bold;color:#000;transform:scaleX(1.1618);transform-origin:50% 0;">4</div>
<div class="t" style="left:1059px;width:39px;text-align:center;top:531.69px;font-size:11px;font-weight:bold;color:#000;transform:scaleX(1.1618);transform-origin:50% 0;">4</div>
<div class="t" style="left:1099px;width:39px;text-align:center;top:531.69px;font-size:11px;font-weight:bold;color:#000;transform:scaleX(1.1199);transform-origin:50% 0;">*12</div>
<div class="t" style="left:179px;width:39px;text-align:center;top:551.69px;font-size:11px;font-weight:bold;color:#000;transform:scaleX(1.1618);transform-origin:50% 0;">12</div>
<div class="t" style="left:219px;width:39px;text-align:center;top:551.69px;font-size:11px;font-weight:bold;color:#000;transform:scaleX(1.1618);transform-origin:50% 0;">12</div>
<div class="t" style="left:259px;width:39px;text-align:center;top:551.69px;font-size:11px;font-weight:bold;color:#000;transform:scaleX(1.1618);transform-origin:50% 0;">12</div>
<div class="t" style="left:299px;width:39px;text-align:center;top:551.69px;font-size:11px;font-weight:bold;color:#000;transform:scaleX(1.1618);transform-origin:50% 0;">12</div>
<div class="t" style="left:339px;width:39px;text-align:center;top:551.69px;font-size:11px;font-weight:bold;color:#000;transform:scaleX(1.1618);transform-origin:50% 0;">12</div>
<div class="t" style="left:419px;width:39px;text-align:center;top:551.69px;font-size:11px;font-weight:bold;color:#000;transform:scaleX(1.1618);transform-origin:50% 0;">12</div>
<div class="t" style="left:459px;width:39px;text-align:center;top:551.69px;font-size:11px;font-weight:bold;color:#000;transform:scaleX(1.1618);transform-origin:50% 0;">12</div>
<div class="t" style="left:539px;width:39px;text-align:center;top:551.69px;font-size:11px;font-weight:bold;color:#000;transform:scaleX(1.1618);transform-origin:50% 0;">12</div>
<div class="t" style="left:579px;width:39px;text-align:center;top:551.69px;font-size:11px;font-weight:bold;color:#000;transform:scaleX(1.1618);transform-origin:50% 0;">12</div>
<div class="t" style="left:699px;width:39px;text-align:center;top:551.69px;font-size:11px;font-weight:bold;color:#000;transform:scaleX(1.1618);transform-origin:50% 0;">12</div>
<div class="t" style="left:739px;width:39px;text-align:center;top:551.69px;font-size:11px;font-weight:bold;color:#000;transform:scaleX(1.1618);transform-origin:50% 0;">12</div>
<div class="t" style="left:779px;width:39px;text-align:center;top:551.69px;font-size:11px;font-weight:bold;color:#000;transform:scaleX(1.1618);transform-origin:50% 0;">12</div>
<div class="t" style="left:819px;width:39px;text-align:center;top:551.69px;font-size:11px;font-weight:bold;color:#000;transform:scaleX(1.1618);transform-origin:50% 0;">12</div>
<div class="t" style="left:859px;width:39px;text-align:center;top:551.69px;font-size:11px;font-weight:bold;color:#000;transform:scaleX(1.1618);transform-origin:50% 0;">12</div>
<div class="t" style="left:899px;width:39px;text-align:center;top:551.69px;font-size:11px;font-weight:bold;color:#000;transform:scaleX(1.1618);transform-origin:50% 0;">12</div>
<div class="t" style="left:939px;width:39px;text-align:center;top:551.69px;font-size:11px;font-weight:bold;color:#000;transform:scaleX(1.1618);transform-origin:50% 0;">12</div>
<div class="t" style="left:979px;width:39px;text-align:center;top:551.69px;font-size:11px;font-weight:bold;color:#000;transform:scaleX(1.1618);transform-origin:50% 0;">12</div>
<div class="t" style="left:1019px;width:39px;text-align:center;top:551.69px;font-size:11px;font-weight:bold;color:#000;transform:scaleX(1.1618);transform-origin:50% 0;">12</div>
<div class="t" style="left:1059px;width:39px;text-align:center;top:551.69px;font-size:11px;font-weight:bold;color:#000;transform:scaleX(1.1618);transform-origin:50% 0;">12</div>
<div class="t" style="left:179px;width:39px;text-align:center;top:571.69px;font-size:11px;font-weight:bold;color:#000;transform:scaleX(1.1618);transform-origin:50% 0;">34</div>
<div class="t" style="left:219px;width:39px;text-align:center;top:571.69px;font-size:11px;font-weight:bold;color:#000;transform:scaleX(1.1618);transform-origin:50% 0;">34</div>
<div class="t" style="left:259px;width:39px;text-align:center;top:571.69px;font-size:11px;font-weight:bold;color:#000;transform:scaleX(1.1618);transform-origin:50% 0;">34</div>
<div class="t" style="left:299px;width:39px;text-align:center;top:571.69px;font-size:11px;font-weight:bold;color:#000;transform:scaleX(1.1618);transform-origin:50% 0;">34</div>
<div class="t" style="left:339px;width:39px;text-align:center;top:571.69px;font-size:11px;font-weight:bold;color:#000;transform:scaleX(1.1618);transform-origin:50% 0;">34</div>
<div class="t" style="left:419px;width:39px;text-align:center;top:571.69px;font-size:11px;font-weight:bold;color:#000;transform:scaleX(1.1618);transform-origin:50% 0;">34</div>
<div class="t" style="left:459px;width:39px;text-align:center;top:571.69px;font-size:11px;font-weight:bold;color:#000;transform:scaleX(1.1618);transform-origin:50% 0;">34</div>
<div class="t" style="left:539px;width:39px;text-align:center;top:571.69px;font-size:11px;font-weight:bold;color:#000;transform:scaleX(1.1618);transform-origin:50% 0;">34</div>
<div class="t" style="left:579px;width:39px;text-align:center;top:571.69px;font-size:11px;font-weight:bold;color:#000;transform:scaleX(1.1618);transform-origin:50% 0;">34</div>
<div class="t" style="left:699px;width:39px;text-align:center;top:571.69px;font-size:11px;font-weight:bold;color:#000;transform:scaleX(1.1618);transform-origin:50% 0;">34</div>
<div class="t" style="left:739px;width:39px;text-align:center;top:571.69px;font-size:11px;font-weight:bold;color:#000;transform:scaleX(1.1618);transform-origin:50% 0;">34</div>
<div class="t" style="left:779px;width:39px;text-align:center;top:571.69px;font-size:11px;font-weight:bold;color:#000;transform:scaleX(1.1618);transform-origin:50% 0;">34</div>
<div class="t" style="left:819px;width:39px;text-align:center;top:571.69px;font-size:11px;font-weight:bold;color:#000;transform:scaleX(1.1618);transform-origin:50% 0;">34</div>
<div class="t" style="left:859px;width:39px;text-align:center;top:571.69px;font-size:11px;font-weight:bold;color:#000;transform:scaleX(1.1618);transform-origin:50% 0;">34</div>
<div class="t" style="left:899px;width:39px;text-align:center;top:571.69px;font-size:11px;font-weight:bold;color:#000;transform:scaleX(1.1618);transform-origin:50% 0;">34</div>
<div class="t" style="left:939px;width:39px;text-align:center;top:571.69px;font-size:11px;font-weight:bold;color:#000;transform:scaleX(1.1618);transform-origin:50% 0;">34</div>
<div class="t" style="left:979px;width:39px;text-align:center;top:571.69px;font-size:11px;font-weight:bold;color:#000;transform:scaleX(1.1618);transform-origin:50% 0;">34</div>
<div class="t" style="left:1019px;width:39px;text-align:center;top:571.69px;font-size:11px;font-weight:bold;color:#000;transform:scaleX(1.1618);transform-origin:50% 0;">34</div>
<div class="t" style="left:1059px;width:39px;text-align:center;top:571.69px;font-size:11px;font-weight:bold;color:#000;transform:scaleX(1.1618);transform-origin:50% 0;">34</div>
<div class="t" style="left:1099px;width:39px;text-align:center;top:571.69px;font-size:11px;font-weight:bold;color:#000;transform:scaleX(1.1618);transform-origin:50% 0;">23</div>
<div class="t" style="left:419px;width:39px;text-align:center;top:591.69px;font-size:11px;font-weight:bold;color:#000;transform:scaleX(1.1618);transform-origin:50% 0;">13</div>
<div class="t" style="left:459px;width:39px;text-align:center;top:591.69px;font-size:11px;font-weight:bold;color:#000;transform:scaleX(1.1618);transform-origin:50% 0;">13</div>
<div class="t" style="left:1099px;width:39px;text-align:center;top:591.69px;font-size:11px;font-weight:bold;color:#000;transform:scaleX(1.1618);transform-origin:50% 0;">13</div>
<div class="t" style="left:419px;width:39px;text-align:center;top:611.69px;font-size:11px;font-weight:bold;color:#000;transform:scaleX(1.1618);transform-origin:50% 0;">14</div>
<div class="t" style="left:459px;width:39px;text-align:center;top:611.69px;font-size:11px;font-weight:bold;color:#000;transform:scaleX(1.1618);transform-origin:50% 0;">23</div>
<div class="t" style="left:1099px;width:39px;text-align:center;top:611.69px;font-size:11px;font-weight:bold;color:#000;transform:scaleX(1.1618);transform-origin:50% 0;">14</div>
<div class="t" style="left:179px;width:39px;text-align:center;top:631.69px;font-size:11px;font-weight:bold;color:#000;">E</div>
<div class="t" style="left:219px;width:39px;text-align:center;top:631.69px;font-size:11px;font-weight:bold;color:#000;">E</div>
<div class="t" style="left:259px;width:39px;text-align:center;top:631.69px;font-size:11px;font-weight:bold;color:#000;">E</div>
<div class="t" style="left:299px;width:39px;text-align:center;top:631.69px;font-size:11px;font-weight:bold;color:#000;">E</div>
<div class="t" style="left:339px;width:39px;text-align:center;top:631.69px;font-size:11px;font-weight:bold;color:#000;">E</div>
<div class="t" style="left:419px;width:39px;text-align:center;top:631.69px;font-size:11px;font-weight:bold;color:#000;transform:scaleX(1.1618);transform-origin:50% 0;">24</div>
<div class="t" style="left:459px;width:39px;text-align:center;top:631.69px;font-size:11px;font-weight:bold;color:#000;transform:scaleX(1.1618);transform-origin:50% 0;">24</div>
<div class="t" style="left:539px;width:39px;text-align:center;top:631.69px;font-size:11px;font-weight:bold;color:#000;">E</div>
<div class="t" style="left:579px;width:39px;text-align:center;top:631.69px;font-size:11px;font-weight:bold;color:#000;">E</div>
<div class="t" style="left:699px;width:39px;text-align:center;top:631.69px;font-size:11px;font-weight:bold;color:#000;">E</div>
<div class="t" style="left:739px;width:39px;text-align:center;top:631.69px;font-size:11px;font-weight:bold;color:#000;">E</div>
<div class="t" style="left:779px;width:39px;text-align:center;top:631.69px;font-size:11px;font-weight:bold;color:#000;">E</div>
<div class="t" style="left:819px;width:39px;text-align:center;top:631.69px;font-size:11px;font-weight:bold;color:#000;">E</div>
<div class="t" style="left:859px;width:39px;text-align:center;top:631.69px;font-size:11px;font-weight:bold;color:#000;">E</div>
<div class="t" style="left:899px;width:39px;text-align:center;top:631.69px;font-size:11px;font-weight:bold;color:#000;">E</div>
<div class="t" style="left:939px;width:39px;text-align:center;top:631.69px;font-size:11px;font-weight:bold;color:#000;">E</div>
<div class="t" style="left:979px;width:39px;text-align:center;top:631.69px;font-size:11px;font-weight:bold;color:#000;">E</div>
<div class="t" style="left:1019px;width:39px;text-align:center;top:631.69px;font-size:11px;font-weight:bold;color:#000;">E</div>
<div class="t" style="left:1059px;width:39px;text-align:center;top:631.69px;font-size:11px;font-weight:bold;color:#000;">E</div>
<div class="t" style="left:1099px;width:39px;text-align:center;top:631.69px;font-size:11px;font-weight:bold;color:#000;transform:scaleX(1.1618);transform-origin:50% 0;">24</div>
<div class="t" style="left:179px;width:39px;text-align:center;top:651.69px;font-size:11px;font-weight:bold;color:#000;">.</div>
<div class="t" style="left:219px;width:39px;text-align:center;top:651.69px;font-size:11px;font-weight:bold;color:#000;">.</div>
<div class="t" style="left:259px;width:39px;text-align:center;top:651.69px;font-size:11px;font-weight:bold;color:#000;">.</div>
<div class="t" style="left:299px;width:39px;text-align:center;top:651.69px;font-size:11px;font-weight:bold;color:#000;">.</div>
<div class="t" style="left:339px;width:39px;text-align:center;top:651.69px;font-size:11px;font-weight:bold;color:#000;">.</div>
<div class="t" style="left:379px;width:39px;text-align:center;top:651.69px;font-size:11px;font-weight:bold;color:#000;">.</div>
<div class="t" style="left:419px;width:39px;text-align:center;top:651.69px;font-size:11px;font-weight:bold;color:#000;">.</div>
<div class="t" style="left:459px;width:39px;text-align:center;top:651.69px;font-size:11px;font-weight:bold;color:#000;">.</div>
<div class="t" style="left:539px;width:39px;text-align:center;top:651.69px;font-size:11px;font-weight:bold;color:#000;">.</div>
<div class="t" style="left:579px;width:39px;text-align:center;top:651.69px;font-size:11px;font-weight:bold;color:#000;">.</div>
<div class="t" style="left:699px;width:39px;text-align:center;top:651.69px;font-size:11px;font-weight:bold;color:#000;">.</div>
<div class="t" style="left:739px;width:39px;text-align:center;top:651.69px;font-size:11px;font-weight:bold;color:#000;">.</div>
<div class="t" style="left:779px;width:39px;text-align:center;top:651.69px;font-size:11px;font-weight:bold;color:#000;">.</div>
<div class="t" style="left:819px;width:39px;text-align:center;top:651.69px;font-size:11px;font-weight:bold;color:#000;">.</div>
<div class="t" style="left:859px;width:39px;text-align:center;top:651.69px;font-size:11px;font-weight:bold;color:#000;">.</div>
<div class="t" style="left:899px;width:39px;text-align:center;top:651.69px;font-size:11px;font-weight:bold;color:#000;">.</div>
<div class="t" style="left:939px;width:39px;text-align:center;top:651.69px;font-size:11px;font-weight:bold;color:#000;">.</div>
<div class="t" style="left:979px;width:39px;text-align:center;top:651.69px;font-size:11px;font-weight:bold;color:#000;">.</div>
<div class="t" style="left:1019px;width:39px;text-align:center;top:651.69px;font-size:11px;font-weight:bold;color:#000;">.</div>
<div class="t" style="left:1059px;width:39px;text-align:center;top:651.69px;font-size:11px;font-weight:bold;color:#000;">.</div>
<div class="t" style="left:139px;width:39px;text-align:center;top:511.69px;font-size:11px;font-weight:bold;color:#000;">D</div>
<div class="t" style="left:139px;width:39px;text-align:center;top:671.69px;font-size:11px;font-weight:bold;color:#000;">D</div>
<div class="t" style="left:179px;width:39px;text-align:center;top:511.69px;font-size:11px;font-weight:bold;color:#000;">E</div>
<div class="t" style="left:179px;width:39px;text-align:center;top:671.69px;font-size:11px;font-weight:bold;color:#000;">E</div>
<div class="t" style="left:219px;width:39px;text-align:center;top:511.69px;font-size:11px;font-weight:bold;color:#000;">F</div>
<div class="t" style="left:219px;width:39px;text-align:center;top:671.69px;font-size:11px;font-weight:bold;color:#000;">F</div>
<div class="t" style="left:259px;width:39px;text-align:center;top:511.69px;font-size:11px;font-weight:bold;color:#000;">I</div>
<div class="t" style="left:259px;width:39px;text-align:center;top:671.69px;font-size:11px;font-weight:bold;color:#000;">I</div>
<div class="t" style="left:299px;width:39px;text-align:center;top:511.69px;font-size:11px;font-weight:bold;color:#000;">BK</div>
<div class="t" style="left:299px;width:39px;text-align:center;top:671.69px;font-size:11px;font-weight:bold;color:#000;">BK</div>
<div class="t" style="left:339px;width:39px;text-align:center;top:511.69px;font-size:11px;font-weight:bold;color:#000;">Mu</div>
<div class="t" style="left:339px;width:39px;text-align:center;top:671.69px;font-size:11px;font-weight:bold;color:#000;">Mu</div>
<div class="t" style="left:379px;width:39px;text-align:center;top:511.69px;font-size:11px;font-weight:bold;color:#000;">G</div>
<div class="t" style="left:379px;width:39px;text-align:center;top:671.69px;font-size:11px;font-weight:bold;color:#000;">G</div>
<div class="t" style="left:419px;width:39px;text-align:center;top:511.69px;font-size:11px;font-weight:bold;color:#000;">Geo</div>
<div class="t" style="left:419px;width:39px;text-align:center;top:671.69px;font-size:11px;font-weight:bold;color:#000;">Geo</div>
<div class="t" style="left:459px;width:39px;text-align:center;top:511.69px;font-size:11px;font-weight:bold;color:#000;">Gk</div>
<div class="t" style="left:459px;width:39px;text-align:center;top:671.69px;font-size:11px;font-weight:bold;color:#000;">Gk</div>
<div class="t" style="left:499px;width:39px;text-align:center;top:511.69px;font-size:11px;font-weight:bold;color:#000;">Wi</div>
<div class="t" style="left:499px;width:39px;text-align:center;top:671.69px;font-size:11px;font-weight:bold;color:#000;">Wi</div>
<div class="t" style="left:539px;width:39px;text-align:center;top:511.69px;font-size:11px;font-weight:bold;color:#000;">Rel</div>
<div class="t" style="left:539px;width:39px;text-align:center;top:671.69px;font-size:11px;font-weight:bold;color:#000;">Rel</div>
<div class="t" style="left:579px;width:39px;text-align:center;top:511.69px;font-size:11px;font-weight:bold;color:#000;">Eth</div>
<div class="t" style="left:579px;width:39px;text-align:center;top:671.69px;font-size:11px;font-weight:bold;color:#000;">Eth</div>
<div class="t" style="left:619px;width:39px;text-align:center;top:511.69px;font-size:11px;font-weight:bold;color:#000;">M</div>
<div class="t" style="left:619px;width:39px;text-align:center;top:671.69px;font-size:11px;font-weight:bold;color:#000;">M</div>
<div class="t" style="left:659px;width:39px;text-align:center;top:511.69px;font-size:11px;font-weight:bold;color:#000;">Ph</div>
<div class="t" style="left:659px;width:39px;text-align:center;top:671.69px;font-size:11px;font-weight:bold;color:#000;">Ph</div>
<div class="t" style="left:699px;width:39px;text-align:center;top:511.69px;font-size:11px;font-weight:bold;color:#000;">Ch</div>
<div class="t" style="left:699px;width:39px;text-align:center;top:671.69px;font-size:11px;font-weight:bold;color:#000;">Ch</div>
<div class="t" style="left:739px;width:39px;text-align:center;top:511.69px;font-size:11px;font-weight:bold;color:#000;">Bio</div>
<div class="t" style="left:739px;width:39px;text-align:center;top:671.69px;font-size:11px;font-weight:bold;color:#000;">Bio</div>
<div class="t" style="left:779px;width:39px;text-align:center;top:511.69px;font-size:11px;font-weight:bold;color:#000;">S</div>
<div class="t" style="left:779px;width:39px;text-align:center;top:671.69px;font-size:11px;font-weight:bold;color:#000;">S</div>
<div class="t" style="left:819px;width:39px;text-align:center;top:511.69px;font-size:11px;font-weight:bold;color:#000;">Lit</div>
<div class="t" style="left:819px;width:39px;text-align:center;top:671.69px;font-size:11px;font-weight:bold;color:#000;">Lit</div>
<div class="t" style="left:859px;width:39px;text-align:center;top:511.69px;font-size:11px;font-weight:bold;color:#000;">Psy</div>
<div class="t" style="left:859px;width:39px;text-align:center;top:671.69px;font-size:11px;font-weight:bold;color:#000;">Psy</div>
<div class="t" style="left:899px;width:39px;text-align:center;top:511.69px;font-size:11px;font-weight:bold;color:#000;">Ast</div>
<div class="t" style="left:899px;width:39px;text-align:center;top:671.69px;font-size:11px;font-weight:bold;color:#000;">Ast</div>
<div class="t" style="left:939px;width:39px;text-align:center;top:511.69px;font-size:11px;font-weight:bold;color:#000;">DG</div>
<div class="t" style="left:939px;width:39px;text-align:center;top:671.69px;font-size:11px;font-weight:bold;color:#000;">DG</div>
<div class="t" style="left:979px;width:39px;text-align:center;top:511.69px;font-size:11px;font-weight:bold;color:#000;">Gl</div>
<div class="t" style="left:979px;width:39px;text-align:center;top:671.69px;font-size:11px;font-weight:bold;color:#000;">Gl</div>
<div class="t" style="left:1019px;width:39px;text-align:center;top:511.69px;font-size:11px;font-weight:bold;color:#000;">Inf</div>
<div class="t" style="left:1019px;width:39px;text-align:center;top:671.69px;font-size:11px;font-weight:bold;color:#000;">Inf</div>
<div class="t" style="left:1059px;width:39px;text-align:center;top:511.69px;font-size:11px;font-weight:bold;color:#000;">If</div>
<div class="t" style="left:1059px;width:39px;text-align:center;top:671.69px;font-size:11px;font-weight:bold;color:#000;">If</div>
<div class="t" style="left:1099px;width:39px;text-align:center;top:511.69px;font-size:11px;font-weight:bold;color:#000;">sf</div>
<div class="t" style="left:1099px;width:39px;text-align:center;top:671.69px;font-size:11px;font-weight:bold;color:#000;">sf</div>
<div class="t" style="left:139px;width:39px;text-align:center;top:691.69px;font-size:11px;font-weight:bold;color:#22a070;transform:scaleX(1.0623);transform-origin:50% 0;">m1</div>
<div class="t" style="left:179px;width:39px;text-align:center;top:691.69px;font-size:11px;font-weight:bold;color:#22a070;transform:scaleX(1.1618);transform-origin:50% 0;">4</div>
<div class="t" style="left:219px;width:39px;text-align:center;top:691.69px;font-size:11px;font-weight:bold;color:#22a070;">.</div>
<div class="t" style="left:259px;width:39px;text-align:center;top:691.69px;font-size:11px;font-weight:bold;color:#22a070;">.</div>
<div class="t" style="left:299px;width:39px;text-align:center;top:691.69px;font-size:11px;font-weight:bold;color:#22a070;transform:scaleX(1.1618);transform-origin:50% 0;">4</div>
<div class="t" style="left:339px;width:39px;text-align:center;top:691.69px;font-size:11px;font-weight:bold;color:#22a070;">.</div>
<div class="t" style="left:379px;width:39px;text-align:center;top:691.69px;font-size:11px;font-weight:bold;color:#22a070;transform:scaleX(1.1618);transform-origin:50% 0;">4</div>
<div class="t" style="left:419px;width:39px;text-align:center;top:691.69px;font-size:11px;font-weight:bold;color:#22a070;">wi</div>
<div class="t" style="left:459px;width:39px;text-align:center;top:691.69px;font-size:11px;font-weight:bold;color:#22a070;">wi</div>
<div class="t" style="left:499px;width:39px;text-align:center;top:691.69px;font-size:11px;font-weight:bold;color:#22a070;transform:scaleX(1.0771);transform-origin:50% 0;">L3</div>
<div class="t" style="left:539px;width:39px;text-align:center;top:691.69px;font-size:11px;font-weight:bold;color:#22a070;transform:scaleX(1.1618);transform-origin:50% 0;">4</div>
<div class="t" style="left:579px;width:39px;text-align:center;top:691.69px;font-size:11px;font-weight:bold;color:#22a070;">.</div>
<div class="t" style="left:619px;width:39px;text-align:center;top:691.69px;font-size:11px;font-weight:bold;color:#22a070;transform:scaleX(1.0771);transform-origin:50% 0;">L1</div>
<div class="t" style="left:659px;width:39px;text-align:center;top:691.69px;font-size:11px;font-weight:bold;color:#22a070;transform:scaleX(1.0771);transform-origin:50% 0;">L2</div>
<div class="t" style="left:699px;width:39px;text-align:center;top:691.69px;font-size:11px;font-weight:bold;color:#22a070;transform:scaleX(1.1618);transform-origin:50% 0;">4</div>
<div class="t" style="left:739px;width:39px;text-align:center;top:691.69px;font-size:11px;font-weight:bold;color:#22a070;">.</div>
<div class="t" style="left:779px;width:39px;text-align:center;top:691.69px;font-size:11px;font-weight:bold;color:#22a070;transform:scaleX(1.1618);transform-origin:50% 0;">4</div>
<div class="t" style="left:819px;width:39px;text-align:center;top:691.69px;font-size:11px;font-weight:bold;color:#22a070;">.</div>
<div class="t" style="left:859px;width:39px;text-align:center;top:691.69px;font-size:11px;font-weight:bold;color:#22a070;">.</div>
<div class="t" style="left:899px;width:39px;text-align:center;top:691.69px;font-size:11px;font-weight:bold;color:#22a070;">.</div>
<div class="t" style="left:939px;width:39px;text-align:center;top:691.69px;font-size:11px;font-weight:bold;color:#22a070;">.</div>
<div class="t" style="left:979px;width:39px;text-align:center;top:691.69px;font-size:11px;font-weight:bold;color:#22a070;">.</div>
<div class="t" style="left:1019px;width:39px;text-align:center;top:691.69px;font-size:11px;font-weight:bold;color:#22a070;">.</div>
<div class="t" style="left:1059px;width:39px;text-align:center;top:691.69px;font-size:11px;font-weight:bold;color:#22a070;">.</div>
<div class="t" style="left:1099px;width:39px;text-align:center;top:691.69px;font-size:11px;font-weight:bold;color:#22a070;transform:scaleX(1.0623);transform-origin:50% 0;">m2</div>
<div class="t" style="left:139px;width:39px;text-align:center;top:711.69px;font-size:11px;font-weight:bold;color:#000;transform:scaleX(1.1618);transform-origin:50% 0;">4</div>
<div class="t" style="left:179px;width:39px;text-align:center;top:711.69px;font-size:11px;font-weight:bold;color:#000;transform:scaleX(1.1618);transform-origin:50% 0;">4</div>
<div class="t" style="left:219px;width:39px;text-align:center;top:711.69px;font-size:11px;font-weight:bold;color:#000;">.</div>
<div class="t" style="left:259px;width:39px;text-align:center;top:711.69px;font-size:11px;font-weight:bold;color:#000;">.</div>
<div class="t" style="left:299px;width:39px;text-align:center;top:711.69px;font-size:11px;font-weight:bold;color:#000;transform:scaleX(1.1618);transform-origin:50% 0;">4</div>
<div class="t" style="left:339px;width:39px;text-align:center;top:711.69px;font-size:11px;font-weight:bold;color:#000;">.</div>
<div class="t" style="left:379px;width:39px;text-align:center;top:711.69px;font-size:11px;font-weight:bold;color:#000;transform:scaleX(1.1618);transform-origin:50% 0;">4</div>
<div class="t" style="left:419px;width:39px;text-align:center;top:711.69px;font-size:11px;font-weight:bold;color:#000;transform:scaleX(1.1618);transform-origin:50% 0;">1</div>
<div class="t" style="left:459px;width:39px;text-align:center;top:711.69px;font-size:11px;font-weight:bold;color:#000;transform:scaleX(1.1618);transform-origin:50% 0;">1</div>
<div class="t" style="left:499px;width:39px;text-align:center;top:711.69px;font-size:11px;font-weight:bold;color:#000;transform:scaleX(1.1618);transform-origin:50% 0;">4</div>
<div class="t" style="left:539px;width:39px;text-align:center;top:711.69px;font-size:11px;font-weight:bold;color:#000;transform:scaleX(1.1618);transform-origin:50% 0;">4</div>
<div class="t" style="left:579px;width:39px;text-align:center;top:711.69px;font-size:11px;font-weight:bold;color:#000;">.</div>
<div class="t" style="left:619px;width:39px;text-align:center;top:711.69px;font-size:11px;font-weight:bold;color:#000;transform:scaleX(1.1618);transform-origin:50% 0;">4</div>
<div class="t" style="left:659px;width:39px;text-align:center;top:711.69px;font-size:11px;font-weight:bold;color:#000;transform:scaleX(1.1618);transform-origin:50% 0;">4</div>
<div class="t" style="left:699px;width:39px;text-align:center;top:711.69px;font-size:11px;font-weight:bold;color:#000;transform:scaleX(1.1618);transform-origin:50% 0;">4</div>
<div class="t" style="left:739px;width:39px;text-align:center;top:711.69px;font-size:11px;font-weight:bold;color:#000;">.</div>
<div class="t" style="left:779px;width:39px;text-align:center;top:711.69px;font-size:11px;font-weight:bold;color:#000;transform:scaleX(1.1618);transform-origin:50% 0;">4</div>
<div class="t" style="left:819px;width:39px;text-align:center;top:711.69px;font-size:11px;font-weight:bold;color:#000;">.</div>
<div class="t" style="left:859px;width:39px;text-align:center;top:711.69px;font-size:11px;font-weight:bold;color:#000;">.</div>
<div class="t" style="left:899px;width:39px;text-align:center;top:711.69px;font-size:11px;font-weight:bold;color:#000;">.</div>
<div class="t" style="left:939px;width:39px;text-align:center;top:711.69px;font-size:11px;font-weight:bold;color:#000;">.</div>
<div class="t" style="left:979px;width:39px;text-align:center;top:711.69px;font-size:11px;font-weight:bold;color:#000;">.</div>
<div class="t" style="left:1019px;width:39px;text-align:center;top:711.69px;font-size:11px;font-weight:bold;color:#000;">.</div>
<div class="t" style="left:1059px;width:39px;text-align:center;top:711.69px;font-size:11px;font-weight:bold;color:#000;">.</div>
<div class="t" style="left:1099px;width:39px;text-align:center;top:711.69px;font-size:11px;font-weight:bold;color:#000;transform:scaleX(1.1618);transform-origin:50% 0;">2</div>
<div class="t" style="left:139px;width:39px;text-align:center;top:731.69px;font-size:11px;font-weight:bold;color:#000;transform:scaleX(1.1618);transform-origin:50% 0;">4</div>
<div class="t" style="left:179px;width:39px;text-align:center;top:731.69px;font-size:11px;font-weight:bold;color:#000;transform:scaleX(1.1618);transform-origin:50% 0;">4</div>
<div class="t" style="left:219px;width:39px;text-align:center;top:731.69px;font-size:11px;font-weight:bold;color:#000;">.</div>
<div class="t" style="left:259px;width:39px;text-align:center;top:731.69px;font-size:11px;font-weight:bold;color:#000;">.</div>
<div class="t" style="left:299px;width:39px;text-align:center;top:731.69px;font-size:11px;font-weight:bold;color:#000;transform:scaleX(1.1618);transform-origin:50% 0;">2</div>
<div class="t" style="left:339px;width:39px;text-align:center;top:731.69px;font-size:11px;font-weight:bold;color:#000;">.</div>
<div class="t" style="left:379px;width:39px;text-align:center;top:731.69px;font-size:11px;font-weight:bold;color:#000;transform:scaleX(1.1618);transform-origin:50% 0;">4</div>
<div class="t" style="left:419px;width:39px;text-align:center;top:731.69px;font-size:11px;font-weight:bold;color:#000;transform:scaleX(1.1618);transform-origin:50% 0;">1</div>
<div class="t" style="left:459px;width:39px;text-align:center;top:731.69px;font-size:11px;font-weight:bold;color:#000;transform:scaleX(1.1618);transform-origin:50% 0;">1</div>
<div class="t" style="left:499px;width:39px;text-align:center;top:731.69px;font-size:11px;font-weight:bold;color:#000;transform:scaleX(1.1618);transform-origin:50% 0;">4</div>
<div class="t" style="left:539px;width:39px;text-align:center;top:731.69px;font-size:11px;font-weight:bold;color:#000;">.</div>
<div class="t" style="left:579px;width:39px;text-align:center;top:731.69px;font-size:11px;font-weight:bold;color:#000;">.</div>
<div class="t" style="left:619px;width:39px;text-align:center;top:731.69px;font-size:11px;font-weight:bold;color:#000;transform:scaleX(1.1618);transform-origin:50% 0;">4</div>
<div class="t" style="left:659px;width:39px;text-align:center;top:731.69px;font-size:11px;font-weight:bold;color:#000;transform:scaleX(1.1618);transform-origin:50% 0;">4</div>
<div class="t" style="left:699px;width:39px;text-align:center;top:731.69px;font-size:11px;font-weight:bold;color:#000;transform:scaleX(1.1618);transform-origin:50% 0;">4</div>
<div class="t" style="left:739px;width:39px;text-align:center;top:731.69px;font-size:11px;font-weight:bold;color:#000;">.</div>
<div class="t" style="left:779px;width:39px;text-align:center;top:731.69px;font-size:11px;font-weight:bold;color:#000;">.</div>
<div class="t" style="left:819px;width:39px;text-align:center;top:731.69px;font-size:11px;font-weight:bold;color:#000;">.</div>
<div class="t" style="left:859px;width:39px;text-align:center;top:731.69px;font-size:11px;font-weight:bold;color:#000;">.</div>
<div class="t" style="left:899px;width:39px;text-align:center;top:731.69px;font-size:11px;font-weight:bold;color:#000;">.</div>
<div class="t" style="left:939px;width:39px;text-align:center;top:731.69px;font-size:11px;font-weight:bold;color:#000;">.</div>
<div class="t" style="left:979px;width:39px;text-align:center;top:731.69px;font-size:11px;font-weight:bold;color:#000;">.</div>
<div class="t" style="left:1019px;width:39px;text-align:center;top:731.69px;font-size:11px;font-weight:bold;color:#000;">.</div>
<div class="t" style="left:1059px;width:39px;text-align:center;top:731.69px;font-size:11px;font-weight:bold;color:#000;">.</div>
<div class="t" style="left:1099px;width:39px;text-align:center;top:731.69px;font-size:11px;font-weight:bold;color:#000;">.</div>
<div class="t" style="left:139px;width:39px;text-align:center;top:751.27px;font-size:11.5px;font-weight:normal;color:#000;">[3]</div>
<div class="t" style="left:179px;width:39px;text-align:center;top:751.27px;font-size:11.5px;font-weight:normal;color:#000;">[3]</div>
<div class="t" style="left:219px;width:39px;text-align:center;top:751.27px;font-size:11.5px;font-weight:normal;color:#000;">.</div>
<div class="t" style="left:259px;width:39px;text-align:center;top:751.27px;font-size:11.5px;font-weight:normal;color:#000;">.</div>
<div class="t" style="left:299px;width:39px;text-align:center;top:751.27px;font-size:11.5px;font-weight:normal;color:#000;">[2]</div>
<div class="t" style="left:339px;width:39px;text-align:center;top:751.27px;font-size:11.5px;font-weight:normal;color:#000;">.</div>
<div class="t" style="left:379px;width:39px;text-align:center;top:751.27px;font-size:11.5px;font-weight:normal;color:#000;">[2]</div>
<div class="t" style="left:419px;width:39px;text-align:center;top:751.27px;font-size:11.5px;font-weight:normal;color:#000;">.</div>
<div class="t" style="left:459px;width:39px;text-align:center;top:751.27px;font-size:11.5px;font-weight:normal;color:#000;">[2]</div>
<div class="t" style="left:499px;width:39px;text-align:center;top:751.27px;font-size:11.5px;font-weight:normal;color:#000;">[5]</div>
<div class="t" style="left:539px;width:39px;text-align:center;top:751.27px;font-size:11.5px;font-weight:normal;color:#000;">[2]</div>
<div class="t" style="left:579px;width:39px;text-align:center;top:751.27px;font-size:11.5px;font-weight:normal;color:#000;">.</div>
<div class="t" style="left:619px;width:39px;text-align:center;top:751.27px;font-size:11.5px;font-weight:normal;color:#000;">[5]</div>
<div class="t" style="left:659px;width:39px;text-align:center;top:751.27px;font-size:11.5px;font-weight:normal;color:#000;">[5]</div>
<div class="t" style="left:699px;width:39px;text-align:center;top:751.27px;font-size:11.5px;font-weight:normal;color:#000;">[3]</div>
<div class="t" style="left:739px;width:39px;text-align:center;top:751.27px;font-size:11.5px;font-weight:normal;color:#000;">.</div>
<div class="t" style="left:779px;width:39px;text-align:center;top:751.27px;font-size:11.5px;font-weight:normal;color:#000;">[2]</div>
<div class="t" style="left:819px;width:39px;text-align:center;top:751.27px;font-size:11.5px;font-weight:normal;color:#000;">.</div>
<div class="t" style="left:859px;width:39px;text-align:center;top:751.27px;font-size:11.5px;font-weight:normal;color:#000;">.</div>
<div class="t" style="left:899px;width:39px;text-align:center;top:751.27px;font-size:11.5px;font-weight:normal;color:#000;">.</div>
<div class="t" style="left:939px;width:39px;text-align:center;top:751.27px;font-size:11.5px;font-weight:normal;color:#000;">.</div>
<div class="t" style="left:979px;width:39px;text-align:center;top:751.27px;font-size:11.5px;font-weight:normal;color:#000;">.</div>
<div class="t" style="left:1019px;width:39px;text-align:center;top:751.27px;font-size:11.5px;font-weight:normal;color:#000;">.</div>
<div class="t" style="left:1059px;width:39px;text-align:center;top:751.27px;font-size:11.5px;font-weight:normal;color:#000;">.</div>
<div class="t" style="left:1099px;width:39px;text-align:center;top:751.27px;font-size:11.5px;font-weight:normal;color:#000;">[3]</div>
<div class="t" style="left:139px;width:39px;text-align:center;top:771.27px;font-size:11.5px;font-weight:normal;color:#000;">[3]</div>
<div class="t" style="left:179px;width:39px;text-align:center;top:771.27px;font-size:11.5px;font-weight:normal;color:#000;">[3]</div>
<div class="t" style="left:219px;width:39px;text-align:center;top:771.27px;font-size:11.5px;font-weight:normal;color:#000;">.</div>
<div class="t" style="left:259px;width:39px;text-align:center;top:771.27px;font-size:11.5px;font-weight:normal;color:#000;">.</div>
<div class="t" style="left:299px;width:39px;text-align:center;top:771.27px;font-size:11.5px;font-weight:normal;color:#000;">[2]</div>
<div class="t" style="left:339px;width:39px;text-align:center;top:771.27px;font-size:11.5px;font-weight:normal;color:#000;">.</div>
<div class="t" style="left:379px;width:39px;text-align:center;top:771.27px;font-size:11.5px;font-weight:normal;color:#000;">[2]</div>
<div class="t" style="left:419px;width:39px;text-align:center;top:771.27px;font-size:11.5px;font-weight:normal;color:#000;">.</div>
<div class="t" style="left:459px;width:39px;text-align:center;top:771.27px;font-size:11.5px;font-weight:normal;color:#000;">.</div>
<div class="t" style="left:499px;width:39px;text-align:center;top:771.27px;font-size:11.5px;font-weight:normal;color:#000;">[5]</div>
<div class="t" style="left:539px;width:39px;text-align:center;top:771.27px;font-size:11.5px;font-weight:normal;color:#000;">[2]</div>
<div class="t" style="left:579px;width:39px;text-align:center;top:771.27px;font-size:11.5px;font-weight:normal;color:#000;">.</div>
<div class="t" style="left:619px;width:39px;text-align:center;top:771.27px;font-size:11.5px;font-weight:normal;color:#000;">[5]</div>
<div class="t" style="left:659px;width:39px;text-align:center;top:771.27px;font-size:11.5px;font-weight:normal;color:#000;">[5]</div>
<div class="t" style="left:699px;width:39px;text-align:center;top:771.27px;font-size:11.5px;font-weight:normal;color:#000;">[3]</div>
<div class="t" style="left:739px;width:39px;text-align:center;top:771.27px;font-size:11.5px;font-weight:normal;color:#000;">.</div>
<div class="t" style="left:779px;width:39px;text-align:center;top:771.27px;font-size:11.5px;font-weight:normal;color:#000;">[2]</div>
<div class="t" style="left:819px;width:39px;text-align:center;top:771.27px;font-size:11.5px;font-weight:normal;color:#000;">.</div>
<div class="t" style="left:859px;width:39px;text-align:center;top:771.27px;font-size:11.5px;font-weight:normal;color:#000;">.</div>
<div class="t" style="left:899px;width:39px;text-align:center;top:771.27px;font-size:11.5px;font-weight:normal;color:#000;">.</div>
<div class="t" style="left:939px;width:39px;text-align:center;top:771.27px;font-size:11.5px;font-weight:normal;color:#000;">.</div>
<div class="t" style="left:979px;width:39px;text-align:center;top:771.27px;font-size:11.5px;font-weight:normal;color:#000;">.</div>
<div class="t" style="left:1019px;width:39px;text-align:center;top:771.27px;font-size:11.5px;font-weight:normal;color:#000;">.</div>
<div class="t" style="left:1059px;width:39px;text-align:center;top:771.27px;font-size:11.5px;font-weight:normal;color:#000;">.</div>
<div class="t" style="left:1099px;width:39px;text-align:center;top:771.27px;font-size:11.5px;font-weight:normal;color:#000;">[3]</div>
<div class="t" style="left:139px;width:39px;text-align:center;top:791.27px;font-size:11.5px;font-weight:normal;color:#000;">[3]</div>
<div class="t" style="left:179px;width:39px;text-align:center;top:791.27px;font-size:11.5px;font-weight:normal;color:#000;">[3]</div>
<div class="t" style="left:219px;width:39px;text-align:center;top:791.27px;font-size:11.5px;font-weight:normal;color:#000;">.</div>
<div class="t" style="left:259px;width:39px;text-align:center;top:791.27px;font-size:11.5px;font-weight:normal;color:#000;">.</div>
<div class="t" style="left:299px;width:39px;text-align:center;top:791.27px;font-size:11.5px;font-weight:normal;color:#000;">[2]</div>
<div class="t" style="left:339px;width:39px;text-align:center;top:791.27px;font-size:11.5px;font-weight:normal;color:#000;">.</div>
<div class="t" style="left:379px;width:39px;text-align:center;top:791.27px;font-size:11.5px;font-weight:normal;color:#000;">[2]</div>
<div class="t" style="left:419px;width:39px;text-align:center;top:791.27px;font-size:11.5px;font-weight:normal;color:#000;">[2]</div>
<div class="t" style="left:459px;width:39px;text-align:center;top:791.27px;font-size:11.5px;font-weight:normal;color:#000;">.</div>
<div class="t" style="left:499px;width:39px;text-align:center;top:791.27px;font-size:11.5px;font-weight:normal;color:#000;">[5]</div>
<div class="t" style="left:539px;width:39px;text-align:center;top:791.27px;font-size:11.5px;font-weight:normal;color:#000;">[2]</div>
<div class="t" style="left:579px;width:39px;text-align:center;top:791.27px;font-size:11.5px;font-weight:normal;color:#000;">.</div>
<div class="t" style="left:619px;width:39px;text-align:center;top:791.27px;font-size:11.5px;font-weight:normal;color:#000;">[5]</div>
<div class="t" style="left:659px;width:39px;text-align:center;top:791.27px;font-size:11.5px;font-weight:normal;color:#000;">[5]</div>
<div class="t" style="left:699px;width:39px;text-align:center;top:791.27px;font-size:11.5px;font-weight:normal;color:#000;">[3]</div>
<div class="t" style="left:739px;width:39px;text-align:center;top:791.27px;font-size:11.5px;font-weight:normal;color:#000;">.</div>
<div class="t" style="left:779px;width:39px;text-align:center;top:791.27px;font-size:11.5px;font-weight:normal;color:#000;">[2]</div>
<div class="t" style="left:819px;width:39px;text-align:center;top:791.27px;font-size:11.5px;font-weight:normal;color:#000;">.</div>
<div class="t" style="left:859px;width:39px;text-align:center;top:791.27px;font-size:11.5px;font-weight:normal;color:#000;">.</div>
<div class="t" style="left:899px;width:39px;text-align:center;top:791.27px;font-size:11.5px;font-weight:normal;color:#000;">.</div>
<div class="t" style="left:939px;width:39px;text-align:center;top:791.27px;font-size:11.5px;font-weight:normal;color:#000;">.</div>
<div class="t" style="left:979px;width:39px;text-align:center;top:791.27px;font-size:11.5px;font-weight:normal;color:#000;">.</div>
<div class="t" style="left:1019px;width:39px;text-align:center;top:791.27px;font-size:11.5px;font-weight:normal;color:#000;">.</div>
<div class="t" style="left:1059px;width:39px;text-align:center;top:791.27px;font-size:11.5px;font-weight:normal;color:#000;">.</div>
<div class="t" style="left:1099px;width:39px;text-align:center;top:791.27px;font-size:11.5px;font-weight:normal;color:#000;">--</div>
<div class="t" style="left:139px;width:39px;text-align:center;top:811.27px;font-size:11.5px;font-weight:normal;color:#000;">[3]</div>
<div class="t" style="left:179px;width:39px;text-align:center;top:811.27px;font-size:11.5px;font-weight:normal;color:#000;">[3]</div>
<div class="t" style="left:219px;width:39px;text-align:center;top:811.27px;font-size:11.5px;font-weight:normal;color:#000;">.</div>
<div class="t" style="left:259px;width:39px;text-align:center;top:811.27px;font-size:11.5px;font-weight:normal;color:#000;">.</div>
<div class="t" style="left:299px;width:39px;text-align:center;top:811.27px;font-size:11.5px;font-weight:normal;color:#000;">[2]</div>
<div class="t" style="left:339px;width:39px;text-align:center;top:811.27px;font-size:11.5px;font-weight:normal;color:#000;">.</div>
<div class="t" style="left:379px;width:39px;text-align:center;top:811.27px;font-size:11.5px;font-weight:normal;color:#000;">[2]</div>
<div class="t" style="left:419px;width:39px;text-align:center;top:811.27px;font-size:11.5px;font-weight:normal;color:#000;">.</div>
<div class="t" style="left:459px;width:39px;text-align:center;top:811.27px;font-size:11.5px;font-weight:normal;color:#000;">.</div>
<div class="t" style="left:499px;width:39px;text-align:center;top:811.27px;font-size:11.5px;font-weight:normal;color:#000;">[5]</div>
<div class="t" style="left:539px;width:39px;text-align:center;top:811.27px;font-size:11.5px;font-weight:normal;color:#000;">[2]</div>
<div class="t" style="left:579px;width:39px;text-align:center;top:811.27px;font-size:11.5px;font-weight:normal;color:#000;">.</div>
<div class="t" style="left:619px;width:39px;text-align:center;top:811.27px;font-size:11.5px;font-weight:normal;color:#000;">[5]</div>
<div class="t" style="left:659px;width:39px;text-align:center;top:811.27px;font-size:11.5px;font-weight:normal;color:#000;">[5]</div>
<div class="t" style="left:699px;width:39px;text-align:center;top:811.27px;font-size:11.5px;font-weight:normal;color:#000;">[3]</div>
<div class="t" style="left:739px;width:39px;text-align:center;top:811.27px;font-size:11.5px;font-weight:normal;color:#000;">.</div>
<div class="t" style="left:779px;width:39px;text-align:center;top:811.27px;font-size:11.5px;font-weight:normal;color:#000;">[2]</div>
<div class="t" style="left:819px;width:39px;text-align:center;top:811.27px;font-size:11.5px;font-weight:normal;color:#000;">.</div>
<div class="t" style="left:859px;width:39px;text-align:center;top:811.27px;font-size:11.5px;font-weight:normal;color:#000;">.</div>
<div class="t" style="left:899px;width:39px;text-align:center;top:811.27px;font-size:11.5px;font-weight:normal;color:#000;">.</div>
<div class="t" style="left:939px;width:39px;text-align:center;top:811.27px;font-size:11.5px;font-weight:normal;color:#000;">.</div>
<div class="t" style="left:979px;width:39px;text-align:center;top:811.27px;font-size:11.5px;font-weight:normal;color:#000;">.</div>
<div class="t" style="left:1019px;width:39px;text-align:center;top:811.27px;font-size:11.5px;font-weight:normal;color:#000;">.</div>
<div class="t" style="left:1059px;width:39px;text-align:center;top:811.27px;font-size:11.5px;font-weight:normal;color:#000;">.</div>
<div class="t" style="left:1099px;width:39px;text-align:center;top:811.27px;font-size:11.5px;font-weight:normal;color:#000;">--</div>
<div class="t " style="left:32px;top:691.69px;font-size:11px;font-weight:bold;color:#22a070;">BelK.:</div>
<div class="t " style="left:32px;top:711.69px;font-size:11px;font-weight:bold;color:#000;">Kursz.:</div>
<div class="t " style="left:32px;top:731.69px;font-size:11px;font-weight:bold;color:#000;">PflAnr.:</div>
<div class="t" style="left:84px;width:54px;text-align:center;top:711.69px;font-size:11px;font-weight:bold;color:#22a070;transform:scaleX(1.1618);transform-origin:50% 0;">44</div>
<div class="t" style="left:84px;width:54px;text-align:center;top:731.69px;font-size:11px;font-weight:bold;color:#22a070;transform:scaleX(1.1618);transform-origin:50% 0;">32</div>
<div class="t " style="left:32px;top:751.69px;font-size:11px;font-weight:bold;color:#000;transform:scaleX(1.1056);transform-origin:0 0;">Jg1.1</div>
<div class="t" style="left:84px;width:54px;text-align:center;top:751.69px;font-size:11px;font-weight:bold;color:#000;transform:scaleX(1.1618);transform-origin:50% 0;">37</div>
<div class="t " style="left:32px;top:771.69px;font-size:11px;font-weight:bold;color:#000;transform:scaleX(1.1056);transform-origin:0 0;">Jg1.2</div>
<div class="t" style="left:84px;width:54px;text-align:center;top:771.69px;font-size:11px;font-weight:bold;color:#000;transform:scaleX(1.1618);transform-origin:50% 0;">35</div>
<div class="t " style="left:32px;top:791.69px;font-size:11px;font-weight:bold;color:#000;transform:scaleX(1.1056);transform-origin:0 0;">Jg2.1</div>
<div class="t" style="left:84px;width:54px;text-align:center;top:791.69px;font-size:11px;font-weight:bold;color:#000;transform:scaleX(1.1618);transform-origin:50% 0;">34</div>
<div class="t " style="left:32px;top:811.69px;font-size:11px;font-weight:bold;color:#000;transform:scaleX(1.1056);transform-origin:0 0;">Jg2.2</div>
<div class="t" style="left:84px;width:54px;text-align:center;top:811.69px;font-size:11px;font-weight:bold;color:#000;transform:scaleX(1.1618);transform-origin:50% 0;">32</div>
<div class="a" style="left:179px;top:687px;width:39px;height:19px;border:1px dotted #000;"></div>
<div class="a" style="left:29px;top:835px;width:1110px;height:157px;background:#ffedc8;border:1px solid #6a6a6a;"></div>
<div class="t " style="left:32px;top:837.67px;font-size:12.2px;font-weight:normal;color:#000;transform:scaleX(1.0056);transform-origin:0 0;">Kurswahl OK!</div>
<div class="t " style="left:32px;top:852.67px;font-size:12.2px;font-weight:normal;color:#000;transform:scaleX(1.0229);transform-origin:0 0;">-- Hinweis(e) --</div>
<div class="t " style="left:41px;top:867.67px;font-size:12.2px;font-weight:normal;color:#000;transform:scaleX(1.0024);transform-origin:0 0;">- Sport: für einen fehlenden Sportkurs stünde kein Ersatzkurs zur Verfügung!</div>
<div class="a" style="left:1px;top:1019px;width:1259px;height:20px;border-top:1px solid #0e7f80;border-bottom:1px solid #0e7f80;border-left:1px solid #0e7f80;background:#fff;"></div>
<div class="t " style="left:14px;top:1022.50px;font-size:12.4px;font-weight:normal;color:#000;transform:scaleX(0.8760);transform-origin:0 0;">HPPAV-SSD | 43718468326412</div>
<div class="t " style="left:229px;top:1022.50px;font-size:12.4px;font-weight:normal;color:#000;transform:scaleX(0.9146);transform-origin:0 0;">ti (SDWHRPA)</div>
<div class="t " style="left:386px;top:1022.50px;font-size:12.4px;font-weight:normal;color:#000;transform:scaleX(0.9672);transform-origin:0 0;">winprosa</div>
<div class="t " style="left:594px;top:1022.50px;font-size:12.4px;font-weight:normal;color:#000;transform:scaleX(0.9223);transform-origin:0 0;">2019-09-10</div>
<div class="t " style="left:714px;top:1022.50px;font-size:12.4px;font-weight:normal;color:#000;transform:scaleX(0.9469);transform-origin:0 0;">987 - 01234567 - Demo-Gymnasium Stuttgart [ RP Stuttgart]</div>
<div class="a" style="left:91px;top:218px;width:79px;height:27px;border:5px solid #ff0000;border-radius:7px;"></div>
<div class="a" style="left:86px;top:254px;width:233px;height:32px;border:5px solid #ff0000;border-radius:7px;"></div>
<div class="a" style="left:439px;top:255px;width:564px;height:36px;border:5px solid #40ffff;border-radius:7px;"></div>
<div class="a" style="left:1001px;top:261px;width:239px;height:44px;border:3px solid #ff88ee;border-radius:6px;"></div>
<div class="a" style="left:370px;top:320px;width:204px;height:31px;border:5px solid #ff00ff;border-radius:7px;"></div>
<div class="a" style="left:365px;top:353px;width:212px;height:83px;border:5px solid #0000ff;border-radius:7px;"></div>
<div class="a" style="left:577px;top:312px;width:411px;height:127px;border:5px solid #00c400;border-radius:6px;"></div>
<div class="a" style="left:416px;top:504px;width:85px;height:184px;border:5px solid #40ffff;border-radius:7px;"></div>
<div class="a" style="left:1097px;top:505px;width:43px;height:182px;border:5px solid #40ffff;border-radius:7px;"></div>
<div class="a" style="left:134px;top:742px;width:1009px;height:92px;border:5px solid #0000ff;border-radius:6px;"></div>
<div class="a" style="left:1089px;top:490px;width:63px;height:352px;border:5px solid #00c400;border-radius:6px;"></div>
<svg class="a" style="left:0px;top:0px;pointer-events:none;" width="1260" height="1040" viewBox="0 0 1260 1040"><path d="M985 436 L1092 493" stroke="#00c400" stroke-width="5.5" fill="none"/><path d="M1129.5 380 V318" stroke="#ff88ee" stroke-width="3" fill="none"/><path d="M1129.5 301 L1141 330 L1129.5 321 L1118 330 z" fill="#ff88ee"/></svg>
</body></html>
